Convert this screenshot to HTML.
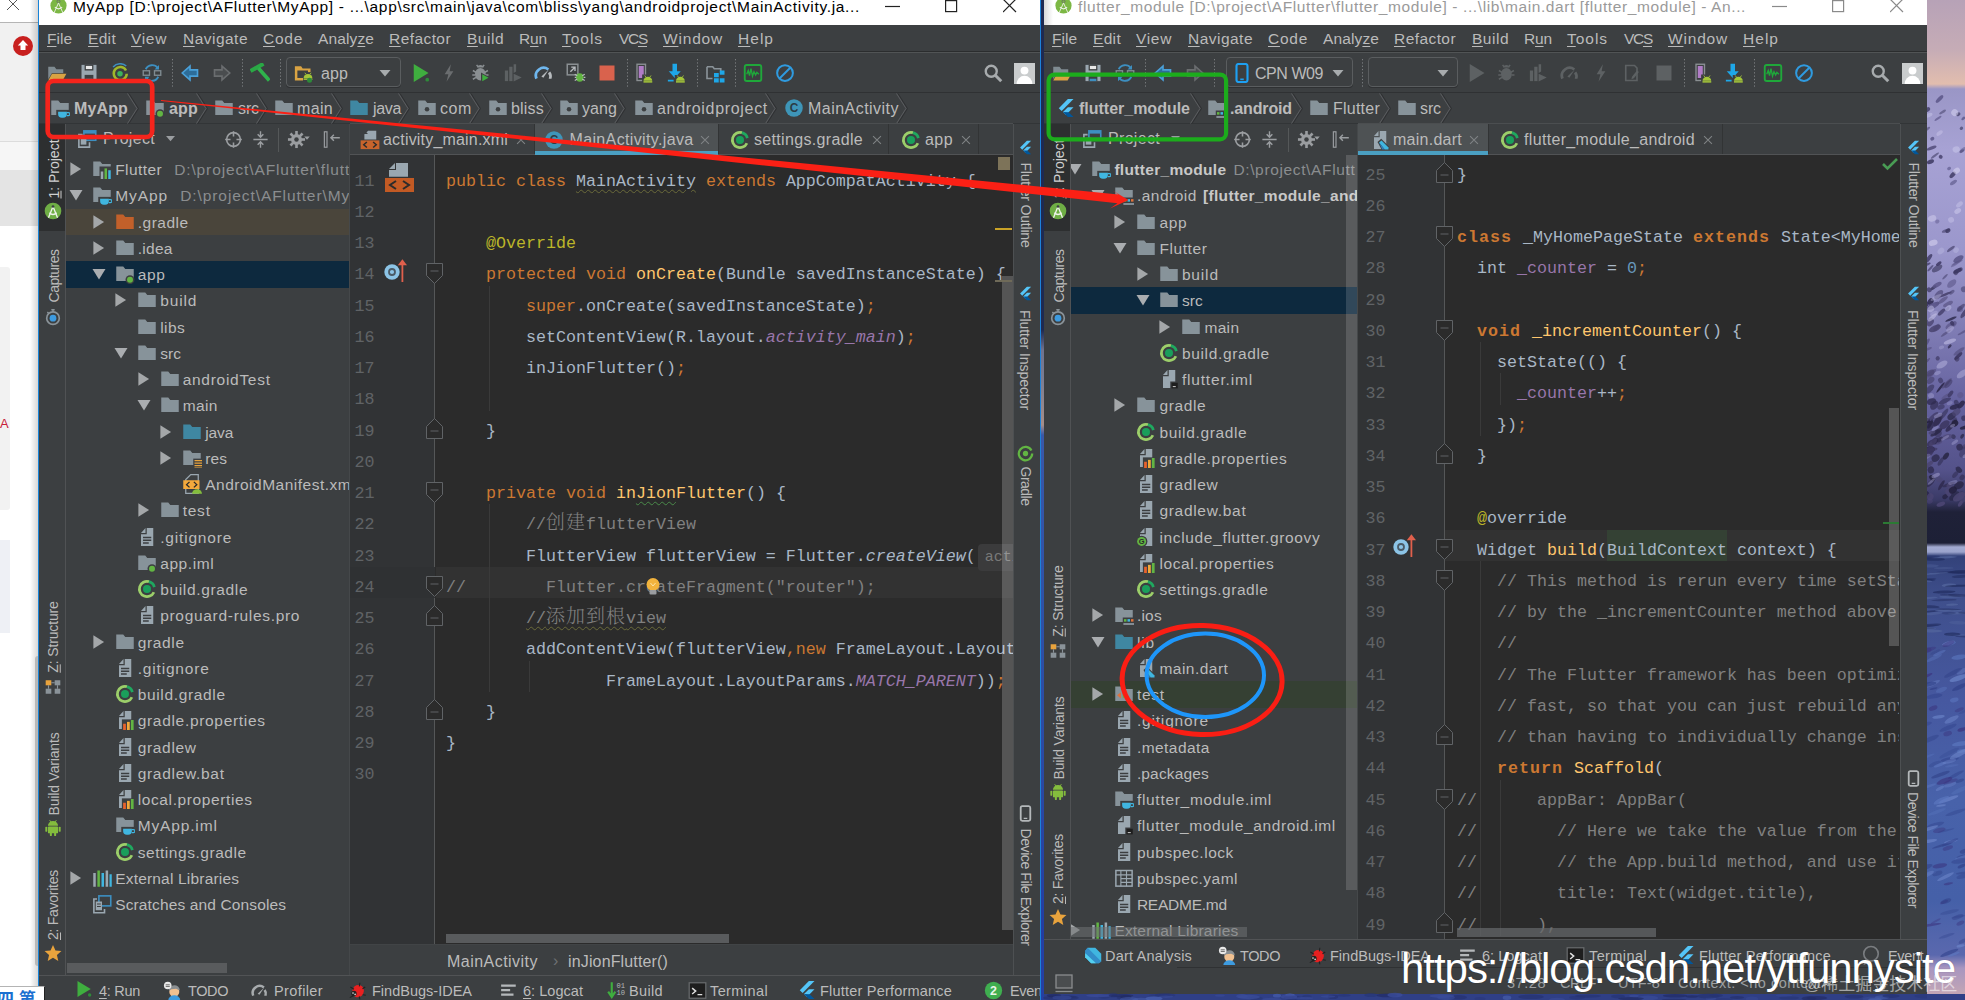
<!DOCTYPE html>
<html lang="en"><head><meta charset="utf-8"><title>IDE</title><style>
html,body{margin:0;padding:0}
body{width:1965px;height:1000px;position:relative;overflow:hidden;background:#3c3f41;font-family:"Liberation Sans",sans-serif}
div,svg{position:absolute;display:block}
.t{white-space:pre}
.t u{text-decoration:underline;text-underline-offset:2px;text-decoration-thickness:1px}
.clip{overflow:hidden}
.cd,.ln{font-family:"Liberation Mono","Noto Sans CJK SC",monospace;font-size:16.667px;line-height:24px;white-space:pre;color:#a9b7c6}
.ln{width:40px;text-align:right;color:#606366}
.k{color:#cc7832}.kb{color:#cc7832;font-weight:bold;letter-spacing:1px}.a{color:#bbb529}.m{color:#ffc66d}.c{color:#808080}
.i{color:#9876aa;font-style:italic}.it{font-style:italic}.n{color:#6897bb}.f{color:#9876aa}
.cjk{font-family:"Noto Serif CJK SC","Noto Sans CJK SC",serif;font-size:19px;line-height:0;letter-spacing:1px;font-weight:300}
.hint{background:#3b3b3c;color:#787878;border-radius:4px;padding:5px 8px 5px 7px;margin-left:2px;font-size:15px}
.wv{text-decoration:underline wavy #6a6a3a;text-decoration-thickness:1px;text-underline-offset:3px}
.wg{text-decoration:underline wavy #4a8a4a;text-decoration-thickness:1px;text-underline-offset:3px}
</style></head>
<body>
<div style="left:0px;top:0px;width:38px;height:1000px;background:#ffffff;"></div>
<div style="left:0px;top:23px;width:38px;height:118px;background:#f1f1f1;"></div>
<div style="left:0px;top:22px;width:38px;height:1px;background:#b5b5b5;"></div>
<div style="left:0px;top:141px;width:38px;height:1px;background:#dcdcdc;"></div>
<div style="left:0px;top:142px;width:38px;height:28px;background:#f6f6f6;"></div>
<div style="left:0px;top:170px;width:38px;height:56px;background:#e4e4e4;"></div>
<div style="left:0px;top:267px;width:10px;height:243px;background:#f2f2f2;border-radius:0 3px 3px 0"></div>
<div style="left:0px;top:540px;width:10px;height:93px;background:#eef0f5;"></div>
<div style="left:30px;top:0px;width:8px;height:1000px;background:linear-gradient(90deg,rgba(0,0,0,0),rgba(0,0,0,.16));"></div>
<div style="left:35px;top:656px;width:3px;height:310px;background:#b9b9b9;border-radius:3px 0 0 3px"></div>
<div style="left:1927px;top:0px;width:38px;height:1000px;background:linear-gradient(180deg,#b7a2b7 0,#c6acb6 5%,#e2bdae 8.4%,#9a96c6 8.9%,#a7a2d4 15%,#9b97cc 25%,#7f7cb4 33%,#6663a0 40%,#54528a 47%,#3a3a66 50%,#1f2138 51.2%,#1d2036 54.3%,#a3abd2 54.7%,#9aa3cc 55.2%,#33427a 55.6%,#3f4f8c 60%,#4658a0 70%,#4862aa 80%,#4560a8 90%,#5a68ae 95.5%,#a896c0 96.8%,#c9a9b2 100%);"></div>
<div style="left:1040px;top:994px;width:925px;height:6px;background:#2f3f86;"></div>
<svg style="left:1927px;top:0" width="38" height="1000" viewBox="0 0 38 1000"><ellipse cx="11.0" cy="118.4" rx="4.1" ry="1.1" fill="#5d588a" opacity="0.71" transform="rotate(-34 11.0 118.4)"/><ellipse cx="34.4" cy="128.3" rx="1.8" ry="1.6" fill="#3c3860" opacity="0.64" transform="rotate(-43 34.4 128.3)"/><ellipse cx="31.1" cy="114.2" rx="2.4" ry="1.9" fill="#3c3860" opacity="0.71" transform="rotate(-22 31.1 114.2)"/><ellipse cx="-0.0" cy="129.3" rx="3.7" ry="1.2" fill="#3c3860" opacity="0.50" transform="rotate(-37 -0.0 129.3)"/><ellipse cx="10.3" cy="221.5" rx="2.2" ry="1.9" fill="#5d588a" opacity="0.49" transform="rotate(-31 10.3 221.5)"/><ellipse cx="26.5" cy="182.5" rx="4.0" ry="1.7" fill="#5d588a" opacity="0.66" transform="rotate(-34 26.5 182.5)"/><ellipse cx="34.9" cy="151.0" rx="2.5" ry="1.3" fill="#4b4572" opacity="0.71" transform="rotate(-27 34.9 151.0)"/><ellipse cx="19.0" cy="230.6" rx="4.4" ry="1.4" fill="#4b4572" opacity="0.68" transform="rotate(-21 19.0 230.6)"/><ellipse cx="4.6" cy="148.0" rx="5.2" ry="1.6" fill="#4b4572" opacity="0.79" transform="rotate(-21 4.6 148.0)"/><ellipse cx="20.9" cy="230.7" rx="2.8" ry="2.0" fill="#3c3860" opacity="0.81" transform="rotate(-32 20.9 230.7)"/><ellipse cx="0.8" cy="109.5" rx="2.6" ry="2.0" fill="#3c3860" opacity="0.77" transform="rotate(-48 0.8 109.5)"/><ellipse cx="23.9" cy="248.9" rx="4.8" ry="1.4" fill="#3c3860" opacity="0.61" transform="rotate(-38 23.9 248.9)"/><ellipse cx="35.6" cy="150.1" rx="3.9" ry="1.7" fill="#5d588a" opacity="0.51" transform="rotate(-43 35.6 150.1)"/><ellipse cx="7.9" cy="155.6" rx="5.0" ry="1.1" fill="#3c3860" opacity="0.58" transform="rotate(-37 7.9 155.6)"/><ellipse cx="3.5" cy="161.7" rx="3.7" ry="2.1" fill="#3c3860" opacity="0.85" transform="rotate(-20 3.5 161.7)"/><ellipse cx="36.3" cy="118.4" rx="2.2" ry="1.3" fill="#5d588a" opacity="0.82" transform="rotate(-43 36.3 118.4)"/><ellipse cx="5.3" cy="138.7" rx="2.1" ry="1.8" fill="#5d588a" opacity="0.88" transform="rotate(-32 5.3 138.7)"/><ellipse cx="25.6" cy="174.9" rx="4.0" ry="2.0" fill="#3c3860" opacity="0.81" transform="rotate(-48 25.6 174.9)"/><ellipse cx="13.7" cy="156.8" rx="1.9" ry="2.0" fill="#4b4572" opacity="0.89" transform="rotate(-48 13.7 156.8)"/><ellipse cx="15.6" cy="112.0" rx="3.9" ry="1.2" fill="#3c3860" opacity="0.50" transform="rotate(-33 15.6 112.0)"/><ellipse cx="12.5" cy="99.0" rx="5.0" ry="1.9" fill="#5d588a" opacity="0.88" transform="rotate(-46 12.5 99.0)"/><ellipse cx="22.1" cy="168.5" rx="2.0" ry="1.7" fill="#5d588a" opacity="0.67" transform="rotate(-21 22.1 168.5)"/><ellipse cx="1.4" cy="115.3" rx="4.4" ry="2.0" fill="#c9c6ea" opacity="0.48" transform="rotate(-20 1.4 115.3)"/><ellipse cx="6.2" cy="242.8" rx="4.5" ry="2.9" fill="#d6d3f0" opacity="0.59" transform="rotate(-18 6.2 242.8)"/><ellipse cx="32.5" cy="204.4" rx="3.9" ry="2.2" fill="#c9c6ea" opacity="0.48" transform="rotate(-40 32.5 204.4)"/><ellipse cx="29.2" cy="149.4" rx="3.7" ry="3.1" fill="#c9c6ea" opacity="0.55" transform="rotate(-15 29.2 149.4)"/><ellipse cx="30.7" cy="211.0" rx="3.7" ry="2.5" fill="#c9c6ea" opacity="0.60" transform="rotate(-34 30.7 211.0)"/><ellipse cx="29.6" cy="170.8" rx="3.6" ry="2.7" fill="#d6d3f0" opacity="0.59" transform="rotate(-35 29.6 170.8)"/><ellipse cx="12.6" cy="133.1" rx="3.7" ry="1.9" fill="#c9c6ea" opacity="0.47" transform="rotate(-39 12.6 133.1)"/><ellipse cx="24.1" cy="219.9" rx="3.0" ry="2.8" fill="#c9c6ea" opacity="0.47" transform="rotate(-18 24.1 219.9)"/><ellipse cx="5.1" cy="218.4" rx="4.3" ry="3.1" fill="#d6d3f0" opacity="0.47" transform="rotate(-16 5.1 218.4)"/><ellipse cx="27.7" cy="112.7" rx="3.4" ry="3.5" fill="#d6d3f0" opacity="0.55" transform="rotate(-44 27.7 112.7)"/><ellipse cx="3.8" cy="374.0" rx="6.9" ry="2.3" fill="#4b4572" opacity="0.51" transform="rotate(-43 3.8 374.0)"/><ellipse cx="30.0" cy="359.0" rx="2.5" ry="2.5" fill="#4b4572" opacity="0.87" transform="rotate(-50 30.0 359.0)"/><ellipse cx="6.4" cy="287.8" rx="3.5" ry="1.5" fill="#2e2a4e" opacity="0.74" transform="rotate(-34 6.4 287.8)"/><ellipse cx="31.4" cy="259.1" rx="5.7" ry="2.8" fill="#5a5588" opacity="0.87" transform="rotate(-32 31.4 259.1)"/><ellipse cx="33.1" cy="269.6" rx="2.8" ry="2.0" fill="#4b4572" opacity="0.77" transform="rotate(-24 33.1 269.6)"/><ellipse cx="29.0" cy="272.5" rx="2.7" ry="2.2" fill="#3b3660" opacity="0.65" transform="rotate(-51 29.0 272.5)"/><ellipse cx="18.7" cy="333.3" rx="5.9" ry="1.2" fill="#4b4572" opacity="0.59" transform="rotate(-35 18.7 333.3)"/><ellipse cx="-0.3" cy="264.7" rx="4.3" ry="1.1" fill="#3b3660" opacity="0.70" transform="rotate(-24 -0.3 264.7)"/><ellipse cx="22.5" cy="325.8" rx="4.6" ry="2.4" fill="#5a5588" opacity="0.73" transform="rotate(-39 22.5 325.8)"/><ellipse cx="7.9" cy="328.5" rx="6.4" ry="2.9" fill="#4b4572" opacity="0.88" transform="rotate(-23 7.9 328.5)"/><ellipse cx="3.5" cy="268.2" rx="4.2" ry="1.1" fill="#3b3660" opacity="0.60" transform="rotate(-47 3.5 268.2)"/><ellipse cx="10.1" cy="268.4" rx="5.9" ry="2.9" fill="#2e2a4e" opacity="0.56" transform="rotate(-32 10.1 268.4)"/><ellipse cx="33.3" cy="395.1" rx="3.1" ry="2.9" fill="#5a5588" opacity="0.57" transform="rotate(-41 33.3 395.1)"/><ellipse cx="24.7" cy="283.6" rx="5.5" ry="3.0" fill="#5a5588" opacity="0.59" transform="rotate(-41 24.7 283.6)"/><ellipse cx="10.7" cy="358.3" rx="2.1" ry="2.1" fill="#3b3660" opacity="0.67" transform="rotate(-40 10.7 358.3)"/><ellipse cx="18.7" cy="294.3" rx="6.8" ry="1.2" fill="#4b4572" opacity="0.94" transform="rotate(-23 18.7 294.3)"/><ellipse cx="2.2" cy="289.8" rx="2.2" ry="2.6" fill="#4b4572" opacity="0.87" transform="rotate(-46 2.2 289.8)"/><ellipse cx="32.0" cy="351.4" rx="6.7" ry="1.8" fill="#5a5588" opacity="0.82" transform="rotate(-36 32.0 351.4)"/><ellipse cx="1.6" cy="258.6" rx="5.4" ry="1.9" fill="#3b3660" opacity="0.79" transform="rotate(-52 1.6 258.6)"/><ellipse cx="30.1" cy="262.6" rx="6.3" ry="1.1" fill="#5a5588" opacity="0.51" transform="rotate(-25 30.1 262.6)"/><ellipse cx="37.8" cy="312.7" rx="6.6" ry="2.2" fill="#4b4572" opacity="0.92" transform="rotate(-53 37.8 312.7)"/><ellipse cx="36.8" cy="289.3" rx="2.9" ry="2.9" fill="#4b4572" opacity="0.63" transform="rotate(-33 36.8 289.3)"/><ellipse cx="18.0" cy="276.7" rx="3.7" ry="1.0" fill="#3b3660" opacity="0.51" transform="rotate(-46 18.0 276.7)"/><ellipse cx="18.2" cy="396.7" rx="4.6" ry="1.5" fill="#5a5588" opacity="0.80" transform="rotate(-39 18.2 396.7)"/><ellipse cx="19.8" cy="383.3" rx="6.9" ry="1.6" fill="#4b4572" opacity="0.65" transform="rotate(-47 19.8 383.3)"/><ellipse cx="31.3" cy="356.0" rx="5.2" ry="1.8" fill="#3b3660" opacity="0.88" transform="rotate(-43 31.3 356.0)"/><ellipse cx="-1.4" cy="343.8" rx="6.4" ry="1.9" fill="#5a5588" opacity="0.89" transform="rotate(-53 -1.4 343.8)"/><ellipse cx="24.8" cy="292.3" rx="3.2" ry="1.6" fill="#4b4572" opacity="0.62" transform="rotate(-39 24.8 292.3)"/><ellipse cx="-1.9" cy="304.6" rx="3.6" ry="3.0" fill="#3b3660" opacity="0.93" transform="rotate(-44 -1.9 304.6)"/><ellipse cx="10.4" cy="303.5" rx="2.0" ry="1.8" fill="#4b4572" opacity="0.61" transform="rotate(-38 10.4 303.5)"/><ellipse cx="29.0" cy="263.6" rx="6.1" ry="1.3" fill="#5a5588" opacity="0.51" transform="rotate(-34 29.0 263.6)"/><ellipse cx="10.2" cy="284.9" rx="4.9" ry="2.1" fill="#5a5588" opacity="0.84" transform="rotate(-29 10.2 284.9)"/><ellipse cx="26.8" cy="324.1" rx="3.4" ry="2.2" fill="#5a5588" opacity="0.83" transform="rotate(-50 26.8 324.1)"/><ellipse cx="30.5" cy="270.9" rx="4.6" ry="2.0" fill="#3b3660" opacity="0.87" transform="rotate(-26 30.5 270.9)"/><ellipse cx="21.4" cy="383.9" rx="5.4" ry="2.4" fill="#3b3660" opacity="0.52" transform="rotate(-47 21.4 383.9)"/><ellipse cx="23.5" cy="393.9" rx="3.9" ry="1.9" fill="#3b3660" opacity="0.78" transform="rotate(-53 23.5 393.9)"/><ellipse cx="25.2" cy="323.4" rx="2.0" ry="2.6" fill="#3b3660" opacity="0.80" transform="rotate(-29 25.2 323.4)"/><ellipse cx="0.6" cy="360.5" rx="3.3" ry="1.1" fill="#4b4572" opacity="0.60" transform="rotate(-46 0.6 360.5)"/><ellipse cx="24.0" cy="319.1" rx="6.2" ry="1.2" fill="#2e2a4e" opacity="0.85" transform="rotate(-23 24.0 319.1)"/><ellipse cx="22.7" cy="346.4" rx="2.4" ry="1.3" fill="#2e2a4e" opacity="0.78" transform="rotate(-46 22.7 346.4)"/><ellipse cx="3.3" cy="322.4" rx="4.4" ry="2.9" fill="#4b4572" opacity="0.80" transform="rotate(-52 3.3 322.4)"/><ellipse cx="9.6" cy="327.5" rx="4.3" ry="1.9" fill="#4b4572" opacity="0.64" transform="rotate(-51 9.6 327.5)"/><ellipse cx="1.4" cy="320.9" rx="3.4" ry="1.2" fill="#5a5588" opacity="0.95" transform="rotate(-37 1.4 320.9)"/><ellipse cx="13.5" cy="387.5" rx="6.7" ry="1.1" fill="#2e2a4e" opacity="0.93" transform="rotate(-52 13.5 387.5)"/><ellipse cx="3.3" cy="373.0" rx="4.5" ry="2.8" fill="#4b4572" opacity="0.72" transform="rotate(-30 3.3 373.0)"/><ellipse cx="33.0" cy="309.1" rx="2.8" ry="2.9" fill="#5a5588" opacity="0.64" transform="rotate(-31 33.0 309.1)"/><ellipse cx="3.6" cy="301.6" rx="3.6" ry="2.7" fill="#2e2a4e" opacity="0.88" transform="rotate(-55 3.6 301.6)"/><ellipse cx="2.8" cy="389.0" rx="5.6" ry="2.8" fill="#2e2a4e" opacity="0.53" transform="rotate(-45 2.8 389.0)"/><ellipse cx="13.6" cy="380.5" rx="2.4" ry="2.9" fill="#3b3660" opacity="0.63" transform="rotate(-29 13.6 380.5)"/><ellipse cx="0.1" cy="349.3" rx="5.2" ry="1.3" fill="#5a5588" opacity="0.73" transform="rotate(-21 0.1 349.3)"/><ellipse cx="5.6" cy="306.0" rx="6.8" ry="2.8" fill="#5a5588" opacity="0.91" transform="rotate(-27 5.6 306.0)"/><ellipse cx="35.6" cy="332.4" rx="5.6" ry="1.1" fill="#5a5588" opacity="0.78" transform="rotate(-29 35.6 332.4)"/><ellipse cx="3.5" cy="380.4" rx="4.4" ry="2.8" fill="#4b4572" opacity="0.71" transform="rotate(-36 3.5 380.4)"/><ellipse cx="11.7" cy="294.7" rx="5.7" ry="3.0" fill="#4b4572" opacity="0.64" transform="rotate(-46 11.7 294.7)"/><ellipse cx="20.3" cy="309.2" rx="2.8" ry="1.3" fill="#5a5588" opacity="0.75" transform="rotate(-48 20.3 309.2)"/><ellipse cx="16.1" cy="299.9" rx="5.8" ry="1.9" fill="#4b4572" opacity="0.54" transform="rotate(-36 16.1 299.9)"/><ellipse cx="11.7" cy="263.7" rx="3.2" ry="1.5" fill="#3b3660" opacity="0.84" transform="rotate(-35 11.7 263.7)"/><ellipse cx="14.5" cy="312.1" rx="4.6" ry="1.8" fill="#3b3660" opacity="0.72" transform="rotate(-43 14.5 312.1)"/><ellipse cx="21.0" cy="304.0" rx="5.4" ry="2.1" fill="#4b4572" opacity="0.54" transform="rotate(-27 21.0 304.0)"/><ellipse cx="33.9" cy="307.7" rx="5.2" ry="1.9" fill="#3b3660" opacity="0.56" transform="rotate(-44 33.9 307.7)"/><ellipse cx="15.0" cy="364.6" rx="6.1" ry="3.0" fill="#c2bfe6" opacity="0.45" transform="rotate(-30 15.0 364.6)"/><ellipse cx="35.1" cy="373.8" rx="6.3" ry="3.0" fill="#c2bfe6" opacity="0.41" transform="rotate(-38 35.1 373.8)"/><ellipse cx="4.1" cy="395.8" rx="3.0" ry="2.7" fill="#b3b0dc" opacity="0.37" transform="rotate(-24 4.1 395.8)"/><ellipse cx="29.1" cy="250.2" rx="3.1" ry="2.4" fill="#b3b0dc" opacity="0.59" transform="rotate(-44 29.1 250.2)"/><ellipse cx="23.1" cy="329.2" rx="4.5" ry="2.6" fill="#b3b0dc" opacity="0.48" transform="rotate(-42 23.1 329.2)"/><ellipse cx="21.3" cy="308.2" rx="3.5" ry="2.4" fill="#b3b0dc" opacity="0.60" transform="rotate(-45 21.3 308.2)"/><ellipse cx="9.1" cy="297.5" rx="6.3" ry="1.9" fill="#c2bfe6" opacity="0.36" transform="rotate(-29 9.1 297.5)"/><ellipse cx="14.5" cy="347.4" rx="2.7" ry="1.8" fill="#b3b0dc" opacity="0.37" transform="rotate(-18 14.5 347.4)"/><ellipse cx="7.1" cy="313.6" rx="4.2" ry="2.2" fill="#b3b0dc" opacity="0.44" transform="rotate(-24 7.1 313.6)"/><ellipse cx="13.9" cy="251.0" rx="3.8" ry="2.8" fill="#b3b0dc" opacity="0.59" transform="rotate(-43 13.9 251.0)"/><ellipse cx="10.5" cy="373.0" rx="3.5" ry="1.8" fill="#b3b0dc" opacity="0.38" transform="rotate(-22 10.5 373.0)"/><ellipse cx="22.9" cy="341.5" rx="6.5" ry="2.2" fill="#c2bfe6" opacity="0.59" transform="rotate(-18 22.9 341.5)"/><ellipse cx="3.9" cy="309.0" rx="3.5" ry="3.0" fill="#c2bfe6" opacity="0.53" transform="rotate(-41 3.9 309.0)"/><ellipse cx="5.4" cy="317.4" rx="5.7" ry="2.0" fill="#c2bfe6" opacity="0.58" transform="rotate(-42 5.4 317.4)"/><ellipse cx="11.2" cy="419.5" rx="6.7" ry="3.4" fill="#4b4572" opacity="0.88" transform="rotate(-58 11.2 419.5)"/><ellipse cx="37.4" cy="446.5" rx="2.5" ry="1.7" fill="#4b4572" opacity="0.93" transform="rotate(-56 37.4 446.5)"/><ellipse cx="2.9" cy="501.2" rx="3.0" ry="2.4" fill="#4b4572" opacity="0.54" transform="rotate(-19 2.9 501.2)"/><ellipse cx="26.2" cy="420.6" rx="4.7" ry="2.6" fill="#4b4572" opacity="0.51" transform="rotate(-44 26.2 420.6)"/><ellipse cx="14.4" cy="485.2" rx="5.8" ry="1.6" fill="#2e2a4e" opacity="0.86" transform="rotate(-58 14.4 485.2)"/><ellipse cx="0.5" cy="420.5" rx="2.3" ry="3.0" fill="#23203c" opacity="0.93" transform="rotate(-42 0.5 420.5)"/><ellipse cx="22.7" cy="427.5" rx="5.6" ry="2.3" fill="#2e2a4e" opacity="0.82" transform="rotate(-46 22.7 427.5)"/><ellipse cx="21.8" cy="484.6" rx="6.7" ry="1.7" fill="#2e2a4e" opacity="0.71" transform="rotate(-19 21.8 484.6)"/><ellipse cx="36.3" cy="500.2" rx="3.9" ry="2.1" fill="#4b4572" opacity="0.56" transform="rotate(-39 36.3 500.2)"/><ellipse cx="17.9" cy="400.9" rx="6.7" ry="2.3" fill="#3b3660" opacity="0.77" transform="rotate(-25 17.9 400.9)"/><ellipse cx="11.1" cy="433.6" rx="3.8" ry="3.5" fill="#3b3660" opacity="0.68" transform="rotate(-56 11.1 433.6)"/><ellipse cx="4.4" cy="442.8" rx="5.2" ry="2.7" fill="#3b3660" opacity="0.94" transform="rotate(-33 4.4 442.8)"/><ellipse cx="33.3" cy="503.7" rx="3.3" ry="1.7" fill="#4b4572" opacity="0.94" transform="rotate(-55 33.3 503.7)"/><ellipse cx="36.9" cy="418.2" rx="2.7" ry="2.7" fill="#3b3660" opacity="0.84" transform="rotate(-15 36.9 418.2)"/><ellipse cx="31.9" cy="469.8" rx="2.6" ry="3.6" fill="#23203c" opacity="0.67" transform="rotate(-45 31.9 469.8)"/><ellipse cx="27.5" cy="420.9" rx="3.2" ry="2.1" fill="#3b3660" opacity="0.65" transform="rotate(-52 27.5 420.9)"/><ellipse cx="13.8" cy="504.2" rx="4.5" ry="2.1" fill="#4b4572" opacity="0.95" transform="rotate(-20 13.8 504.2)"/><ellipse cx="2.1" cy="449.9" rx="6.1" ry="3.6" fill="#2e2a4e" opacity="0.89" transform="rotate(-14 2.1 449.9)"/><ellipse cx="7.3" cy="405.3" rx="5.0" ry="3.6" fill="#2e2a4e" opacity="0.67" transform="rotate(-50 7.3 405.3)"/><ellipse cx="32.6" cy="447.2" rx="3.3" ry="3.4" fill="#2e2a4e" opacity="0.79" transform="rotate(-13 32.6 447.2)"/><ellipse cx="26.4" cy="436.7" rx="2.2" ry="2.4" fill="#23203c" opacity="0.52" transform="rotate(-58 26.4 436.7)"/><ellipse cx="27.3" cy="496.0" rx="6.1" ry="3.5" fill="#23203c" opacity="0.58" transform="rotate(-40 27.3 496.0)"/><ellipse cx="10.5" cy="421.4" rx="6.0" ry="2.9" fill="#2e2a4e" opacity="0.86" transform="rotate(-57 10.5 421.4)"/><ellipse cx="24.6" cy="416.2" rx="4.7" ry="3.1" fill="#23203c" opacity="0.68" transform="rotate(-40 24.6 416.2)"/><ellipse cx="9.3" cy="432.3" rx="6.8" ry="2.3" fill="#23203c" opacity="0.69" transform="rotate(-32 9.3 432.3)"/><ellipse cx="-1.3" cy="480.5" rx="6.0" ry="3.1" fill="#4b4572" opacity="0.59" transform="rotate(-40 -1.3 480.5)"/><ellipse cx="-1.8" cy="494.7" rx="4.1" ry="3.6" fill="#23203c" opacity="0.71" transform="rotate(-40 -1.8 494.7)"/><ellipse cx="4.5" cy="401.6" rx="4.8" ry="3.1" fill="#2e2a4e" opacity="0.76" transform="rotate(-15 4.5 401.6)"/><ellipse cx="35.1" cy="477.4" rx="2.9" ry="2.4" fill="#3b3660" opacity="0.92" transform="rotate(-52 35.1 477.4)"/><ellipse cx="2.4" cy="451.5" rx="6.0" ry="3.9" fill="#3b3660" opacity="0.88" transform="rotate(-50 2.4 451.5)"/><ellipse cx="-0.3" cy="495.8" rx="3.6" ry="3.0" fill="#2e2a4e" opacity="0.91" transform="rotate(-28 -0.3 495.8)"/><ellipse cx="22.8" cy="486.6" rx="2.8" ry="3.5" fill="#4b4572" opacity="0.78" transform="rotate(-49 22.8 486.6)"/><ellipse cx="5.8" cy="449.7" rx="4.8" ry="1.6" fill="#3b3660" opacity="0.67" transform="rotate(-13 5.8 449.7)"/><ellipse cx="2.9" cy="425.9" rx="5.6" ry="3.7" fill="#2e2a4e" opacity="0.80" transform="rotate(-58 2.9 425.9)"/><ellipse cx="11.0" cy="440.9" rx="4.3" ry="3.6" fill="#4b4572" opacity="0.64" transform="rotate(-21 11.0 440.9)"/><ellipse cx="8.0" cy="440.9" rx="3.8" ry="2.8" fill="#2e2a4e" opacity="0.78" transform="rotate(-51 8.0 440.9)"/><ellipse cx="17.6" cy="424.7" rx="5.8" ry="3.4" fill="#3b3660" opacity="0.86" transform="rotate(-37 17.6 424.7)"/><ellipse cx="14.0" cy="407.0" rx="3.8" ry="2.4" fill="#2e2a4e" opacity="0.52" transform="rotate(-20 14.0 407.0)"/><ellipse cx="3.2" cy="496.8" rx="3.6" ry="3.3" fill="#4b4572" opacity="0.79" transform="rotate(-56 3.2 496.8)"/><ellipse cx="29.4" cy="402.7" rx="2.3" ry="3.0" fill="#2e2a4e" opacity="0.59" transform="rotate(-25 29.4 402.7)"/><ellipse cx="37.3" cy="451.6" rx="6.8" ry="3.8" fill="#3b3660" opacity="0.53" transform="rotate(-52 37.3 451.6)"/><ellipse cx="12.0" cy="479.4" rx="2.8" ry="3.7" fill="#4b4572" opacity="0.56" transform="rotate(-46 12.0 479.4)"/><ellipse cx="18.1" cy="496.6" rx="3.0" ry="2.2" fill="#23203c" opacity="0.67" transform="rotate(-35 18.1 496.6)"/><ellipse cx="6.0" cy="442.4" rx="5.2" ry="2.2" fill="#4b4572" opacity="0.58" transform="rotate(-44 6.0 442.4)"/><ellipse cx="29.4" cy="412.1" rx="4.7" ry="3.1" fill="#4b4572" opacity="0.75" transform="rotate(-42 29.4 412.1)"/><ellipse cx="21.2" cy="492.7" rx="2.5" ry="4.0" fill="#4b4572" opacity="0.83" transform="rotate(-29 21.2 492.7)"/><ellipse cx="12.9" cy="439.5" rx="3.8" ry="1.9" fill="#2e2a4e" opacity="0.70" transform="rotate(-43 12.9 439.5)"/><ellipse cx="5.1" cy="478.1" rx="2.2" ry="3.5" fill="#23203c" opacity="0.83" transform="rotate(-47 5.1 478.1)"/><ellipse cx="27.9" cy="423.3" rx="3.5" ry="3.1" fill="#23203c" opacity="0.90" transform="rotate(-39 27.9 423.3)"/><ellipse cx="3.3" cy="423.9" rx="5.3" ry="1.6" fill="#23203c" opacity="0.64" transform="rotate(-60 3.3 423.9)"/><ellipse cx="18.9" cy="456.1" rx="4.1" ry="2.3" fill="#23203c" opacity="0.78" transform="rotate(-53 18.9 456.1)"/><ellipse cx="17.0" cy="414.1" rx="6.7" ry="2.1" fill="#2e2a4e" opacity="0.53" transform="rotate(-53 17.0 414.1)"/><ellipse cx="3.8" cy="469.9" rx="3.3" ry="3.5" fill="#2e2a4e" opacity="0.79" transform="rotate(-12 3.8 469.9)"/><ellipse cx="20.5" cy="436.8" rx="5.2" ry="2.6" fill="#4b4572" opacity="0.61" transform="rotate(-13 20.5 436.8)"/><ellipse cx="34.1" cy="404.6" rx="4.7" ry="2.5" fill="#2e2a4e" opacity="0.91" transform="rotate(-48 34.1 404.6)"/><ellipse cx="2.2" cy="464.3" rx="5.3" ry="2.0" fill="#4b4572" opacity="0.87" transform="rotate(-39 2.2 464.3)"/><ellipse cx="5.0" cy="432.5" rx="3.5" ry="1.6" fill="#4b4572" opacity="0.82" transform="rotate(-16 5.0 432.5)"/><ellipse cx="-1.7" cy="488.7" rx="5.7" ry="2.7" fill="#4b4572" opacity="0.58" transform="rotate(-23 -1.7 488.7)"/><ellipse cx="37.9" cy="427.4" rx="5.2" ry="1.8" fill="#23203c" opacity="0.82" transform="rotate(-15 37.9 427.4)"/><ellipse cx="8.6" cy="458.1" rx="4.2" ry="3.5" fill="#23203c" opacity="0.63" transform="rotate(-34 8.6 458.1)"/><ellipse cx="35.1" cy="493.9" rx="2.4" ry="2.8" fill="#3b3660" opacity="0.88" transform="rotate(-52 35.1 493.9)"/><ellipse cx="6.1" cy="416.7" rx="6.6" ry="2.0" fill="#3b3660" opacity="0.67" transform="rotate(-41 6.1 416.7)"/><ellipse cx="32.1" cy="496.8" rx="6.9" ry="3.6" fill="#4b4572" opacity="0.88" transform="rotate(-33 32.1 496.8)"/><ellipse cx="25.9" cy="490.0" rx="4.2" ry="3.3" fill="#23203c" opacity="0.86" transform="rotate(-31 25.9 490.0)"/><ellipse cx="13.7" cy="461.5" rx="4.8" ry="1.9" fill="#2e2a4e" opacity="0.55" transform="rotate(-58 13.7 461.5)"/><ellipse cx="35.2" cy="436.2" rx="2.7" ry="1.6" fill="#2e2a4e" opacity="0.81" transform="rotate(-58 35.2 436.2)"/><ellipse cx="27.5" cy="406.9" rx="5.0" ry="2.4" fill="#2e2a4e" opacity="0.90" transform="rotate(-19 27.5 406.9)"/><ellipse cx="28.2" cy="474.7" rx="3.9" ry="2.1" fill="#2e2a4e" opacity="0.52" transform="rotate(-50 28.2 474.7)"/><ellipse cx="31.9" cy="485.3" rx="5.2" ry="3.6" fill="#23203c" opacity="0.71" transform="rotate(-28 31.9 485.3)"/><ellipse cx="3.3" cy="483.2" rx="5.2" ry="2.2" fill="#23203c" opacity="0.51" transform="rotate(-43 3.3 483.2)"/><ellipse cx="8.3" cy="428.3" rx="4.1" ry="1.6" fill="#9895c8" opacity="0.51" transform="rotate(-35 8.3 428.3)"/><ellipse cx="22.7" cy="403.1" rx="3.2" ry="1.7" fill="#9895c8" opacity="0.42" transform="rotate(-22 22.7 403.1)"/><ellipse cx="-0.1" cy="456.6" rx="4.1" ry="2.2" fill="#9895c8" opacity="0.34" transform="rotate(-28 -0.1 456.6)"/><ellipse cx="-1.9" cy="420.2" rx="4.3" ry="2.5" fill="#9895c8" opacity="0.32" transform="rotate(-45 -1.9 420.2)"/><ellipse cx="25.8" cy="482.5" rx="4.9" ry="1.9" fill="#9895c8" opacity="0.44" transform="rotate(-16 25.8 482.5)"/><ellipse cx="4.4" cy="481.5" rx="4.8" ry="1.3" fill="#a9a6d6" opacity="0.42" transform="rotate(-40 4.4 481.5)"/><ellipse cx="37.6" cy="456.1" rx="2.3" ry="1.5" fill="#9895c8" opacity="0.52" transform="rotate(-42 37.6 456.1)"/><ellipse cx="27.8" cy="442.2" rx="3.9" ry="1.6" fill="#9895c8" opacity="0.53" transform="rotate(-36 27.8 442.2)"/><ellipse cx="18.0" cy="437.9" rx="4.7" ry="1.4" fill="#a9a6d6" opacity="0.39" transform="rotate(-31 18.0 437.9)"/><ellipse cx="11.1" cy="415.5" rx="4.5" ry="2.0" fill="#a9a6d6" opacity="0.42" transform="rotate(-23 11.1 415.5)"/><ellipse cx="25.6" cy="425.7" rx="2.7" ry="1.5" fill="#a9a6d6" opacity="0.43" transform="rotate(-26 25.6 425.7)"/><ellipse cx="8.7" cy="475.5" rx="4.5" ry="1.9" fill="#a9a6d6" opacity="0.48" transform="rotate(-23 8.7 475.5)"/><ellipse cx="22.1" cy="585.3" rx="7.4" ry="1.7" fill="#55689f" opacity="0.70" transform="rotate(-3 22.1 585.3)"/><ellipse cx="4.6" cy="611.3" rx="7.0" ry="0.9" fill="#1f2a5c" opacity="0.61" transform="rotate(-5 4.6 611.3)"/><ellipse cx="15.4" cy="572.5" rx="11.4" ry="0.9" fill="#1f2a5c" opacity="0.51" transform="rotate(-4 15.4 572.5)"/><ellipse cx="-1.5" cy="627.8" rx="9.4" ry="1.0" fill="#1f2a5c" opacity="0.51" transform="rotate(4 -1.5 627.8)"/><ellipse cx="3.7" cy="606.7" rx="9.0" ry="1.5" fill="#1f2a5c" opacity="0.60" transform="rotate(3 3.7 606.7)"/><ellipse cx="21.5" cy="610.4" rx="13.5" ry="1.4" fill="#55689f" opacity="0.60" transform="rotate(1 21.5 610.4)"/><ellipse cx="32.1" cy="613.1" rx="11.4" ry="1.2" fill="#55689f" opacity="0.60" transform="rotate(-3 32.1 613.1)"/><ellipse cx="33.8" cy="576.4" rx="9.0" ry="1.5" fill="#1f2a5c" opacity="0.52" transform="rotate(-4 33.8 576.4)"/><ellipse cx="-1.2" cy="628.1" rx="10.2" ry="1.4" fill="#55689f" opacity="0.46" transform="rotate(3 -1.2 628.1)"/><ellipse cx="-1.6" cy="625.9" rx="14.1" ry="0.9" fill="#27336a" opacity="0.41" transform="rotate(-3 -1.6 625.9)"/><ellipse cx="29.3" cy="635.0" rx="10.2" ry="0.9" fill="#55689f" opacity="0.42" transform="rotate(-0 29.3 635.0)"/><ellipse cx="17.0" cy="557.4" rx="12.9" ry="1.1" fill="#55689f" opacity="0.68" transform="rotate(-3 17.0 557.4)"/><ellipse cx="6.4" cy="613.5" rx="8.9" ry="1.5" fill="#55689f" opacity="0.47" transform="rotate(-5 6.4 613.5)"/><ellipse cx="0.3" cy="579.0" rx="9.0" ry="0.8" fill="#1f2a5c" opacity="0.57" transform="rotate(-2 0.3 579.0)"/><ellipse cx="25.0" cy="604.7" rx="6.1" ry="1.1" fill="#55689f" opacity="0.69" transform="rotate(-2 25.0 604.7)"/><ellipse cx="37.8" cy="636.7" rx="9.6" ry="0.9" fill="#27336a" opacity="0.63" transform="rotate(3 37.8 636.7)"/><ellipse cx="23.4" cy="595.4" rx="10.6" ry="1.0" fill="#1f2a5c" opacity="0.58" transform="rotate(4 23.4 595.4)"/><ellipse cx="31.2" cy="622.8" rx="9.1" ry="1.7" fill="#55689f" opacity="0.39" transform="rotate(2 31.2 622.8)"/><ellipse cx="31.3" cy="585.8" rx="13.5" ry="1.0" fill="#1f2a5c" opacity="0.69" transform="rotate(-2 31.3 585.8)"/><ellipse cx="25.2" cy="596.5" rx="13.1" ry="1.5" fill="#55689f" opacity="0.46" transform="rotate(-2 25.2 596.5)"/><ellipse cx="17.2" cy="592.0" rx="11.4" ry="1.4" fill="#1f2a5c" opacity="0.65" transform="rotate(-2 17.2 592.0)"/><ellipse cx="0.3" cy="625.5" rx="14.1" ry="1.5" fill="#1f2a5c" opacity="0.57" transform="rotate(-5 0.3 625.5)"/><ellipse cx="-1.4" cy="557.0" rx="14.5" ry="1.4" fill="#27336a" opacity="0.55" transform="rotate(-3 -1.4 557.0)"/><ellipse cx="32.2" cy="571.6" rx="9.5" ry="1.5" fill="#1f2a5c" opacity="0.63" transform="rotate(-4 32.2 571.6)"/><ellipse cx="4.7" cy="630.9" rx="11.1" ry="1.5" fill="#55689f" opacity="0.63" transform="rotate(1 4.7 630.9)"/><ellipse cx="31.6" cy="572.6" rx="11.9" ry="1.3" fill="#1f2a5c" opacity="0.58" transform="rotate(1 31.6 572.6)"/><ellipse cx="2.7" cy="565.9" rx="9.2" ry="1.6" fill="#55689f" opacity="0.37" transform="rotate(-1 2.7 565.9)"/><ellipse cx="16.7" cy="568.1" rx="9.9" ry="1.2" fill="#55689f" opacity="0.35" transform="rotate(-1 16.7 568.1)"/><ellipse cx="31.6" cy="595.3" rx="10.6" ry="1.4" fill="#1f2a5c" opacity="0.50" transform="rotate(2 31.6 595.3)"/><ellipse cx="38.0" cy="612.8" rx="6.8" ry="1.1" fill="#27336a" opacity="0.56" transform="rotate(0 38.0 612.8)"/><ellipse cx="25.3" cy="634.2" rx="8.3" ry="1.7" fill="#1f2a5c" opacity="0.62" transform="rotate(-1 25.3 634.2)"/><ellipse cx="3.8" cy="573.9" rx="9.2" ry="0.9" fill="#55689f" opacity="0.48" transform="rotate(-5 3.8 573.9)"/><ellipse cx="17.0" cy="600.1" rx="12.7" ry="1.0" fill="#1f2a5c" opacity="0.44" transform="rotate(-2 17.0 600.1)"/><ellipse cx="0.1" cy="580.3" rx="8.6" ry="1.2" fill="#1f2a5c" opacity="0.66" transform="rotate(-3 0.1 580.3)"/><ellipse cx="11.8" cy="573.1" rx="9.9" ry="0.9" fill="#55689f" opacity="0.45" transform="rotate(-4 11.8 573.1)"/><ellipse cx="21.5" cy="609.3" rx="12.8" ry="0.8" fill="#1f2a5c" opacity="0.54" transform="rotate(1 21.5 609.3)"/><ellipse cx="-0.0" cy="581.2" rx="5.1" ry="0.9" fill="#55689f" opacity="0.62" transform="rotate(3 -0.0 581.2)"/><ellipse cx="0.4" cy="598.1" rx="10.4" ry="1.1" fill="#55689f" opacity="0.59" transform="rotate(-5 0.4 598.1)"/><ellipse cx="21.9" cy="613.2" rx="7.1" ry="1.4" fill="#27336a" opacity="0.39" transform="rotate(-1 21.9 613.2)"/><ellipse cx="5.3" cy="559.1" rx="12.7" ry="1.7" fill="#1f2a5c" opacity="0.66" transform="rotate(1 5.3 559.1)"/><ellipse cx="3.5" cy="739.0" rx="9.0" ry="2.3" fill="#2f3f86" opacity="0.41" transform="rotate(-24 3.5 739.0)"/><ellipse cx="15.2" cy="845.4" rx="10.5" ry="1.1" fill="#2f3f86" opacity="0.59" transform="rotate(-17 15.2 845.4)"/><ellipse cx="29.0" cy="774.7" rx="8.9" ry="1.6" fill="#33458e" opacity="0.51" transform="rotate(-27 29.0 774.7)"/><ellipse cx="37.7" cy="851.0" rx="5.1" ry="2.2" fill="#2f3f86" opacity="0.53" transform="rotate(-17 37.7 851.0)"/><ellipse cx="6.5" cy="688.6" rx="4.1" ry="1.0" fill="#2f3f86" opacity="0.65" transform="rotate(-14 6.5 688.6)"/><ellipse cx="32.3" cy="709.8" rx="4.8" ry="1.7" fill="#3a2f7a" opacity="0.38" transform="rotate(-22 32.3 709.8)"/><ellipse cx="27.3" cy="700.0" rx="4.4" ry="2.2" fill="#5c78c0" opacity="0.56" transform="rotate(-14 27.3 700.0)"/><ellipse cx="1.4" cy="841.2" rx="9.0" ry="1.7" fill="#6f88cc" opacity="0.62" transform="rotate(-9 1.4 841.2)"/><ellipse cx="0.1" cy="650.2" rx="4.4" ry="2.3" fill="#3a2f7a" opacity="0.33" transform="rotate(-14 0.1 650.2)"/><ellipse cx="10.4" cy="873.4" rx="5.2" ry="2.3" fill="#2f3f86" opacity="0.41" transform="rotate(-18 10.4 873.4)"/><ellipse cx="36.0" cy="872.9" rx="7.3" ry="1.2" fill="#2f3f86" opacity="0.43" transform="rotate(-9 36.0 872.9)"/><ellipse cx="23.8" cy="841.5" rx="6.9" ry="1.6" fill="#6f88cc" opacity="0.57" transform="rotate(-12 23.8 841.5)"/><ellipse cx="20.7" cy="733.6" rx="4.4" ry="2.5" fill="#3a2f7a" opacity="0.42" transform="rotate(-14 20.7 733.6)"/><ellipse cx="22.2" cy="952.8" rx="9.8" ry="1.9" fill="#33458e" opacity="0.64" transform="rotate(-22 22.2 952.8)"/><ellipse cx="7.8" cy="764.0" rx="6.6" ry="2.2" fill="#33458e" opacity="0.40" transform="rotate(-23 7.8 764.0)"/><ellipse cx="-1.9" cy="724.2" rx="7.0" ry="1.9" fill="#2f3f86" opacity="0.40" transform="rotate(-12 -1.9 724.2)"/><ellipse cx="3.6" cy="925.0" rx="10.9" ry="1.2" fill="#3a2f7a" opacity="0.54" transform="rotate(-8 3.6 925.0)"/><ellipse cx="34.5" cy="751.0" rx="4.6" ry="1.8" fill="#5c78c0" opacity="0.58" transform="rotate(-12 34.5 751.0)"/><ellipse cx="26.9" cy="954.3" rx="6.2" ry="1.1" fill="#5c78c0" opacity="0.62" transform="rotate(-20 26.9 954.3)"/><ellipse cx="21.5" cy="643.0" rx="6.7" ry="1.8" fill="#6f88cc" opacity="0.57" transform="rotate(-17 21.5 643.0)"/><ellipse cx="7.3" cy="825.5" rx="10.3" ry="2.3" fill="#33458e" opacity="0.48" transform="rotate(-18 7.3 825.5)"/><ellipse cx="6.1" cy="708.1" rx="4.6" ry="2.2" fill="#3a2f7a" opacity="0.50" transform="rotate(-22 6.1 708.1)"/><ellipse cx="14.1" cy="805.5" rx="5.0" ry="1.1" fill="#6f88cc" opacity="0.60" transform="rotate(-8 14.1 805.5)"/><ellipse cx="12.9" cy="788.3" rx="4.6" ry="1.5" fill="#6f88cc" opacity="0.48" transform="rotate(-27 12.9 788.3)"/><ellipse cx="-1.2" cy="650.7" rx="10.9" ry="2.3" fill="#3a2f7a" opacity="0.37" transform="rotate(-18 -1.2 650.7)"/><ellipse cx="35.0" cy="729.5" rx="4.7" ry="1.7" fill="#3a2f7a" opacity="0.64" transform="rotate(-16 35.0 729.5)"/><ellipse cx="8.2" cy="652.1" rx="5.4" ry="1.3" fill="#2f3f86" opacity="0.31" transform="rotate(-26 8.2 652.1)"/><ellipse cx="12.8" cy="865.8" rx="7.4" ry="2.3" fill="#3a2f7a" opacity="0.52" transform="rotate(-10 12.8 865.8)"/><ellipse cx="34.9" cy="866.0" rx="4.6" ry="1.5" fill="#2f3f86" opacity="0.63" transform="rotate(-23 34.9 866.0)"/><ellipse cx="24.8" cy="765.8" rx="7.1" ry="1.2" fill="#5c78c0" opacity="0.36" transform="rotate(-9 24.8 765.8)"/><ellipse cx="35.7" cy="941.2" rx="4.4" ry="1.8" fill="#2f3f86" opacity="0.39" transform="rotate(-27 35.7 941.2)"/><ellipse cx="18.5" cy="876.7" rx="9.3" ry="1.7" fill="#6f88cc" opacity="0.56" transform="rotate(-26 18.5 876.7)"/><ellipse cx="35.6" cy="856.6" rx="6.1" ry="1.9" fill="#2f3f86" opacity="0.46" transform="rotate(-13 35.6 856.6)"/><ellipse cx="12.9" cy="764.8" rx="6.6" ry="1.6" fill="#5c78c0" opacity="0.62" transform="rotate(-19 12.9 764.8)"/><ellipse cx="33.7" cy="789.7" rx="10.4" ry="2.2" fill="#5c78c0" opacity="0.33" transform="rotate(-25 33.7 789.7)"/><ellipse cx="22.7" cy="759.4" rx="9.2" ry="2.2" fill="#33458e" opacity="0.59" transform="rotate(-9 22.7 759.4)"/><ellipse cx="23.1" cy="784.7" rx="6.4" ry="2.2" fill="#6f88cc" opacity="0.35" transform="rotate(-18 23.1 784.7)"/><ellipse cx="6.9" cy="658.2" rx="9.0" ry="1.8" fill="#5c78c0" opacity="0.39" transform="rotate(-25 6.9 658.2)"/><ellipse cx="14.5" cy="689.8" rx="5.9" ry="2.3" fill="#5c78c0" opacity="0.39" transform="rotate(-21 14.5 689.8)"/><ellipse cx="2.4" cy="786.0" rx="7.4" ry="1.2" fill="#5c78c0" opacity="0.50" transform="rotate(-18 2.4 786.0)"/><ellipse cx="31.4" cy="678.1" rx="9.3" ry="2.5" fill="#6f88cc" opacity="0.65" transform="rotate(-19 31.4 678.1)"/><ellipse cx="35.0" cy="671.2" rx="6.0" ry="2.3" fill="#6f88cc" opacity="0.35" transform="rotate(-27 35.0 671.2)"/><ellipse cx="23.6" cy="781.5" rx="7.6" ry="1.8" fill="#3a2f7a" opacity="0.40" transform="rotate(-19 23.6 781.5)"/><ellipse cx="12.4" cy="653.0" rx="6.9" ry="1.4" fill="#5c78c0" opacity="0.48" transform="rotate(-24 12.4 653.0)"/><ellipse cx="7.2" cy="696.2" rx="8.2" ry="2.2" fill="#33458e" opacity="0.57" transform="rotate(-10 7.2 696.2)"/><ellipse cx="5.0" cy="683.9" rx="8.7" ry="1.9" fill="#6f88cc" opacity="0.37" transform="rotate(-24 5.0 683.9)"/><ellipse cx="0.6" cy="874.5" rx="6.9" ry="2.1" fill="#6f88cc" opacity="0.42" transform="rotate(-27 0.6 874.5)"/><ellipse cx="31.7" cy="916.6" rx="7.5" ry="1.0" fill="#33458e" opacity="0.35" transform="rotate(-10 31.7 916.6)"/><ellipse cx="24.6" cy="719.5" rx="7.9" ry="2.5" fill="#6f88cc" opacity="0.50" transform="rotate(-27 24.6 719.5)"/><ellipse cx="32.3" cy="754.0" rx="10.5" ry="2.5" fill="#6f88cc" opacity="0.55" transform="rotate(-27 32.3 754.0)"/><ellipse cx="30.7" cy="917.0" rx="6.2" ry="2.1" fill="#2f3f86" opacity="0.40" transform="rotate(-20 30.7 917.0)"/><ellipse cx="2.3" cy="873.9" rx="7.1" ry="1.0" fill="#5c78c0" opacity="0.31" transform="rotate(-12 2.3 873.9)"/><ellipse cx="36.7" cy="711.6" rx="5.3" ry="1.2" fill="#2f3f86" opacity="0.31" transform="rotate(-23 36.7 711.6)"/><ellipse cx="35.1" cy="876.4" rx="5.8" ry="2.3" fill="#33458e" opacity="0.48" transform="rotate(-15 35.1 876.4)"/><ellipse cx="26.1" cy="672.9" rx="10.1" ry="2.1" fill="#2f3f86" opacity="0.46" transform="rotate(-27 26.1 672.9)"/><ellipse cx="21.4" cy="883.7" rx="4.8" ry="1.2" fill="#3a2f7a" opacity="0.51" transform="rotate(-10 21.4 883.7)"/><ellipse cx="32.4" cy="687.1" rx="8.0" ry="2.1" fill="#2f3f86" opacity="0.63" transform="rotate(-25 32.4 687.1)"/><ellipse cx="13.5" cy="774.6" rx="9.9" ry="1.8" fill="#2f3f86" opacity="0.57" transform="rotate(-20 13.5 774.6)"/><ellipse cx="11.5" cy="716.9" rx="6.3" ry="1.7" fill="#6f88cc" opacity="0.59" transform="rotate(-8 11.5 716.9)"/><ellipse cx="31.9" cy="657.1" rx="7.6" ry="2.4" fill="#5c78c0" opacity="0.60" transform="rotate(-9 31.9 657.1)"/><ellipse cx="24.5" cy="643.7" rx="4.8" ry="1.3" fill="#5c78c0" opacity="0.48" transform="rotate(-22 24.5 643.7)"/><ellipse cx="-1.2" cy="684.6" rx="10.8" ry="2.2" fill="#2f3f86" opacity="0.58" transform="rotate(-9 -1.2 684.6)"/><ellipse cx="33.4" cy="923.1" rx="4.2" ry="2.0" fill="#3a2f7a" opacity="0.40" transform="rotate(-23 33.4 923.1)"/><ellipse cx="19.7" cy="935.8" rx="8.3" ry="1.4" fill="#33458e" opacity="0.38" transform="rotate(-18 19.7 935.8)"/><ellipse cx="-0.4" cy="676.2" rx="6.4" ry="1.3" fill="#3a2f7a" opacity="0.62" transform="rotate(-27 -0.4 676.2)"/><ellipse cx="1.4" cy="828.9" rx="10.5" ry="1.7" fill="#6f88cc" opacity="0.62" transform="rotate(-18 1.4 828.9)"/><ellipse cx="21.1" cy="727.7" rx="9.2" ry="2.1" fill="#33458e" opacity="0.51" transform="rotate(-22 21.1 727.7)"/><ellipse cx="20.8" cy="848.1" rx="5.4" ry="2.1" fill="#3a2f7a" opacity="0.41" transform="rotate(-19 20.8 848.1)"/><ellipse cx="17.1" cy="902.0" rx="4.2" ry="1.5" fill="#3a2f7a" opacity="0.43" transform="rotate(-24 17.1 902.0)"/><ellipse cx="21.4" cy="643.8" rx="6.5" ry="2.3" fill="#3a2f7a" opacity="0.41" transform="rotate(-23 21.4 643.8)"/><ellipse cx="8.8" cy="921.1" rx="5.5" ry="1.1" fill="#3a2f7a" opacity="0.32" transform="rotate(-28 8.8 921.1)"/><ellipse cx="32.9" cy="780.8" rx="4.4" ry="1.6" fill="#2f3f86" opacity="0.48" transform="rotate(-19 32.9 780.8)"/><ellipse cx="37.6" cy="856.9" rx="10.5" ry="1.6" fill="#5c78c0" opacity="0.54" transform="rotate(-15 37.6 856.9)"/><ellipse cx="22.7" cy="912.0" rx="9.7" ry="1.8" fill="#33458e" opacity="0.39" transform="rotate(-13 22.7 912.0)"/><ellipse cx="23.2" cy="842.3" rx="8.9" ry="1.6" fill="#33458e" opacity="0.57" transform="rotate(-26 23.2 842.3)"/><ellipse cx="21.4" cy="799.3" rx="10.7" ry="1.9" fill="#6f88cc" opacity="0.61" transform="rotate(-20 21.4 799.3)"/><ellipse cx="22.3" cy="761.5" rx="7.2" ry="1.7" fill="#6f88cc" opacity="0.42" transform="rotate(-14 22.3 761.5)"/><ellipse cx="19.0" cy="830.5" rx="8.5" ry="1.0" fill="#33458e" opacity="0.43" transform="rotate(-13 19.0 830.5)"/><ellipse cx="10.0" cy="811.8" rx="9.6" ry="1.7" fill="#5c78c0" opacity="0.33" transform="rotate(-20 10.0 811.8)"/><ellipse cx="34.8" cy="743.6" rx="9.9" ry="2.3" fill="#5c78c0" opacity="0.64" transform="rotate(-9 34.8 743.6)"/><ellipse cx="33.7" cy="945.9" rx="4.2" ry="1.4" fill="#6f88cc" opacity="0.62" transform="rotate(-10 33.7 945.9)"/><ellipse cx="28.9" cy="812.3" rx="11.0" ry="1.8" fill="#33458e" opacity="0.44" transform="rotate(-18 28.9 812.3)"/><ellipse cx="12.3" cy="830.3" rx="6.5" ry="2.4" fill="#3a2f7a" opacity="0.38" transform="rotate(-14 12.3 830.3)"/><ellipse cx="14.4" cy="800.3" rx="8.5" ry="2.4" fill="#5c78c0" opacity="0.64" transform="rotate(-25 14.4 800.3)"/><ellipse cx="17.5" cy="780.9" rx="8.4" ry="2.5" fill="#3a2f7a" opacity="0.56" transform="rotate(-21 17.5 780.9)"/><ellipse cx="1.7" cy="756.1" rx="6.6" ry="1.1" fill="#5c78c0" opacity="0.34" transform="rotate(-22 1.7 756.1)"/><ellipse cx="33.8" cy="860.8" rx="9.7" ry="2.5" fill="#33458e" opacity="0.52" transform="rotate(-10 33.8 860.8)"/><ellipse cx="19.0" cy="901.2" rx="5.5" ry="2.3" fill="#2f3f86" opacity="0.52" transform="rotate(-20 19.0 901.2)"/><ellipse cx="22.1" cy="753.0" rx="11.0" ry="2.0" fill="#33458e" opacity="0.30" transform="rotate(-27 22.1 753.0)"/><ellipse cx="-1.9" cy="867.4" rx="7.9" ry="2.4" fill="#2f3f86" opacity="0.51" transform="rotate(-20 -1.9 867.4)"/></svg>
<div style="left:38px;top:0px;width:1px;height:1000px;background:#1883d7;"></div>
<div style="left:39px;top:0px;width:1001px;height:25px;background:#ffffff;"></div>
<div style="left:39px;top:25px;width:1001px;height:975px;background:#3c3f41;"></div>
<div style="left:39px;top:51px;width:1001px;height:1px;background:#2b2d2e;"></div>
<div style="left:39px;top:52px;width:1001px;height:1px;background:#515455;"></div>
<div style="left:39px;top:92px;width:1001px;height:1px;background:#2f3133;"></div>
<div style="left:39px;top:123px;width:1001px;height:1px;background:#323537;"></div>
<div style="left:1040px;top:0px;width:1px;height:1000px;background:#1c82da;"></div>
<div style="left:1041px;top:0px;width:3px;height:1000px;background:linear-gradient(180deg,#1e2a52 0,#1e2a52 33%,#6f7390 35%,#7b7d92 38%,#a58e8a 42.5%,#3a58a8 43.5%,#2f52a6 60%,#2a48a2 80%,#2038a0 100%);"></div>
<div style="left:1044px;top:0px;width:883px;height:25px;background:#ffffff;"></div>
<div style="left:1044px;top:25px;width:883px;height:969px;background:#3c3f41;"></div>
<div style="left:1044px;top:51px;width:883px;height:1px;background:#2b2d2e;"></div>
<div style="left:1044px;top:52px;width:883px;height:1px;background:#515455;"></div>
<div style="left:1044px;top:92px;width:883px;height:1px;background:#2f3133;"></div>
<div style="left:1044px;top:123px;width:883px;height:1px;background:#323537;"></div>
<div style="left:1044px;top:0px;width:9px;height:25px;background:linear-gradient(90deg,#d8d8d8,#ffffff);"></div>
<svg style="left:49.50px;top:-3.00px" width="17" height="17" viewBox="0 0 16 16"><circle cx="8" cy="8" r="7.6" fill="#7cb744"/><circle cx="8" cy="4.2" r="1.4" fill="none" stroke="#6b6f66" stroke-width="0.9"/><path d="M8 5.6L3.8 15M8 5.6L12.2 15" stroke="#e9efe2" stroke-width="0.9" fill="none"/><path d="M4.6 9.6a4.6 4.6 0 0 0 6.8 0" stroke="#e9efe2" stroke-width="1.1" fill="none"/></svg>
<div class="t" style="left:73px;top:-3.50px;line-height:20px;font-size:15.5px;color:#000000;white-space:pre;letter-spacing:0.674px;">MyApp [D:\project\AFlutter\MyApp] - ...\app\src\main\java\com\bliss\yang\androidproject\MainActivity.ja...</div>
<svg style="left:885px;top:0" width="16" height="16"><path d="M0 6.5h15" stroke="#222" stroke-width="1.2"/></svg>
<svg style="left:945px;top:0" width="14" height="14"><rect x="0.6" y="0.6" width="11" height="11" fill="none" stroke="#222" stroke-width="1.2"/></svg>
<svg style="left:1003px;top:0" width="14" height="14"><path d="M0 -1l13 13M13 -1l-13 13" stroke="#222" stroke-width="1.2"/></svg>
<svg style="left:1054.50px;top:-3.00px" width="17" height="17" viewBox="0 0 16 16"><circle cx="8" cy="8" r="7.6" fill="#7cb744"/><circle cx="8" cy="4.2" r="1.4" fill="none" stroke="#6b6f66" stroke-width="0.9"/><path d="M8 5.6L3.8 15M8 5.6L12.2 15" stroke="#e9efe2" stroke-width="0.9" fill="none"/><path d="M4.6 9.6a4.6 4.6 0 0 0 6.8 0" stroke="#e9efe2" stroke-width="1.1" fill="none"/></svg>
<div class="t" style="left:1078px;top:-3.50px;line-height:20px;font-size:15.5px;color:#9a9a9a;white-space:pre;letter-spacing:0.605px;">flutter_module [D:\project\AFlutter\flutter_module] - ...\lib\main.dart [flutter_module] - An...</div>
<svg style="left:1772px;top:0" width="16" height="16"><path d="M0 6.5h15" stroke="#8a8a8a" stroke-width="1.2"/></svg>
<svg style="left:1832px;top:0" width="14" height="14"><rect x="0.6" y="0.6" width="11" height="11" fill="none" stroke="#8a8a8a" stroke-width="1.2"/></svg>
<svg style="left:1890px;top:0" width="14" height="14"><path d="M0 -1l13 13M13 -1l-13 13" stroke="#8a8a8a" stroke-width="1.2"/></svg>
<div class="t" style="left:47px;top:28.5px;line-height:20px;font-size:15.5px;color:#bbbbbb;letter-spacing:0.006px"><u>F</u>ile</div>
<div class="t" style="left:88px;top:28.5px;line-height:20px;font-size:15.5px;color:#bbbbbb;letter-spacing:0.323px"><u>E</u>dit</div>
<div class="t" style="left:131px;top:28.5px;line-height:20px;font-size:15.5px;color:#bbbbbb;letter-spacing:0.671px"><u>V</u>iew</div>
<div class="t" style="left:183px;top:28.5px;line-height:20px;font-size:15.5px;color:#bbbbbb;letter-spacing:0.478px"><u>N</u>avigate</div>
<div class="t" style="left:263px;top:28.5px;line-height:20px;font-size:15.5px;color:#bbbbbb;letter-spacing:0.736px"><u>C</u>ode</div>
<div class="t" style="left:318px;top:28.5px;line-height:20px;font-size:15.5px;color:#bbbbbb;letter-spacing:0.122px">Analy<u>z</u>e</div>
<div class="t" style="left:389px;top:28.5px;line-height:20px;font-size:15.5px;color:#bbbbbb;letter-spacing:0.427px"><u>R</u>efactor</div>
<div class="t" style="left:467px;top:28.5px;line-height:20px;font-size:15.5px;color:#bbbbbb;letter-spacing:0.506px"><u>B</u>uild</div>
<div class="t" style="left:519px;top:28.5px;line-height:20px;font-size:15.5px;color:#bbbbbb;letter-spacing:-0.145px">R<u>u</u>n</div>
<div class="t" style="left:562px;top:28.5px;line-height:20px;font-size:15.5px;color:#bbbbbb;letter-spacing:0.963px"><u>T</u>ools</div>
<div class="t" style="left:619px;top:28.5px;line-height:20px;font-size:15.5px;color:#bbbbbb;letter-spacing:-1.291px">VC<u>S</u></div>
<div class="t" style="left:663px;top:28.5px;line-height:20px;font-size:15.5px;color:#bbbbbb;letter-spacing:0.812px"><u>W</u>indow</div>
<div class="t" style="left:738px;top:28.5px;line-height:20px;font-size:15.5px;color:#bbbbbb;letter-spacing:1.030px"><u>H</u>elp</div>
<div class="t" style="left:1052px;top:28.5px;line-height:20px;font-size:15.5px;color:#bbbbbb;letter-spacing:0.006px"><u>F</u>ile</div>
<div class="t" style="left:1093px;top:28.5px;line-height:20px;font-size:15.5px;color:#bbbbbb;letter-spacing:0.323px"><u>E</u>dit</div>
<div class="t" style="left:1136px;top:28.5px;line-height:20px;font-size:15.5px;color:#bbbbbb;letter-spacing:0.671px"><u>V</u>iew</div>
<div class="t" style="left:1188px;top:28.5px;line-height:20px;font-size:15.5px;color:#bbbbbb;letter-spacing:0.478px"><u>N</u>avigate</div>
<div class="t" style="left:1268px;top:28.5px;line-height:20px;font-size:15.5px;color:#bbbbbb;letter-spacing:0.736px"><u>C</u>ode</div>
<div class="t" style="left:1323px;top:28.5px;line-height:20px;font-size:15.5px;color:#bbbbbb;letter-spacing:0.122px">Analy<u>z</u>e</div>
<div class="t" style="left:1394px;top:28.5px;line-height:20px;font-size:15.5px;color:#bbbbbb;letter-spacing:0.427px"><u>R</u>efactor</div>
<div class="t" style="left:1472px;top:28.5px;line-height:20px;font-size:15.5px;color:#bbbbbb;letter-spacing:0.506px"><u>B</u>uild</div>
<div class="t" style="left:1524px;top:28.5px;line-height:20px;font-size:15.5px;color:#bbbbbb;letter-spacing:-0.145px">R<u>u</u>n</div>
<div class="t" style="left:1567px;top:28.5px;line-height:20px;font-size:15.5px;color:#bbbbbb;letter-spacing:0.963px"><u>T</u>ools</div>
<div class="t" style="left:1624px;top:28.5px;line-height:20px;font-size:15.5px;color:#bbbbbb;letter-spacing:-1.291px">VC<u>S</u></div>
<div class="t" style="left:1668px;top:28.5px;line-height:20px;font-size:15.5px;color:#bbbbbb;letter-spacing:0.812px"><u>W</u>indow</div>
<div class="t" style="left:1743px;top:28.5px;line-height:20px;font-size:15.5px;color:#bbbbbb;letter-spacing:1.030px"><u>H</u>elp</div>
<svg style="left:47.00px;top:63.00px" width="20" height="20" viewBox="0 0 16 16"><path d="M1 3h5l1.5 2H13v3H4l-3 5z" fill="#7f8b91"/><path d="M4 8.5h11.5l-3 5.5H1z" fill="#d9a343"/></svg>
<svg style="left:79.00px;top:63.00px" width="20" height="20" viewBox="0 0 16 16"><path d="M2 1.5h12v13H2z" fill="#9aa7b0"/><rect x="4.5" y="1.5" width="7" height="4.5" fill="#3c3f41"/><rect x="5.5" y="2.3" width="5" height="2.6" fill="#e8e8e8"/><rect x="4.5" y="9.5" width="7" height="5" fill="#3c3f41"/><rect x="5.3" y="12.6" width="5.4" height="1.9" fill="#3d8fc0"/></svg>
<svg style="left:110.00px;top:63.00px" width="20" height="20" viewBox="0 0 16 16"><path d="M12.8 6A5.2 5.2 0 1 0 13.4 8.6" fill="none" stroke="#a0b82a" stroke-width="2"/><circle cx="8" cy="8.6" r="2.2" fill="#3db35a"/><path d="M2.5 3.2a7.5 7.5 0 0 1 10.5-0.8" fill="none" stroke="#3d8fc0" stroke-width="1.3"/></svg>
<svg style="left:142.00px;top:63.00px" width="20" height="20" viewBox="0 0 16 16"><rect x="1" y="6.2" width="5" height="3.6" fill="none" stroke="#7f8b91" stroke-width="1.1"/><rect x="10" y="6.2" width="5" height="3.6" fill="none" stroke="#7f8b91" stroke-width="1.1"/><path d="M3 5a5.6 5.6 0 0 1 9.6-1" fill="none" stroke="#3d8fc0" stroke-width="1.5"/><path d="M13.6 1.5v3.6H10z" fill="#3d8fc0"/><path d="M13 11a5.6 5.6 0 0 1-9.6 1" fill="none" stroke="#3d8fc0" stroke-width="1.5"/><path d="M2.4 14.5v-3.6H6z" fill="#3d8fc0"/></svg>
<svg style="left:172px;top:59px" width="1" height="28"><path d="M0.5 0v28" stroke="#7a7d7f" stroke-width="1" stroke-dasharray="1.3 2"/></svg>
<svg style="left:180.00px;top:63.00px" width="20" height="20" viewBox="0 0 16 16"><path d="M8 2.5L1.8 8 8 13.5V10.5h6v-5H8z" fill="#2d6d99" stroke="#4aa0d8" stroke-width="1.3" stroke-linejoin="miter"/></svg>
<svg style="left:212.00px;top:63.00px" width="20" height="20" viewBox="0 0 16 16"><path d="M8 2.5L14.2 8 8 13.5V10.5H2v-5h6z" fill="#4a4d4f" stroke="#6a6d6f" stroke-width="1.3"/></svg>
<svg style="left:242px;top:59px" width="1" height="28"><path d="M0.5 0v28" stroke="#7a7d7f" stroke-width="1" stroke-dasharray="1.3 2"/></svg>
<svg style="left:250.00px;top:63.00px" width="20" height="20" viewBox="0 0 16 16"><path d="M0.4 6.4L10.8 0.6" stroke="#2aa845" stroke-width="3.3" fill="none"/><path d="M6.8 4.2l8.6 9.8" stroke="#2fb34c" stroke-width="2.9" fill="none"/></svg>
<svg style="left:280px;top:59px" width="1" height="28"><path d="M0.5 0v28" stroke="#7a7d7f" stroke-width="1" stroke-dasharray="1.3 2"/></svg>
<div style="left:286px;top:57px;width:115px;height:30px;background:#3c3f41;border:1px solid #5a5d5f;border-radius:4px;box-sizing:border-box;box-shadow:0 1px 0 #2f3133"></div>
<svg style="left:293.00px;top:63.00px" width="20" height="20" viewBox="0 0 16 16"><path d="M1.5 2.5h5l1.2 1.8H14v3H12V6H3.5v6H8v2H1.5z" fill="#d9a343"/><rect x="8" y="7.5" width="8" height="8.5" fill="#3c3f41"/><path d="M8.5 12a3.5 3.2 0 0 1 7 0z" fill="#a4c639"/><rect x="8.5" y="12.3" width="7" height="1.2" fill="#a4c639"/><path d="M9.5 7.8l1 1.4M14.5 7.8l-1 1.4" stroke="#a4c639" stroke-width="0.7"/><circle cx="13.2" cy="13.8" r="2" fill="#2e8b3a"/></svg>
<div class="t" style="left:321px;top:63.50px;line-height:20px;font-size:16px;color:#bbbbbb;white-space:pre;letter-spacing:0.101px;">app</div>
<svg style="left:377.00px;top:65.00px" width="16" height="16" viewBox="0 0 16 16"><path d="M2.5 5h11L8 11.5z" fill="#a7abad"/></svg>
<svg style="left:411.00px;top:63.00px" width="20" height="20" viewBox="0 0 16 16"><path d="M2.2 0.8L14 8 2.2 15.2z" fill="#3fae3f"/><circle cx="13" cy="13.3" r="2.2" fill="#3c3f41"/><circle cx="13" cy="13.3" r="1.5" fill="#2e8b3a"/></svg>
<svg style="left:439.00px;top:63.00px" width="20" height="20" viewBox="0 0 16 16"><path d="M9.5 1L4.5 9h3L6 15l5.5-8.5h-3z" fill="#6a6d6f"/></svg>
<svg style="left:471.00px;top:63.00px" width="20" height="20" viewBox="0 0 16 16"><ellipse cx="7.5" cy="9" rx="4.3" ry="5" fill="#8a8f92"/><path d="M5 3.5a2.6 2.6 0 0 1 5 0z" fill="#8a8f92"/><path d="M1.5 6l2.5 1.5M1 9.5h2.5M1.5 13l2.5-1.5M13.5 6L11 7.5M14 9.5h-2.5M4.5 1.5l1.3 1.8M10.5 1.5L9.2 3.3" stroke="#8a8f92" stroke-width="1.2"/><path d="M8 7.5L15 11.5 8 15.5z" fill="#3c3f41"/><path d="M9 9L14 11.7 9 14.5z" fill="#3fae3f"/></svg>
<svg style="left:503.00px;top:63.00px" width="20" height="20" viewBox="0 0 16 16"><rect x="1.5" y="6" width="2.6" height="8.5" fill="#5d6163"/><rect x="5" y="3" width="2.6" height="11.5" fill="#5d6163"/><path d="M8.5 1v7l2-1.2V1zM8.5 8.5L15 11.5 8.5 14.8z" fill="#5d6163"/></svg>
<svg style="left:534.00px;top:63.00px" width="20" height="20" viewBox="0 0 16 16"><path d="M2 12.5a6.2 6.2 0 0 1 9.5-7.3" fill="none" stroke="#6fb7ee" stroke-width="2.2"/><path d="M13 6.8a6.2 6.2 0 0 1 1 5.7h-2.2a4.4 4.4 0 0 0-0.6-4.3z" fill="#b8bcbf"/><path d="M11.8 5.2L7.5 11.8l-1.6-1z" fill="#b8bcbf"/></svg>
<svg style="left:566.00px;top:63.00px" width="20" height="20" viewBox="0 0 16 16"><rect x="1" y="1" width="8.5" height="8.5" fill="none" stroke="#8a8f92" stroke-width="1.2"/><path d="M3.5 7l3.5-3.5M4.2 3.3H7.2v3" stroke="#b8bcbf" stroke-width="1.1" fill="none"/><ellipse cx="11" cy="11.5" rx="3" ry="3.4" fill="#62b543"/><path d="M7 9l2 1.2M7 14l2-1.2M15 9l-2 1.2M15 14l-2-1.2M7 11.5h1.2M15.5 11.5h-1.3" stroke="#b8bcbf" stroke-width="0.9"/></svg>
<svg style="left:597.00px;top:63.00px" width="20" height="20" viewBox="0 0 16 16"><rect x="2" y="2" width="12" height="12" fill="#d9624d"/></svg>
<svg style="left:627px;top:59px" width="1" height="28"><path d="M0.5 0v28" stroke="#7a7d7f" stroke-width="1" stroke-dasharray="1.3 2"/></svg>
<svg style="left:634.00px;top:63.00px" width="20" height="20" viewBox="0 0 16 16"><rect x="2.4" y="1" width="6.8" height="13" fill="none" stroke="#8a8f92" stroke-width="1.1"/><rect x="3.8" y="2.4" width="4" height="9.6" fill="#b07cc6"/><rect x="6.5" y="9.2" width="9.5" height="6.8" fill="#3c3f41"/><path d="M7.6 14.2a3.5 3.2 0 0 1 7 0z" fill="#a4c639"/><rect x="7.6" y="14.5" width="7" height="1.2" fill="#a4c639"/><path d="M8.6 10.0l1 1.4M13.6 10.0l-1 1.4" stroke="#a4c639" stroke-width="0.7"/></svg>
<svg style="left:666.00px;top:63.00px" width="20" height="20" viewBox="0 0 16 16"><path d="M5.2 0.5h3.6v6h3L7 12 2.2 6.5h3z" fill="#1ea7e8"/><rect x="1.5" y="13.4" width="4.6" height="1.4" fill="#1ea7e8"/><rect x="7" y="9.6" width="9" height="6.4" fill="#3c3f41"/><path d="M8 14.2a3.5 3.2 0 0 1 7 0z" fill="#a4c639"/><rect x="8" y="14.5" width="7" height="1.2" fill="#a4c639"/><path d="M9 10.0l1 1.4M14 10.0l-1 1.4" stroke="#a4c639" stroke-width="0.7"/></svg>
<svg style="left:697px;top:59px" width="1" height="28"><path d="M0.5 0v28" stroke="#7a7d7f" stroke-width="1" stroke-dasharray="1.3 2"/></svg>
<svg style="left:705.00px;top:63.00px" width="20" height="20" viewBox="0 0 16 16"><path d="M1.6 3h4.6l1.2 1.6h5.2V7M1.6 3v9.4H6" fill="none" stroke="#8a9399" stroke-width="1.3"/><rect x="7" y="4.6" width="4.2" height="2" fill="#8a9399" opacity="0"/><rect x="7.2" y="8" width="3.8" height="3.4" fill="#1ea7e8"/><rect x="11.8" y="6" width="3.8" height="3.4" fill="#1ea7e8"/><rect x="7.2" y="12.2" width="3.8" height="3.4" fill="#1ea7e8"/><rect x="11.8" y="12.2" width="3.8" height="3.4" fill="#1ea7e8"/></svg>
<svg style="left:735px;top:59px" width="1" height="28"><path d="M0.5 0v28" stroke="#7a7d7f" stroke-width="1" stroke-dasharray="1.3 2"/></svg>
<svg style="left:743.00px;top:63.00px" width="20" height="20" viewBox="0 0 16 16"><rect x="1.4" y="1.6" width="13.2" height="12.8" rx="1.6" fill="#3c3f41" stroke="#1fa83a" stroke-width="1.5"/><path d="M3 9l1.2-3 1 4 1.2-5.5 1.2 6 1.2-3.5 1.3 2.5 1-2 1.6 1.5" fill="none" stroke="#1fa83a" stroke-width="1.1"/></svg>
<svg style="left:775.00px;top:63.00px" width="20" height="20" viewBox="0 0 16 16"><circle cx="8" cy="8" r="6.3" fill="none" stroke="#2f9be0" stroke-width="1.6"/><path d="M3.6 12.4l8.8-8.8" stroke="#2f9be0" stroke-width="1.6"/></svg>
<svg style="left:983.00px;top:63.00px" width="20" height="20" viewBox="0 0 16 16"><circle cx="6.6" cy="6.6" r="4.4" fill="none" stroke="#a7abad" stroke-width="1.9"/><path d="M10 10l4.6 4.6" stroke="#a7abad" stroke-width="2.4"/></svg>
<svg style="left:1013.50px;top:62.50px" width="21" height="21" viewBox="0 0 16 16"><rect x="0" y="0" width="16" height="16" fill="#c9cccd"/><circle cx="8" cy="5.8" r="3" fill="#fff"/><path d="M2 16a6 6.2 0 0 1 12 0z" fill="#fff"/></svg>
<svg style="left:1052.00px;top:63.00px" width="20" height="20" viewBox="0 0 16 16"><path d="M1 3h5l1.5 2H13v3H4l-3 5z" fill="#7f8b91"/><path d="M4 8.5h11.5l-3 5.5H1z" fill="#d9a343"/></svg>
<svg style="left:1083.00px;top:63.00px" width="20" height="20" viewBox="0 0 16 16"><path d="M2 1.5h12v13H2z" fill="#9aa7b0"/><rect x="4.5" y="1.5" width="7" height="4.5" fill="#3c3f41"/><rect x="5.5" y="2.3" width="5" height="2.6" fill="#e8e8e8"/><rect x="4.5" y="9.5" width="7" height="5" fill="#3c3f41"/><rect x="5.3" y="12.6" width="5.4" height="1.9" fill="#3d8fc0"/></svg>
<svg style="left:1115.00px;top:63.00px" width="20" height="20" viewBox="0 0 16 16"><rect x="1" y="6.2" width="5" height="3.6" fill="none" stroke="#7f8b91" stroke-width="1.1"/><rect x="10" y="6.2" width="5" height="3.6" fill="none" stroke="#7f8b91" stroke-width="1.1"/><path d="M3 5a5.6 5.6 0 0 1 9.6-1" fill="none" stroke="#3d8fc0" stroke-width="1.5"/><path d="M13.6 1.5v3.6H10z" fill="#3d8fc0"/><path d="M13 11a5.6 5.6 0 0 1-9.6 1" fill="none" stroke="#3d8fc0" stroke-width="1.5"/><path d="M2.4 14.5v-3.6H6z" fill="#3d8fc0"/></svg>
<svg style="left:1145px;top:59px" width="1" height="28"><path d="M0.5 0v28" stroke="#7a7d7f" stroke-width="1" stroke-dasharray="1.3 2"/></svg>
<svg style="left:1153.00px;top:63.00px" width="20" height="20" viewBox="0 0 16 16"><path d="M8 2.5L1.8 8 8 13.5V10.5h6v-5H8z" fill="#2d6d99" stroke="#4aa0d8" stroke-width="1.3" stroke-linejoin="miter"/></svg>
<svg style="left:1185.00px;top:63.00px" width="20" height="20" viewBox="0 0 16 16"><path d="M8 2.5L14.2 8 8 13.5V10.5H2v-5h6z" fill="#4a4d4f" stroke="#6a6d6f" stroke-width="1.3"/></svg>
<svg style="left:1214px;top:59px" width="1" height="28"><path d="M0.5 0v28" stroke="#7a7d7f" stroke-width="1" stroke-dasharray="1.3 2"/></svg>
<div style="left:1226px;top:57px;width:127px;height:30px;background:#3c3f41;border:1px solid #5a5d5f;border-radius:4px;box-sizing:border-box;box-shadow:0 1px 0 #2f3133"></div>
<svg style="left:1232.00px;top:63.00px" width="20" height="20" viewBox="0 0 16 16"><rect x="3.6" y="0.8" width="8.8" height="14.4" rx="1.6" fill="none" stroke="#1ea0f2" stroke-width="1.7"/><rect x="6.6" y="12.4" width="2.8" height="1.3" fill="#1ea0f2"/></svg>
<div class="t" style="left:1255px;top:63.50px;line-height:20px;font-size:16px;color:#bbbbbb;white-space:pre;letter-spacing:-0.447px;">CPN W09</div>
<svg style="left:1330.00px;top:65.00px" width="16" height="16" viewBox="0 0 16 16"><path d="M2.5 5h11L8 11.5z" fill="#a7abad"/></svg>
<svg style="left:1362px;top:59px" width="1" height="28"><path d="M0.5 0v28" stroke="#7a7d7f" stroke-width="1" stroke-dasharray="1.3 2"/></svg>
<div style="left:1368px;top:57px;width:90px;height:30px;background:#3c3f41;border:1px solid #5a5d5f;border-radius:4px;box-sizing:border-box;box-shadow:0 1px 0 #2f3133"></div>
<svg style="left:1435.00px;top:65.00px" width="16" height="16" viewBox="0 0 16 16"><path d="M2.5 5h11L8 11.5z" fill="#a7abad"/></svg>
<svg style="left:1467.00px;top:63.00px" width="20" height="20" viewBox="0 0 16 16"><path d="M2.2 0.8L14 8 2.2 15.2z" fill="#5d6163"/></svg>
<svg style="left:1497.00px;top:63.00px" width="20" height="20" viewBox="0 0 16 16"><ellipse cx="7.5" cy="9" rx="4.3" ry="5" fill="#5d6163"/><path d="M5 3.5a2.6 2.6 0 0 1 5 0z" fill="#5d6163"/><path d="M1.5 6l2.5 1.5M1 9.5h2.5M1.5 13l2.5-1.5M13.5 6L11 7.5M14 9.5h-2.5M4.5 1.5l1.3 1.8M10.5 1.5L9.2 3.3" stroke="#5d6163" stroke-width="1.2"/></svg>
<svg style="left:1528.00px;top:63.00px" width="20" height="20" viewBox="0 0 16 16"><rect x="1.5" y="6" width="2.6" height="8.5" fill="#5d6163"/><rect x="5" y="3" width="2.6" height="11.5" fill="#5d6163"/><path d="M8.5 1v7l2-1.2V1zM8.5 8.5L15 11.5 8.5 14.8z" fill="#5d6163"/></svg>
<svg style="left:1560.00px;top:63.00px" width="20" height="20" viewBox="0 0 16 16"><path d="M2 12.5a6.2 6.2 0 0 1 9.5-7.3" fill="none" stroke="#5d6163" stroke-width="2.2"/><path d="M13 6.8a6.2 6.2 0 0 1 1 5.7h-2.2a4.4 4.4 0 0 0-0.6-4.3z" fill="#5d6163"/><path d="M11.8 5.2L7.5 11.8l-1.6-1z" fill="#5d6163"/></svg>
<svg style="left:1591.00px;top:63.00px" width="20" height="20" viewBox="0 0 16 16"><path d="M9.5 1L4.5 9h3L6 15l5.5-8.5h-3z" fill="#5d6163"/></svg>
<svg style="left:1622.00px;top:63.00px" width="20" height="20" viewBox="0 0 16 16"><path d="M3 2h7l2 2v10H3z" fill="none" stroke="#5d6163" stroke-width="1.3"/><path d="M8 11l4-5 1.5 1.2-4 5-2 .8z" fill="#5d6163"/></svg>
<svg style="left:1654.00px;top:63.00px" width="20" height="20" viewBox="0 0 16 16"><rect x="2" y="2" width="12" height="12" fill="#5d6163"/></svg>
<svg style="left:1684px;top:59px" width="1" height="28"><path d="M0.5 0v28" stroke="#7a7d7f" stroke-width="1" stroke-dasharray="1.3 2"/></svg>
<svg style="left:1693.00px;top:63.00px" width="20" height="20" viewBox="0 0 16 16"><rect x="2.4" y="1" width="6.8" height="13" fill="none" stroke="#8a8f92" stroke-width="1.1"/><rect x="3.8" y="2.4" width="4" height="9.6" fill="#b07cc6"/><rect x="6.5" y="9.2" width="9.5" height="6.8" fill="#3c3f41"/><path d="M7.6 14.2a3.5 3.2 0 0 1 7 0z" fill="#a4c639"/><rect x="7.6" y="14.5" width="7" height="1.2" fill="#a4c639"/><path d="M8.6 10.0l1 1.4M13.6 10.0l-1 1.4" stroke="#a4c639" stroke-width="0.7"/></svg>
<svg style="left:1724.00px;top:63.00px" width="20" height="20" viewBox="0 0 16 16"><path d="M5.2 0.5h3.6v6h3L7 12 2.2 6.5h3z" fill="#1ea7e8"/><rect x="1.5" y="13.4" width="4.6" height="1.4" fill="#1ea7e8"/><rect x="7" y="9.6" width="9" height="6.4" fill="#3c3f41"/><path d="M8 14.2a3.5 3.2 0 0 1 7 0z" fill="#a4c639"/><rect x="8" y="14.5" width="7" height="1.2" fill="#a4c639"/><path d="M9 10.0l1 1.4M14 10.0l-1 1.4" stroke="#a4c639" stroke-width="0.7"/></svg>
<svg style="left:1754px;top:59px" width="1" height="28"><path d="M0.5 0v28" stroke="#7a7d7f" stroke-width="1" stroke-dasharray="1.3 2"/></svg>
<svg style="left:1763.00px;top:63.00px" width="20" height="20" viewBox="0 0 16 16"><rect x="1.4" y="1.6" width="13.2" height="12.8" rx="1.6" fill="#3c3f41" stroke="#1fa83a" stroke-width="1.5"/><path d="M3 9l1.2-3 1 4 1.2-5.5 1.2 6 1.2-3.5 1.3 2.5 1-2 1.6 1.5" fill="none" stroke="#1fa83a" stroke-width="1.1"/></svg>
<svg style="left:1794.00px;top:63.00px" width="20" height="20" viewBox="0 0 16 16"><circle cx="8" cy="8" r="6.3" fill="none" stroke="#2f9be0" stroke-width="1.6"/><path d="M3.6 12.4l8.8-8.8" stroke="#2f9be0" stroke-width="1.6"/></svg>
<svg style="left:1870.00px;top:63.00px" width="20" height="20" viewBox="0 0 16 16"><circle cx="6.6" cy="6.6" r="4.4" fill="none" stroke="#a7abad" stroke-width="1.9"/><path d="M10 10l4.6 4.6" stroke="#a7abad" stroke-width="2.4"/></svg>
<svg style="left:1901.50px;top:62.50px" width="21" height="21" viewBox="0 0 16 16"><rect x="0" y="0" width="16" height="16" fill="#c9cccd"/><circle cx="8" cy="5.8" r="3" fill="#fff"/><path d="M2 16a6 6.2 0 0 1 12 0z" fill="#fff"/></svg>
<svg style="left:50.00px;top:98.00px" width="20" height="20" viewBox="0 0 16 16"><path d="M1 2h5.6l1.6 2H15v9.6H1z" fill="#87939a"/><rect x="5" y="9.5" width="11" height="6.5" fill="#3c3f41"/><path d="M6.5 11h7v1.8a3 3 0 0 1-3 3h-1a3 3 0 0 1-3-3z" fill="#40b6e0"/><path d="M13.5 11.6h1.2a1 1 0 0 1 0 2.4h-1.2" fill="none" stroke="#40b6e0" stroke-width="1"/></svg>
<div class="t" style="left:74px;top:99.30px;line-height:20px;font-size:16px;color:#bbbbbb;white-space:pre;font-weight:bold;letter-spacing:0.134px;">MyApp</div>
<svg style="left:126.0px;top:93.0px" width="14" height="31" viewBox="0 0 14 31"><path d="M3 0.5L12.5 15.5 3 30.5" fill="none" stroke="#2e3032" stroke-width="1"/><path d="M1.5 0.5L11 15.5 1.5 30.5" fill="none" stroke="#5a5d60" stroke-width="1"/></svg>
<svg style="left:144.50px;top:98.00px" width="20" height="20" viewBox="0 0 16 16"><path d="M1 2h5.6l1.6 2H15v9.6H1z" fill="#87939a"/><circle cx="12" cy="12.5" r="3.6" fill="#3c3f41"/><circle cx="12" cy="12.5" r="2.4" fill="#62b543"/></svg>
<div class="t" style="left:169px;top:99.30px;line-height:20px;font-size:16px;color:#bbbbbb;white-space:pre;font-weight:bold;letter-spacing:0.185px;">app</div>
<svg style="left:194.5px;top:93.0px" width="14" height="31" viewBox="0 0 14 31"><path d="M3 0.5L12.5 15.5 3 30.5" fill="none" stroke="#2e3032" stroke-width="1"/><path d="M1.5 0.5L11 15.5 1.5 30.5" fill="none" stroke="#5a5d60" stroke-width="1"/></svg>
<svg style="left:214.00px;top:98.00px" width="20" height="20" viewBox="0 0 16 16"><path d="M1 2h5.6l1.6 2H15v9.6H1z" fill="#87939a"/></svg>
<div class="t" style="left:238px;top:99.30px;line-height:20px;font-size:16px;color:#bbbbbb;white-space:pre;letter-spacing:-0.110px;">src</div>
<svg style="left:254.5px;top:93.0px" width="14" height="31" viewBox="0 0 14 31"><path d="M3 0.5L12.5 15.5 3 30.5" fill="none" stroke="#2e3032" stroke-width="1"/><path d="M1.5 0.5L11 15.5 1.5 30.5" fill="none" stroke="#5a5d60" stroke-width="1"/></svg>
<svg style="left:274.00px;top:98.00px" width="20" height="20" viewBox="0 0 16 16"><path d="M1 2h5.6l1.6 2H15v9.6H1z" fill="#87939a"/></svg>
<div class="t" style="left:297px;top:99.30px;line-height:20px;font-size:16px;color:#bbbbbb;white-space:pre;letter-spacing:0.330px;">main</div>
<svg style="left:329.5px;top:93.0px" width="14" height="31" viewBox="0 0 14 31"><path d="M3 0.5L12.5 15.5 3 30.5" fill="none" stroke="#2e3032" stroke-width="1"/><path d="M1.5 0.5L11 15.5 1.5 30.5" fill="none" stroke="#5a5d60" stroke-width="1"/></svg>
<svg style="left:349.00px;top:98.00px" width="20" height="20" viewBox="0 0 16 16"><path d="M1 2h5.6l1.6 2H15v9.6H1z" fill="#3f87a2"/></svg>
<div class="t" style="left:373px;top:99.30px;line-height:20px;font-size:16px;color:#bbbbbb;white-space:pre;letter-spacing:-0.338px;">java</div>
<svg style="left:396.5px;top:93.0px" width="14" height="31" viewBox="0 0 14 31"><path d="M3 0.5L12.5 15.5 3 30.5" fill="none" stroke="#2e3032" stroke-width="1"/><path d="M1.5 0.5L11 15.5 1.5 30.5" fill="none" stroke="#5a5d60" stroke-width="1"/></svg>
<svg style="left:417.00px;top:98.00px" width="20" height="20" viewBox="0 0 16 16"><path d="M1 2h5.6l1.6 2H15v9.6H1z" fill="#87939a"/><circle cx="8" cy="9" r="1.8" fill="#3c3f41"/></svg>
<div class="t" style="left:440px;top:99.30px;line-height:20px;font-size:16px;color:#bbbbbb;white-space:pre;letter-spacing:0.591px;">com</div>
<svg style="left:467.5px;top:93.0px" width="14" height="31" viewBox="0 0 14 31"><path d="M3 0.5L12.5 15.5 3 30.5" fill="none" stroke="#2e3032" stroke-width="1"/><path d="M1.5 0.5L11 15.5 1.5 30.5" fill="none" stroke="#5a5d60" stroke-width="1"/></svg>
<svg style="left:488.00px;top:98.00px" width="20" height="20" viewBox="0 0 16 16"><path d="M1 2h5.6l1.6 2H15v9.6H1z" fill="#87939a"/><circle cx="8" cy="9" r="1.8" fill="#3c3f41"/></svg>
<div class="t" style="left:511px;top:99.30px;line-height:20px;font-size:16px;color:#bbbbbb;white-space:pre;letter-spacing:0.198px;">bliss</div>
<svg style="left:539.5px;top:93.0px" width="14" height="31" viewBox="0 0 14 31"><path d="M3 0.5L12.5 15.5 3 30.5" fill="none" stroke="#2e3032" stroke-width="1"/><path d="M1.5 0.5L11 15.5 1.5 30.5" fill="none" stroke="#5a5d60" stroke-width="1"/></svg>
<svg style="left:558.70px;top:98.00px" width="20" height="20" viewBox="0 0 16 16"><path d="M1 2h5.6l1.6 2H15v9.6H1z" fill="#87939a"/><circle cx="8" cy="9" r="1.8" fill="#3c3f41"/></svg>
<div class="t" style="left:582px;top:99.30px;line-height:20px;font-size:16px;color:#bbbbbb;white-space:pre;letter-spacing:0.076px;">yang</div>
<svg style="left:612.5px;top:93.0px" width="14" height="31" viewBox="0 0 14 31"><path d="M3 0.5L12.5 15.5 3 30.5" fill="none" stroke="#2e3032" stroke-width="1"/><path d="M1.5 0.5L11 15.5 1.5 30.5" fill="none" stroke="#5a5d60" stroke-width="1"/></svg>
<svg style="left:634.00px;top:98.00px" width="20" height="20" viewBox="0 0 16 16"><path d="M1 2h5.6l1.6 2H15v9.6H1z" fill="#87939a"/><circle cx="8" cy="9" r="1.8" fill="#3c3f41"/></svg>
<div class="t" style="left:657px;top:99.30px;line-height:20px;font-size:16px;color:#bbbbbb;white-space:pre;letter-spacing:0.686px;">androidproject</div>
<svg style="left:763.5px;top:93.0px" width="14" height="31" viewBox="0 0 14 31"><path d="M3 0.5L12.5 15.5 3 30.5" fill="none" stroke="#2e3032" stroke-width="1"/><path d="M1.5 0.5L11 15.5 1.5 30.5" fill="none" stroke="#5a5d60" stroke-width="1"/></svg>
<svg style="left:784.00px;top:98.00px" width="20" height="20" viewBox="0 0 16 16"><circle cx="8" cy="8" r="7" fill="#3e95b8"/><text x="8" y="11.4" font-size="9.5" font-weight="bold" fill="#2b3b45" text-anchor="middle" font-family="Liberation Sans, sans-serif">C</text></svg>
<div class="t" style="left:808px;top:99.30px;line-height:20px;font-size:16px;color:#bbbbbb;white-space:pre;letter-spacing:0.471px;">MainActivity</div>
<svg style="left:894.5px;top:93.0px" width="14" height="31" viewBox="0 0 14 31"><path d="M3 0.5L12.5 15.5 3 30.5" fill="none" stroke="#2e3032" stroke-width="1"/><path d="M1.5 0.5L11 15.5 1.5 30.5" fill="none" stroke="#5a5d60" stroke-width="1"/></svg>
<svg style="left:1055.50px;top:98.00px" width="20" height="20" viewBox="0 0 16 16"><path d="M9.5 0.8L2.2 8.1l2.3 2.3L14 0.8z" fill="#54c5f8"/><path d="M9.5 7.3L5.6 11.2l2.3 2.3L14 7.3z" fill="#54c5f8"/><path d="M5.6 11.2l2.3 2.3 1.6 1.7H14l-3.9-3.9z" fill="#01579b"/></svg>
<div class="t" style="left:1079px;top:99.30px;line-height:20px;font-size:16px;color:#bbbbbb;white-space:pre;font-weight:bold;letter-spacing:-0.009px;">flutter_module</div>
<svg style="left:1189.0px;top:93.0px" width="14" height="31" viewBox="0 0 14 31"><path d="M3 0.5L12.5 15.5 3 30.5" fill="none" stroke="#2e3032" stroke-width="1"/><path d="M1.5 0.5L11 15.5 1.5 30.5" fill="none" stroke="#5a5d60" stroke-width="1"/></svg>
<svg style="left:1206.50px;top:98.00px" width="20" height="20" viewBox="0 0 16 16"><path d="M1 2h5.6l1.6 2H15v9.6H1z" fill="#87939a"/><rect x="7" y="10" width="9" height="6" fill="#3c3f41"/><rect x="8" y="11.3" width="2" height="2" fill="#62b543"/><rect x="10.8" y="11.3" width="2" height="2" fill="#40b6e0"/><rect x="13.6" y="11.3" width="2" height="2" fill="#e0713a"/><rect x="7.5" y="14.6" width="8.5" height="1.2" fill="#9aa7b0"/></svg>
<div class="t" style="left:1230px;top:99.30px;line-height:20px;font-size:16px;color:#bbbbbb;white-space:pre;font-weight:bold;letter-spacing:-0.139px;">.android</div>
<svg style="left:1290.0px;top:93.0px" width="14" height="31" viewBox="0 0 14 31"><path d="M3 0.5L12.5 15.5 3 30.5" fill="none" stroke="#2e3032" stroke-width="1"/><path d="M1.5 0.5L11 15.5 1.5 30.5" fill="none" stroke="#5a5d60" stroke-width="1"/></svg>
<svg style="left:1309.00px;top:98.00px" width="20" height="20" viewBox="0 0 16 16"><path d="M1 2h5.6l1.6 2H15v9.6H1z" fill="#87939a"/></svg>
<div class="t" style="left:1333px;top:99.30px;line-height:20px;font-size:16px;color:#bbbbbb;white-space:pre;letter-spacing:0.236px;">Flutter</div>
<svg style="left:1378.0px;top:93.0px" width="14" height="31" viewBox="0 0 14 31"><path d="M3 0.5L12.5 15.5 3 30.5" fill="none" stroke="#2e3032" stroke-width="1"/><path d="M1.5 0.5L11 15.5 1.5 30.5" fill="none" stroke="#5a5d60" stroke-width="1"/></svg>
<svg style="left:1397.00px;top:98.00px" width="20" height="20" viewBox="0 0 16 16"><path d="M1 2h5.6l1.6 2H15v9.6H1z" fill="#87939a"/></svg>
<div class="t" style="left:1420px;top:99.30px;line-height:20px;font-size:16px;color:#bbbbbb;white-space:pre;letter-spacing:-0.110px;">src</div>
<svg style="left:1439.0px;top:93.0px" width="14" height="31" viewBox="0 0 14 31"><path d="M3 0.5L12.5 15.5 3 30.5" fill="none" stroke="#2e3032" stroke-width="1"/><path d="M1.5 0.5L11 15.5 1.5 30.5" fill="none" stroke="#5a5d60" stroke-width="1"/></svg>
<div style="left:39px;top:124px;width:26px;height:107px;background:#2d2f30;"></div>
<div style="left:65px;top:124px;width:1px;height:852px;background:#505254;"></div>
<div class="t" style="left:23.50px;top:158.50px;width:59px;line-height:20px;font-size:14px;color:#d0d0d0;letter-spacing:-0.014px;transform:rotate(-90deg);text-align:left"><u>1</u>: Project</div>
<svg style="left:44.00px;top:201.50px" width="18" height="18" viewBox="0 0 16 16"><circle cx="8" cy="8" r="7.4" fill="#6fae45"/><path d="M8 4L4 14M8 4l4 10" stroke="#eef3ea" stroke-width="1.2"/><path d="M4.8 9.6a4.2 4.2 0 0 0 6.4 0" stroke="#eef3ea" stroke-width="1.2" fill="none"/><circle cx="8" cy="4" r="1.2" fill="#3c3f41"/></svg>
<div class="t" style="left:26.50px;top:266.00px;width:53.0px;line-height:20px;font-size:14px;color:#bbbbbb;letter-spacing:-0.476px;transform:rotate(-90deg);text-align:left">Captures</div>
<svg style="left:44.00px;top:308.00px" width="18" height="18" viewBox="0 0 16 16"><circle cx="8" cy="9" r="5.6" fill="none" stroke="#8a9399" stroke-width="1.5"/><circle cx="8" cy="9" r="3" fill="#3d9be0"/><path d="M6.5 1.5h3M8 1.5v2M3 3.5l1.3 1.3" stroke="#8a9399" stroke-width="1.3"/></svg>
<div class="t" style="left:17.25px;top:627.25px;width:71.5px;line-height:20px;font-size:14px;color:#bbbbbb;letter-spacing:-0.136px;transform:rotate(-90deg);text-align:left"><u>Z</u>: Structure</div>
<svg style="left:44.00px;top:678.00px" width="18" height="18" viewBox="0 0 16 16"><rect x="1.5" y="2" width="5" height="4.5" fill="#e8a33d"/><rect x="9.5" y="2" width="5" height="4.5" fill="#8a9399"/><rect x="1.5" y="9.5" width="5" height="4.5" fill="#8a9399"/><rect x="9.5" y="9.5" width="5" height="4.5" fill="#8a9399"/><path d="M4 6.5v3M12 6.5v3M6.5 4.2h3" stroke="#8a9399" stroke-width="1"/></svg>
<div class="t" style="left:11.50px;top:763.50px;width:83px;line-height:20px;font-size:14px;color:#bbbbbb;letter-spacing:-0.167px;transform:rotate(-90deg);text-align:left">Build Variants</div>
<svg style="left:44.00px;top:819.00px" width="18" height="18" viewBox="0 0 16 16"><path d="M3.5 6a4.5 4.2 0 0 1 9 0z" fill="#84bd3d"/><rect x="3.5" y="6.7" width="9" height="6" rx="0.8" fill="#84bd3d"/><rect x="1.2" y="6.8" width="1.7" height="4.6" rx="0.8" fill="#84bd3d"/><rect x="13.1" y="6.8" width="1.7" height="4.6" rx="0.8" fill="#84bd3d"/><rect x="5.2" y="12" width="1.8" height="3.2" rx="0.8" fill="#84bd3d"/><rect x="9" y="12" width="1.8" height="3.2" rx="0.8" fill="#84bd3d"/><path d="M5 1l1 1.6M11 1l-1 1.6" stroke="#84bd3d" stroke-width="0.8"/></svg>
<div class="t" style="left:18.00px;top:895.00px;width:70px;line-height:20px;font-size:14px;color:#bbbbbb;letter-spacing:-0.262px;transform:rotate(-90deg);text-align:left"><u>2</u>: Favorites</div>
<svg style="left:44.00px;top:944.00px" width="18" height="18" viewBox="0 0 16 16"><path d="M8 0.8l2.2 4.9 5.3.5-4 3.6 1.2 5.2L8 12.3 3.3 15l1.2-5.2-4-3.6 5.3-.5z" fill="#e8a33d"/></svg>
<div style="left:1044px;top:124px;width:26px;height:107px;background:#2d2f30;"></div>
<div style="left:1070px;top:124px;width:1px;height:817px;background:#505254;"></div>
<div class="t" style="left:1028.50px;top:158.50px;width:59px;line-height:20px;font-size:14px;color:#d0d0d0;letter-spacing:-0.014px;transform:rotate(-90deg);text-align:left"><u>1</u>: Project</div>
<svg style="left:1049.00px;top:201.50px" width="18" height="18" viewBox="0 0 16 16"><circle cx="8" cy="8" r="7.4" fill="#6fae45"/><path d="M8 4L4 14M8 4l4 10" stroke="#eef3ea" stroke-width="1.2"/><path d="M4.8 9.6a4.2 4.2 0 0 0 6.4 0" stroke="#eef3ea" stroke-width="1.2" fill="none"/><circle cx="8" cy="4" r="1.2" fill="#3c3f41"/></svg>
<div class="t" style="left:1031.50px;top:266.00px;width:53.0px;line-height:20px;font-size:14px;color:#bbbbbb;letter-spacing:-0.476px;transform:rotate(-90deg);text-align:left">Captures</div>
<svg style="left:1049.00px;top:308.00px" width="18" height="18" viewBox="0 0 16 16"><circle cx="8" cy="9" r="5.6" fill="none" stroke="#8a9399" stroke-width="1.5"/><circle cx="8" cy="9" r="3" fill="#3d9be0"/><path d="M6.5 1.5h3M8 1.5v2M3 3.5l1.3 1.3" stroke="#8a9399" stroke-width="1.3"/></svg>
<div class="t" style="left:1022.25px;top:591.25px;width:71.5px;line-height:20px;font-size:14px;color:#bbbbbb;letter-spacing:-0.136px;transform:rotate(-90deg);text-align:left"><u>Z</u>: Structure</div>
<svg style="left:1049.00px;top:642.00px" width="18" height="18" viewBox="0 0 16 16"><rect x="1.5" y="2" width="5" height="4.5" fill="#e8a33d"/><rect x="9.5" y="2" width="5" height="4.5" fill="#8a9399"/><rect x="1.5" y="9.5" width="5" height="4.5" fill="#8a9399"/><rect x="9.5" y="9.5" width="5" height="4.5" fill="#8a9399"/><path d="M4 6.5v3M12 6.5v3M6.5 4.2h3" stroke="#8a9399" stroke-width="1"/></svg>
<div class="t" style="left:1016.50px;top:727.50px;width:83px;line-height:20px;font-size:14px;color:#bbbbbb;letter-spacing:-0.167px;transform:rotate(-90deg);text-align:left">Build Variants</div>
<svg style="left:1049.00px;top:783.00px" width="18" height="18" viewBox="0 0 16 16"><path d="M3.5 6a4.5 4.2 0 0 1 9 0z" fill="#84bd3d"/><rect x="3.5" y="6.7" width="9" height="6" rx="0.8" fill="#84bd3d"/><rect x="1.2" y="6.8" width="1.7" height="4.6" rx="0.8" fill="#84bd3d"/><rect x="13.1" y="6.8" width="1.7" height="4.6" rx="0.8" fill="#84bd3d"/><rect x="5.2" y="12" width="1.8" height="3.2" rx="0.8" fill="#84bd3d"/><rect x="9" y="12" width="1.8" height="3.2" rx="0.8" fill="#84bd3d"/><path d="M5 1l1 1.6M11 1l-1 1.6" stroke="#84bd3d" stroke-width="0.8"/></svg>
<div class="t" style="left:1023.00px;top:859.00px;width:70px;line-height:20px;font-size:14px;color:#bbbbbb;letter-spacing:-0.262px;transform:rotate(-90deg);text-align:left"><u>2</u>: Favorites</div>
<svg style="left:1049.00px;top:908.00px" width="18" height="18" viewBox="0 0 16 16"><path d="M8 0.8l2.2 4.9 5.3.5-4 3.6 1.2 5.2L8 12.3 3.3 15l1.2-5.2-4-3.6 5.3-.5z" fill="#e8a33d"/></svg>
<div style="left:1013px;top:124px;width:1px;height:851px;background:#4d5052;"></div>
<div style="left:1014px;top:124px;width:26px;height:851px;background:#3c3f41;"></div>
<svg style="left:1017.50px;top:139.50px" width="15" height="15" viewBox="0 0 16 16"><path d="M9.5 0.8L2.2 8.1l2.3 2.3L14 0.8z" fill="#54c5f8"/><path d="M9.5 7.3L5.6 11.2l2.3 2.3L14 7.3z" fill="#54c5f8"/><path d="M5.6 11.2l2.3 2.3 1.6 1.7H14l-3.9-3.9z" fill="#01579b"/></svg>
<div class="t" style="left:982.50px;top:194.50px;width:85px;line-height:20px;font-size:14px;color:#bbbbbb;letter-spacing:-0.195px;transform:rotate(90deg);text-align:left">Flutter Outline</div>
<svg style="left:1017.50px;top:285.50px" width="15" height="15" viewBox="0 0 16 16"><path d="M9.5 0.8L2.2 8.1l2.3 2.3L14 0.8z" fill="#54c5f8"/><path d="M9.5 7.3L5.6 11.2l2.3 2.3L14 7.3z" fill="#54c5f8"/><path d="M5.6 11.2l2.3 2.3 1.6 1.7H14l-3.9-3.9z" fill="#01579b"/></svg>
<div class="t" style="left:975.00px;top:350.00px;width:100px;line-height:20px;font-size:14px;color:#bbbbbb;letter-spacing:-0.068px;transform:rotate(90deg);text-align:left">Flutter Inspector</div>
<svg style="left:1016.50px;top:444.50px" width="17" height="17" viewBox="0 0 16 16"><path d="M13.6 5.2A6.3 6.3 0 1 0 14.3 8" fill="none" stroke="#62b543" stroke-width="2.1"/><circle cx="8" cy="8" r="2.5" fill="#62b543"/></svg>
<div class="t" style="left:1005.50px;top:475.50px;width:39px;line-height:20px;font-size:14px;color:#bbbbbb;letter-spacing:-0.504px;transform:rotate(90deg);text-align:left">Gradle</div>
<svg style="left:1016.50px;top:804.50px" width="17" height="17" viewBox="0 0 16 16"><rect x="3.5" y="1" width="9" height="14" rx="1.5" fill="none" stroke="#b4b8ba" stroke-width="1.7"/><rect x="6.3" y="12" width="3.4" height="1.2" fill="#b4b8ba"/></svg>
<div class="t" style="left:966.50px;top:876.50px;width:117px;line-height:20px;font-size:14px;color:#bbbbbb;letter-spacing:-0.413px;transform:rotate(90deg);text-align:left">Device File Explorer</div>
<div style="left:1900px;top:124px;width:1px;height:816px;background:#4d5052;"></div>
<div style="left:1901px;top:124px;width:26px;height:816px;background:#3c3f41;"></div>
<svg style="left:1905.50px;top:139.50px" width="15" height="15" viewBox="0 0 16 16"><path d="M9.5 0.8L2.2 8.1l2.3 2.3L14 0.8z" fill="#54c5f8"/><path d="M9.5 7.3L5.6 11.2l2.3 2.3L14 7.3z" fill="#54c5f8"/><path d="M5.6 11.2l2.3 2.3 1.6 1.7H14l-3.9-3.9z" fill="#01579b"/></svg>
<div class="t" style="left:1870.50px;top:194.50px;width:85px;line-height:20px;font-size:14px;color:#bbbbbb;letter-spacing:-0.195px;transform:rotate(90deg);text-align:left">Flutter Outline</div>
<svg style="left:1905.50px;top:285.50px" width="15" height="15" viewBox="0 0 16 16"><path d="M9.5 0.8L2.2 8.1l2.3 2.3L14 0.8z" fill="#54c5f8"/><path d="M9.5 7.3L5.6 11.2l2.3 2.3L14 7.3z" fill="#54c5f8"/><path d="M5.6 11.2l2.3 2.3 1.6 1.7H14l-3.9-3.9z" fill="#01579b"/></svg>
<div class="t" style="left:1863.00px;top:350.00px;width:100px;line-height:20px;font-size:14px;color:#bbbbbb;letter-spacing:-0.068px;transform:rotate(90deg);text-align:left">Flutter Inspector</div>
<svg style="left:1904.50px;top:769.50px" width="17" height="17" viewBox="0 0 16 16"><rect x="3.5" y="1" width="9" height="14" rx="1.5" fill="none" stroke="#b4b8ba" stroke-width="1.7"/><rect x="6.3" y="12" width="3.4" height="1.2" fill="#b4b8ba"/></svg>
<div class="t" style="left:1855.00px;top:840.00px;width:116px;line-height:20px;font-size:14px;color:#bbbbbb;letter-spacing:-0.463px;transform:rotate(90deg);text-align:left">Device File Explorer</div>
<svg style="left:77.00px;top:129.00px" width="20" height="20" viewBox="0 0 16 16"><rect x="5.5" y="1.5" width="9.5" height="7.5" fill="#3c3f41" stroke="#3d8fc0" stroke-width="1.3"/><rect x="5.5" y="1.5" width="9.5" height="2.2" fill="#3d8fc0"/><path d="M4.5 4.5H1.5v10H10v-4" fill="none" stroke="#9aa7b0" stroke-width="1.3"/><rect x="3" y="7" width="4.5" height="5.5" fill="#9aa7b0"/></svg>
<div class="t" style="left:103px;top:129.00px;line-height:20px;font-size:16px;color:#bbbbbb;white-space:pre;letter-spacing:0.314px;">Project</div>
<svg style="left:164.00px;top:132.00px" width="13" height="13" viewBox="0 0 16 16"><path d="M2.5 5h11L8 11.5z" fill="#9a9da0"/></svg>
<svg style="left:223.50px;top:129.50px" width="19" height="19" viewBox="0 0 16 16"><circle cx="8" cy="8" r="5.8" fill="none" stroke="#9a9da0" stroke-width="1.4"/><path d="M8 1v4.5M8 10.5V15M1 8h4.5M10.5 8H15" stroke="#9a9da0" stroke-width="1.3"/></svg>
<svg style="left:250.50px;top:129.50px" width="19" height="19" viewBox="0 0 16 16"><path d="M2 8h12" stroke="#9a9da0" stroke-width="1.3"/><path d="M8 1v4.6M5.6 3.6L8 6l2.4-2.4M8 15v-4.6M5.6 12.4L8 10l2.4 2.4" stroke="#9a9da0" stroke-width="1.2" fill="none"/></svg>
<div style="left:278px;top:128px;width:1px;height:24px;background:#555859;"></div>
<svg style="left:287.00px;top:129.50px" width="19" height="19" viewBox="0 0 16 16"><rect x="6.9" y="0.8" width="2.2" height="3.4" fill="#9a9da0" transform="rotate(0 8 8)"/><rect x="6.9" y="0.8" width="2.2" height="3.4" fill="#9a9da0" transform="rotate(45 8 8)"/><rect x="6.9" y="0.8" width="2.2" height="3.4" fill="#9a9da0" transform="rotate(90 8 8)"/><rect x="6.9" y="0.8" width="2.2" height="3.4" fill="#9a9da0" transform="rotate(135 8 8)"/><rect x="6.9" y="0.8" width="2.2" height="3.4" fill="#9a9da0" transform="rotate(180 8 8)"/><rect x="6.9" y="0.8" width="2.2" height="3.4" fill="#9a9da0" transform="rotate(225 8 8)"/><rect x="6.9" y="0.8" width="2.2" height="3.4" fill="#9a9da0" transform="rotate(270 8 8)"/><rect x="6.9" y="0.8" width="2.2" height="3.4" fill="#9a9da0" transform="rotate(315 8 8)"/><circle cx="8" cy="8" r="4.6" fill="#9a9da0"/><circle cx="8" cy="8" r="1.9" fill="#3c3f41"/></svg>
<svg style="left:303.00px;top:134.00px" width="8" height="8" viewBox="0 0 16 16"><path d="M2.5 5h11L8 11.5z" fill="#9a9da0"/></svg>
<svg style="left:321.50px;top:129.50px" width="19" height="19" viewBox="0 0 16 16"><rect x="2" y="1.5" width="2.2" height="13" fill="none" stroke="#9a9da0" stroke-width="1"/><path d="M15 6.5H7.5M10 4L7.5 6.5 10 9" stroke="#9a9da0" stroke-width="1.2" fill="none"/></svg>
<svg style="left:1082.00px;top:129.00px" width="20" height="20" viewBox="0 0 16 16"><rect x="5.5" y="1.5" width="9.5" height="7.5" fill="#3c3f41" stroke="#3d8fc0" stroke-width="1.3"/><rect x="5.5" y="1.5" width="9.5" height="2.2" fill="#3d8fc0"/><path d="M4.5 4.5H1.5v10H10v-4" fill="none" stroke="#9aa7b0" stroke-width="1.3"/><rect x="3" y="7" width="4.5" height="5.5" fill="#9aa7b0"/></svg>
<div class="t" style="left:1108px;top:129.00px;line-height:20px;font-size:16px;color:#bbbbbb;white-space:pre;letter-spacing:0.314px;">Project</div>
<svg style="left:1169.00px;top:132.00px" width="13" height="13" viewBox="0 0 16 16"><path d="M2.5 5h11L8 11.5z" fill="#9a9da0"/></svg>
<svg style="left:1233.00px;top:129.50px" width="19" height="19" viewBox="0 0 16 16"><circle cx="8" cy="8" r="5.8" fill="none" stroke="#9a9da0" stroke-width="1.4"/><path d="M8 1v4.5M8 10.5V15M1 8h4.5M10.5 8H15" stroke="#9a9da0" stroke-width="1.3"/></svg>
<svg style="left:1260.00px;top:129.50px" width="19" height="19" viewBox="0 0 16 16"><path d="M2 8h12" stroke="#9a9da0" stroke-width="1.3"/><path d="M8 1v4.6M5.6 3.6L8 6l2.4-2.4M8 15v-4.6M5.6 12.4L8 10l2.4 2.4" stroke="#9a9da0" stroke-width="1.2" fill="none"/></svg>
<div style="left:1287.5px;top:128px;width:1px;height:24px;background:#555859;"></div>
<svg style="left:1296.50px;top:129.50px" width="19" height="19" viewBox="0 0 16 16"><rect x="6.9" y="0.8" width="2.2" height="3.4" fill="#9a9da0" transform="rotate(0 8 8)"/><rect x="6.9" y="0.8" width="2.2" height="3.4" fill="#9a9da0" transform="rotate(45 8 8)"/><rect x="6.9" y="0.8" width="2.2" height="3.4" fill="#9a9da0" transform="rotate(90 8 8)"/><rect x="6.9" y="0.8" width="2.2" height="3.4" fill="#9a9da0" transform="rotate(135 8 8)"/><rect x="6.9" y="0.8" width="2.2" height="3.4" fill="#9a9da0" transform="rotate(180 8 8)"/><rect x="6.9" y="0.8" width="2.2" height="3.4" fill="#9a9da0" transform="rotate(225 8 8)"/><rect x="6.9" y="0.8" width="2.2" height="3.4" fill="#9a9da0" transform="rotate(270 8 8)"/><rect x="6.9" y="0.8" width="2.2" height="3.4" fill="#9a9da0" transform="rotate(315 8 8)"/><circle cx="8" cy="8" r="4.6" fill="#9a9da0"/><circle cx="8" cy="8" r="1.9" fill="#3c3f41"/></svg>
<svg style="left:1312.50px;top:134.00px" width="8" height="8" viewBox="0 0 16 16"><path d="M2.5 5h11L8 11.5z" fill="#9a9da0"/></svg>
<svg style="left:1331.00px;top:129.50px" width="19" height="19" viewBox="0 0 16 16"><rect x="2" y="1.5" width="2.2" height="13" fill="none" stroke="#9a9da0" stroke-width="1"/><path d="M15 6.5H7.5M10 4L7.5 6.5 10 9" stroke="#9a9da0" stroke-width="1.2" fill="none"/></svg>
<div class="clip" style="left:66px;top:155px;width:283px;height:820px">
<div style="left:0px;top:53.5px;width:283px;height:26.5px;background:#4a453b;"></div>
<div style="left:0px;top:106.0px;width:283px;height:26.5px;background:#0d293e;"></div>
<svg style="left:1.00px;top:5.00px" width="18" height="18" viewBox="0 0 16 16"><path d="M3 2L12.5 8 3 14z" fill="#a4a7a9"/></svg>
<svg style="left:26.00px;top:4.00px" width="20" height="20" viewBox="0 0 16 16"><path d="M1 2h5.6l1.6 2H15v9.6H1z" fill="#87939a"/><rect x="6" y="6" width="10" height="10" fill="#3c3f41"/><rect x="7" y="10" width="2" height="6" fill="#9aa7b0"/><rect x="10" y="7.5" width="2" height="8.5" fill="#62b543"/><rect x="13" y="9" width="2" height="7" fill="#40b6e0"/></svg>
<div class="t" style="left:49.2px;top:5.20px;line-height:20px;font-size:15.5px;color:#bbbbbb;white-space:pre;letter-spacing:0.439px;">Flutter</div>
<div class="t" style="left:108.2px;top:5.20px;line-height:20px;font-size:15.5px;color:#8a8d8f;white-space:pre;letter-spacing:0.872px;">D:\project\AFlutter\flutt</div>
<svg style="left:2.00px;top:32.25px" width="16" height="16" viewBox="0 0 16 16"><path d="M1.5 3h13L8 13.5z" fill="#aaadb0"/></svg>
<svg style="left:26.00px;top:30.25px" width="20" height="20" viewBox="0 0 16 16"><path d="M1 2h5.6l1.6 2H15v9.6H1z" fill="#87939a"/><rect x="5" y="9.5" width="11" height="6.5" fill="#3c3f41"/><path d="M6.5 11h7v1.8a3 3 0 0 1-3 3h-1a3 3 0 0 1-3-3z" fill="#40b6e0"/><path d="M13.5 11.6h1.2a1 1 0 0 1 0 2.4h-1.2" fill="none" stroke="#40b6e0" stroke-width="1"/></svg>
<div class="t" style="left:49.2px;top:31.45px;line-height:20px;font-size:15.5px;color:#bbbbbb;white-space:pre;letter-spacing:0.951px;">MyApp</div>
<div class="t" style="left:114.2px;top:31.45px;line-height:20px;font-size:15.5px;color:#8a8d8f;white-space:pre;letter-spacing:0.915px;">D:\project\AFlutter\My</div>
<svg style="left:23.50px;top:57.50px" width="18" height="18" viewBox="0 0 16 16"><path d="M3 2L12.5 8 3 14z" fill="#a4a7a9"/></svg>
<svg style="left:48.50px;top:56.50px" width="20" height="20" viewBox="0 0 16 16"><path d="M1 2h5.6l1.6 2H15v9.6H1z" fill="#c2602a"/></svg>
<div class="t" style="left:71.7px;top:57.70px;line-height:20px;font-size:15.5px;color:#bbbbbb;white-space:pre;letter-spacing:0.515px;">.gradle</div>
<svg style="left:23.50px;top:83.75px" width="18" height="18" viewBox="0 0 16 16"><path d="M3 2L12.5 8 3 14z" fill="#a4a7a9"/></svg>
<svg style="left:48.50px;top:82.75px" width="20" height="20" viewBox="0 0 16 16"><path d="M1 2h5.6l1.6 2H15v9.6H1z" fill="#87939a"/></svg>
<div class="t" style="left:71.7px;top:83.95px;line-height:20px;font-size:15.5px;color:#bbbbbb;white-space:pre;letter-spacing:0.278px;">.idea</div>
<svg style="left:24.50px;top:111.00px" width="16" height="16" viewBox="0 0 16 16"><path d="M1.5 3h13L8 13.5z" fill="#aaadb0"/></svg>
<svg style="left:48.50px;top:109.00px" width="20" height="20" viewBox="0 0 16 16"><path d="M1 2h5.6l1.6 2H15v9.6H1z" fill="#87939a"/><circle cx="12" cy="12.5" r="3.6" fill="#3c3f41"/><circle cx="12" cy="12.5" r="2.4" fill="#62b543"/></svg>
<div class="t" style="left:71.7px;top:110.20px;line-height:20px;font-size:15.5px;color:#bbbbbb;white-space:pre;letter-spacing:0.713px;">app</div>
<svg style="left:46.00px;top:136.25px" width="18" height="18" viewBox="0 0 16 16"><path d="M3 2L12.5 8 3 14z" fill="#a4a7a9"/></svg>
<svg style="left:71.00px;top:135.25px" width="20" height="20" viewBox="0 0 16 16"><path d="M1 2h5.6l1.6 2H15v9.6H1z" fill="#87939a"/></svg>
<div class="t" style="left:94.2px;top:136.45px;line-height:20px;font-size:15.5px;color:#bbbbbb;white-space:pre;letter-spacing:0.850px;">build</div>
<svg style="left:71.00px;top:161.50px" width="20" height="20" viewBox="0 0 16 16"><path d="M1 2h5.6l1.6 2H15v9.6H1z" fill="#87939a"/></svg>
<div class="t" style="left:94.2px;top:162.70px;line-height:20px;font-size:15.5px;color:#bbbbbb;white-space:pre;letter-spacing:0.435px;">libs</div>
<svg style="left:47.00px;top:189.75px" width="16" height="16" viewBox="0 0 16 16"><path d="M1.5 3h13L8 13.5z" fill="#aaadb0"/></svg>
<svg style="left:71.00px;top:187.75px" width="20" height="20" viewBox="0 0 16 16"><path d="M1 2h5.6l1.6 2H15v9.6H1z" fill="#87939a"/></svg>
<div class="t" style="left:94.2px;top:188.95px;line-height:20px;font-size:15.5px;color:#bbbbbb;white-space:pre;letter-spacing:0.113px;">src</div>
<svg style="left:68.50px;top:215.00px" width="18" height="18" viewBox="0 0 16 16"><path d="M3 2L12.5 8 3 14z" fill="#a4a7a9"/></svg>
<svg style="left:93.50px;top:214.00px" width="20" height="20" viewBox="0 0 16 16"><path d="M1 2h5.6l1.6 2H15v9.6H1z" fill="#87939a"/></svg>
<div class="t" style="left:116.7px;top:215.20px;line-height:20px;font-size:15.5px;color:#bbbbbb;white-space:pre;letter-spacing:0.715px;">androidTest</div>
<svg style="left:69.50px;top:242.25px" width="16" height="16" viewBox="0 0 16 16"><path d="M1.5 3h13L8 13.5z" fill="#aaadb0"/></svg>
<svg style="left:93.50px;top:240.25px" width="20" height="20" viewBox="0 0 16 16"><path d="M1 2h5.6l1.6 2H15v9.6H1z" fill="#87939a"/></svg>
<div class="t" style="left:116.7px;top:241.45px;line-height:20px;font-size:15.5px;color:#bbbbbb;white-space:pre;letter-spacing:0.351px;">main</div>
<svg style="left:91.00px;top:267.50px" width="18" height="18" viewBox="0 0 16 16"><path d="M3 2L12.5 8 3 14z" fill="#a4a7a9"/></svg>
<svg style="left:116.00px;top:266.50px" width="20" height="20" viewBox="0 0 16 16"><path d="M1 2h5.6l1.6 2H15v9.6H1z" fill="#3f87a2"/></svg>
<div class="t" style="left:139.2px;top:267.70px;line-height:20px;font-size:15.5px;color:#bbbbbb;white-space:pre;letter-spacing:-0.109px;">java</div>
<svg style="left:91.00px;top:293.75px" width="18" height="18" viewBox="0 0 16 16"><path d="M3 2L12.5 8 3 14z" fill="#a4a7a9"/></svg>
<svg style="left:116.00px;top:292.75px" width="20" height="20" viewBox="0 0 16 16"><path d="M1 2h5.6l1.6 2H15v9.6H1z" fill="#87939a"/><rect x="9" y="8.5" width="7" height="7.5" fill="#3c3f41"/><path d="M10 10h6M10 12h6M10 14h6M10 16h6" stroke="#e8a33d" stroke-width="1"/></svg>
<div class="t" style="left:139.2px;top:293.95px;line-height:20px;font-size:15.5px;color:#bbbbbb;white-space:pre;letter-spacing:0.156px;">res</div>
<svg style="left:116.00px;top:319.00px" width="20" height="20" viewBox="0 0 16 16"><path d="M7 0.5H13v15H3V4.5z" fill="none" stroke="#9aa7b0" stroke-width="1"/><rect x="1" y="5" width="13" height="7" fill="#f4a93c"/><path d="M6 6.3l-2.3 2.2L6 10.7M9.5 6.3l2.3 2.2-2.3 2.2" fill="none" stroke="#2b2b2b" stroke-width="1.1"/><path d="M8 15.8a4 3.6 0 0 1 8 0z" fill="#84bd3d"/></svg>
<div class="t" style="left:139.2px;top:320.20px;line-height:20px;font-size:15.5px;color:#bbbbbb;white-space:pre;letter-spacing:0.504px;">AndroidManifest.xml</div>
<svg style="left:68.50px;top:346.25px" width="18" height="18" viewBox="0 0 16 16"><path d="M3 2L12.5 8 3 14z" fill="#a4a7a9"/></svg>
<svg style="left:93.50px;top:345.25px" width="20" height="20" viewBox="0 0 16 16"><path d="M1 2h5.6l1.6 2H15v9.6H1z" fill="#87939a"/></svg>
<div class="t" style="left:116.7px;top:346.45px;line-height:20px;font-size:15.5px;color:#bbbbbb;white-space:pre;letter-spacing:0.754px;">test</div>
<svg style="left:71.00px;top:371.50px" width="20" height="20" viewBox="0 0 16 16"><path d="M7.8 0.8H13v14.4H3.2V5.8h4.6z" fill="#9aa7b0"/><path d="M6.8 0.8v4H3.2z" fill="#9aa7b0"/><path d="M4.8 8.4h6.6M4.8 10.6h6.6M4.8 12.8h4.6" stroke="#3c3f41" stroke-width="1.1"/></svg>
<div class="t" style="left:94.2px;top:372.70px;line-height:20px;font-size:15.5px;color:#bbbbbb;white-space:pre;letter-spacing:0.823px;">.gitignore</div>
<svg style="left:71.00px;top:397.75px" width="20" height="20" viewBox="0 0 16 16"><path d="M1 2h5.6l1.6 2H15v9.6H1z" fill="#87939a"/><circle cx="12" cy="12.5" r="3.6" fill="#3c3f41"/><circle cx="12" cy="12.5" r="2.4" fill="#62b543"/></svg>
<div class="t" style="left:94.2px;top:398.95px;line-height:20px;font-size:15.5px;color:#bbbbbb;white-space:pre;letter-spacing:0.576px;">app.iml</div>
<svg style="left:71.00px;top:424.00px" width="20" height="20" viewBox="0 0 16 16"><path d="M13.53 10.58A6.1 6.1 0 1 1 9.58 2.11" fill="none" stroke="#9ccf6a" stroke-width="2.2"/><path d="M9.58 2.11A6.1 6.1 0 0 1 13.89 6.42" fill="none" stroke="#1fa85f" stroke-width="2.2"/><circle cx="8" cy="8" r="3.2" fill="#1a9f5b"/></svg>
<div class="t" style="left:94.2px;top:425.20px;line-height:20px;font-size:15.5px;color:#bbbbbb;white-space:pre;letter-spacing:0.655px;">build.gradle</div>
<svg style="left:71.00px;top:450.25px" width="20" height="20" viewBox="0 0 16 16"><path d="M7.8 0.8H13v14.4H3.2V5.8h4.6z" fill="#9aa7b0"/><path d="M6.8 0.8v4H3.2z" fill="#9aa7b0"/><path d="M4.8 8.4h6.6M4.8 10.6h6.6M4.8 12.8h4.6" stroke="#3c3f41" stroke-width="1.1"/></svg>
<div class="t" style="left:94.2px;top:451.45px;line-height:20px;font-size:15.5px;color:#bbbbbb;white-space:pre;letter-spacing:0.693px;">proguard-rules.pro</div>
<svg style="left:23.50px;top:477.50px" width="18" height="18" viewBox="0 0 16 16"><path d="M3 2L12.5 8 3 14z" fill="#a4a7a9"/></svg>
<svg style="left:48.50px;top:476.50px" width="20" height="20" viewBox="0 0 16 16"><path d="M1 2h5.6l1.6 2H15v9.6H1z" fill="#87939a"/></svg>
<div class="t" style="left:71.7px;top:477.70px;line-height:20px;font-size:15.5px;color:#bbbbbb;white-space:pre;letter-spacing:0.652px;">gradle</div>
<svg style="left:48.50px;top:502.75px" width="20" height="20" viewBox="0 0 16 16"><path d="M7.8 0.8H13v14.4H3.2V5.8h4.6z" fill="#9aa7b0"/><path d="M6.8 0.8v4H3.2z" fill="#9aa7b0"/><path d="M4.8 8.4h6.6M4.8 10.6h6.6M4.8 12.8h4.6" stroke="#3c3f41" stroke-width="1.1"/></svg>
<div class="t" style="left:71.7px;top:503.95px;line-height:20px;font-size:15.5px;color:#bbbbbb;white-space:pre;letter-spacing:0.823px;">.gitignore</div>
<svg style="left:48.50px;top:529.00px" width="20" height="20" viewBox="0 0 16 16"><path d="M13.53 10.58A6.1 6.1 0 1 1 9.58 2.11" fill="none" stroke="#9ccf6a" stroke-width="2.2"/><path d="M9.58 2.11A6.1 6.1 0 0 1 13.89 6.42" fill="none" stroke="#1fa85f" stroke-width="2.2"/><circle cx="8" cy="8" r="3.2" fill="#1a9f5b"/></svg>
<div class="t" style="left:71.7px;top:530.20px;line-height:20px;font-size:15.5px;color:#bbbbbb;white-space:pre;letter-spacing:0.655px;">build.gradle</div>
<svg style="left:48.50px;top:555.25px" width="20" height="20" viewBox="0 0 16 16"><path d="M7.8 0.8H13v14.4H3.2V5.8h4.6z" fill="#9aa7b0"/><path d="M6.8 0.8v4H3.2z" fill="#9aa7b0"/><rect x="5.5" y="7.5" width="10.5" height="8.5" fill="#3c3f41"/><rect x="6.5" y="11" width="2.2" height="5" fill="#e8622c"/><rect x="9.6" y="9.5" width="2.2" height="6.5" fill="#f2a93b"/><rect x="12.7" y="8" width="2.2" height="8" fill="#62b543"/></svg>
<div class="t" style="left:71.7px;top:556.45px;line-height:20px;font-size:15.5px;color:#bbbbbb;white-space:pre;letter-spacing:0.687px;">gradle.properties</div>
<svg style="left:48.50px;top:581.50px" width="20" height="20" viewBox="0 0 16 16"><path d="M7.8 0.8H13v14.4H3.2V5.8h4.6z" fill="#9aa7b0"/><path d="M6.8 0.8v4H3.2z" fill="#9aa7b0"/><path d="M4.8 8.4h6.6M4.8 10.6h6.6M4.8 12.8h4.6" stroke="#3c3f41" stroke-width="1.1"/></svg>
<div class="t" style="left:71.7px;top:582.70px;line-height:20px;font-size:15.5px;color:#bbbbbb;white-space:pre;letter-spacing:0.674px;">gradlew</div>
<svg style="left:48.50px;top:607.75px" width="20" height="20" viewBox="0 0 16 16"><path d="M7.8 0.8H13v14.4H3.2V5.8h4.6z" fill="#9aa7b0"/><path d="M6.8 0.8v4H3.2z" fill="#9aa7b0"/><path d="M4.8 8.4h6.6M4.8 10.6h6.6M4.8 12.8h4.6" stroke="#3c3f41" stroke-width="1.1"/></svg>
<div class="t" style="left:71.7px;top:608.95px;line-height:20px;font-size:15.5px;color:#bbbbbb;white-space:pre;letter-spacing:0.702px;">gradlew.bat</div>
<svg style="left:48.50px;top:634.00px" width="20" height="20" viewBox="0 0 16 16"><path d="M7.8 0.8H13v14.4H3.2V5.8h4.6z" fill="#9aa7b0"/><path d="M6.8 0.8v4H3.2z" fill="#9aa7b0"/><rect x="5.5" y="7.5" width="10.5" height="8.5" fill="#3c3f41"/><rect x="6.5" y="11" width="2.2" height="5" fill="#e8622c"/><rect x="9.6" y="9.5" width="2.2" height="6.5" fill="#f2a93b"/><rect x="12.7" y="8" width="2.2" height="8" fill="#62b543"/></svg>
<div class="t" style="left:71.7px;top:635.20px;line-height:20px;font-size:15.5px;color:#bbbbbb;white-space:pre;letter-spacing:0.618px;">local.properties</div>
<svg style="left:48.50px;top:660.25px" width="20" height="20" viewBox="0 0 16 16"><path d="M1 2h5.6l1.6 2H15v9.6H1z" fill="#87939a"/><rect x="5" y="9.5" width="11" height="6.5" fill="#3c3f41"/><path d="M6.5 11h7v1.8a3 3 0 0 1-3 3h-1a3 3 0 0 1-3-3z" fill="#40b6e0"/><path d="M13.5 11.6h1.2a1 1 0 0 1 0 2.4h-1.2" fill="none" stroke="#40b6e0" stroke-width="1"/></svg>
<div class="t" style="left:71.7px;top:661.45px;line-height:20px;font-size:15.5px;color:#bbbbbb;white-space:pre;letter-spacing:0.850px;">MyApp.iml</div>
<svg style="left:48.50px;top:686.50px" width="20" height="20" viewBox="0 0 16 16"><path d="M13.53 10.58A6.1 6.1 0 1 1 9.58 2.11" fill="none" stroke="#9ccf6a" stroke-width="2.2"/><path d="M9.58 2.11A6.1 6.1 0 0 1 13.89 6.42" fill="none" stroke="#1fa85f" stroke-width="2.2"/><circle cx="8" cy="8" r="3.2" fill="#1a9f5b"/></svg>
<div class="t" style="left:71.7px;top:687.70px;line-height:20px;font-size:15.5px;color:#bbbbbb;white-space:pre;letter-spacing:0.546px;">settings.gradle</div>
<svg style="left:1.00px;top:713.75px" width="18" height="18" viewBox="0 0 16 16"><path d="M3 2L12.5 8 3 14z" fill="#a4a7a9"/></svg>
<svg style="left:26.00px;top:712.75px" width="20" height="20" viewBox="0 0 16 16"><rect x="1" y="4" width="2" height="11" fill="#9aa7b0"/><rect x="4.3" y="2" width="2" height="13" fill="#62b543"/><rect x="7.6" y="4" width="2" height="11" fill="#40b6e0"/><rect x="10.9" y="2" width="2" height="13" fill="#9aa7b0"/><rect x="14" y="5" width="1.8" height="10" fill="#40b6e0"/></svg>
<div class="t" style="left:49.2px;top:713.95px;line-height:20px;font-size:15.5px;color:#bbbbbb;white-space:pre;letter-spacing:0.188px;">External Libraries</div>
<svg style="left:26.00px;top:739.00px" width="20" height="20" viewBox="0 0 16 16"><rect x="5.5" y="1.5" width="9.5" height="8" fill="none" stroke="#3d8fc0" stroke-width="1.3"/><path d="M4 4H1.5v11H10v-3" fill="none" stroke="#9aa7b0" stroke-width="1.3"/><rect x="3" y="6" width="5" height="7" fill="#9aa7b0"/><path d="M4 8h3M4 10h3" stroke="#3c3f41" stroke-width="0.9"/></svg>
<div class="t" style="left:49.2px;top:740.20px;line-height:20px;font-size:15.5px;color:#bbbbbb;white-space:pre;letter-spacing:0.136px;">Scratches and Consoles</div>
</div>
<div class="clip" style="left:1071px;top:155px;width:286px;height:785px">
<div style="left:0px;top:132.25px;width:286px;height:26.5px;background:#0d293e;"></div>
<div style="left:0px;top:526.0px;width:286px;height:26.5px;background:#354033;"></div>
<svg style="left:-3.80px;top:6.00px" width="16" height="16" viewBox="0 0 16 16"><path d="M1.5 3h13L8 13.5z" fill="#aaadb0"/></svg>
<svg style="left:20.20px;top:4.00px" width="20" height="20" viewBox="0 0 16 16"><path d="M1 2h5.6l1.6 2H15v9.6H1z" fill="#87939a"/><rect x="5" y="9.5" width="11" height="6.5" fill="#3c3f41"/><path d="M6.5 11h7v1.8a3 3 0 0 1-3 3h-1a3 3 0 0 1-3-3z" fill="#40b6e0"/><path d="M13.5 11.6h1.2a1 1 0 0 1 0 2.4h-1.2" fill="none" stroke="#40b6e0" stroke-width="1"/></svg>
<div class="t" style="left:43.40000000000005px;top:5.20px;line-height:20px;font-size:15.5px;color:#c8c8c8;white-space:pre;font-weight:bold;letter-spacing:0.311px;">flutter_module</div>
<div class="t" style="left:162.40000000000003px;top:5.20px;line-height:20px;font-size:15.5px;color:#8a8d8f;white-space:pre;letter-spacing:0.640px;">D:\project\AFlutt</div>
<svg style="left:18.70px;top:32.25px" width="16" height="16" viewBox="0 0 16 16"><path d="M1.5 3h13L8 13.5z" fill="#aaadb0"/></svg>
<svg style="left:42.70px;top:30.25px" width="20" height="20" viewBox="0 0 16 16"><path d="M1 2h5.6l1.6 2H15v9.6H1z" fill="#87939a"/><rect x="7" y="10" width="9" height="6" fill="#3c3f41"/><rect x="8" y="11.3" width="2" height="2" fill="#62b543"/><rect x="10.8" y="11.3" width="2" height="2" fill="#40b6e0"/><rect x="13.6" y="11.3" width="2" height="2" fill="#e0713a"/><rect x="7.5" y="14.6" width="8.5" height="1.2" fill="#9aa7b0"/></svg>
<div class="t" style="left:65.90000000000005px;top:31.45px;line-height:20px;font-size:15.5px;color:#bbbbbb;white-space:pre;letter-spacing:0.498px;">.android</div>
<div class="t" style="left:131.90000000000003px;top:31.45px;line-height:20px;font-size:15.5px;color:#c8c8c8;white-space:pre;font-weight:bold;letter-spacing:0.357px;">[flutter_module_android]</div>
<svg style="left:40.20px;top:57.50px" width="18" height="18" viewBox="0 0 16 16"><path d="M3 2L12.5 8 3 14z" fill="#a4a7a9"/></svg>
<svg style="left:65.20px;top:56.50px" width="20" height="20" viewBox="0 0 16 16"><path d="M1 2h5.6l1.6 2H15v9.6H1z" fill="#87939a"/></svg>
<div class="t" style="left:88.40000000000005px;top:57.70px;line-height:20px;font-size:15.5px;color:#bbbbbb;white-space:pre;letter-spacing:0.713px;">app</div>
<svg style="left:41.20px;top:84.75px" width="16" height="16" viewBox="0 0 16 16"><path d="M1.5 3h13L8 13.5z" fill="#aaadb0"/></svg>
<svg style="left:65.20px;top:82.75px" width="20" height="20" viewBox="0 0 16 16"><path d="M1 2h5.6l1.6 2H15v9.6H1z" fill="#87939a"/></svg>
<div class="t" style="left:88.40000000000005px;top:83.95px;line-height:20px;font-size:15.5px;color:#bbbbbb;white-space:pre;letter-spacing:0.582px;">Flutter</div>
<svg style="left:62.70px;top:110.00px" width="18" height="18" viewBox="0 0 16 16"><path d="M3 2L12.5 8 3 14z" fill="#a4a7a9"/></svg>
<svg style="left:87.70px;top:109.00px" width="20" height="20" viewBox="0 0 16 16"><path d="M1 2h5.6l1.6 2H15v9.6H1z" fill="#87939a"/></svg>
<div class="t" style="left:110.90000000000005px;top:110.20px;line-height:20px;font-size:15.5px;color:#bbbbbb;white-space:pre;letter-spacing:0.850px;">build</div>
<svg style="left:63.70px;top:137.25px" width="16" height="16" viewBox="0 0 16 16"><path d="M1.5 3h13L8 13.5z" fill="#aaadb0"/></svg>
<svg style="left:87.70px;top:135.25px" width="20" height="20" viewBox="0 0 16 16"><path d="M1 2h5.6l1.6 2H15v9.6H1z" fill="#87939a"/></svg>
<div class="t" style="left:110.90000000000005px;top:136.45px;line-height:20px;font-size:15.5px;color:#bbbbbb;white-space:pre;letter-spacing:0.113px;">src</div>
<svg style="left:85.20px;top:162.50px" width="18" height="18" viewBox="0 0 16 16"><path d="M3 2L12.5 8 3 14z" fill="#a4a7a9"/></svg>
<svg style="left:110.20px;top:161.50px" width="20" height="20" viewBox="0 0 16 16"><path d="M1 2h5.6l1.6 2H15v9.6H1z" fill="#87939a"/></svg>
<div class="t" style="left:133.40000000000003px;top:162.70px;line-height:20px;font-size:15.5px;color:#bbbbbb;white-space:pre;letter-spacing:0.351px;">main</div>
<svg style="left:87.70px;top:187.75px" width="20" height="20" viewBox="0 0 16 16"><path d="M13.53 10.58A6.1 6.1 0 1 1 9.58 2.11" fill="none" stroke="#9ccf6a" stroke-width="2.2"/><path d="M9.58 2.11A6.1 6.1 0 0 1 13.89 6.42" fill="none" stroke="#1fa85f" stroke-width="2.2"/><circle cx="8" cy="8" r="3.2" fill="#1a9f5b"/></svg>
<div class="t" style="left:110.90000000000005px;top:188.95px;line-height:20px;font-size:15.5px;color:#bbbbbb;white-space:pre;letter-spacing:0.655px;">build.gradle</div>
<svg style="left:87.70px;top:214.00px" width="20" height="20" viewBox="0 0 16 16"><path d="M7.8 0.8H13v14.4H3.2V5.8h4.6z" fill="#9aa7b0"/><path d="M6.8 0.8v4H3.2z" fill="#9aa7b0"/><rect x="9" y="10" width="6.5" height="6" fill="#3c3f41"/><rect x="10" y="11" width="5" height="4.5" fill="#1e1e1e"/><rect x="11" y="13.6" width="2.4" height="0.9" fill="#bbb"/></svg>
<div class="t" style="left:110.90000000000005px;top:215.20px;line-height:20px;font-size:15.5px;color:#bbbbbb;white-space:pre;letter-spacing:0.817px;">flutter.iml</div>
<svg style="left:40.20px;top:241.25px" width="18" height="18" viewBox="0 0 16 16"><path d="M3 2L12.5 8 3 14z" fill="#a4a7a9"/></svg>
<svg style="left:65.20px;top:240.25px" width="20" height="20" viewBox="0 0 16 16"><path d="M1 2h5.6l1.6 2H15v9.6H1z" fill="#87939a"/></svg>
<div class="t" style="left:88.40000000000005px;top:241.45px;line-height:20px;font-size:15.5px;color:#bbbbbb;white-space:pre;letter-spacing:0.652px;">gradle</div>
<svg style="left:65.20px;top:266.50px" width="20" height="20" viewBox="0 0 16 16"><path d="M13.53 10.58A6.1 6.1 0 1 1 9.58 2.11" fill="none" stroke="#9ccf6a" stroke-width="2.2"/><path d="M9.58 2.11A6.1 6.1 0 0 1 13.89 6.42" fill="none" stroke="#1fa85f" stroke-width="2.2"/><circle cx="8" cy="8" r="3.2" fill="#1a9f5b"/></svg>
<div class="t" style="left:88.40000000000005px;top:267.70px;line-height:20px;font-size:15.5px;color:#bbbbbb;white-space:pre;letter-spacing:0.655px;">build.gradle</div>
<svg style="left:65.20px;top:292.75px" width="20" height="20" viewBox="0 0 16 16"><path d="M7.8 0.8H13v14.4H3.2V5.8h4.6z" fill="#9aa7b0"/><path d="M6.8 0.8v4H3.2z" fill="#9aa7b0"/><rect x="5.5" y="7.5" width="10.5" height="8.5" fill="#3c3f41"/><rect x="6.5" y="11" width="2.2" height="5" fill="#e8622c"/><rect x="9.6" y="9.5" width="2.2" height="6.5" fill="#f2a93b"/><rect x="12.7" y="8" width="2.2" height="8" fill="#62b543"/></svg>
<div class="t" style="left:88.40000000000005px;top:293.95px;line-height:20px;font-size:15.5px;color:#bbbbbb;white-space:pre;letter-spacing:0.687px;">gradle.properties</div>
<svg style="left:65.20px;top:319.00px" width="20" height="20" viewBox="0 0 16 16"><path d="M7.8 0.8H13v14.4H3.2V5.8h4.6z" fill="#9aa7b0"/><path d="M6.8 0.8v4H3.2z" fill="#9aa7b0"/><path d="M4.8 8.4h6.6M4.8 10.6h6.6M4.8 12.8h4.6" stroke="#3c3f41" stroke-width="1.1"/></svg>
<div class="t" style="left:88.40000000000005px;top:320.20px;line-height:20px;font-size:15.5px;color:#bbbbbb;white-space:pre;letter-spacing:0.674px;">gradlew</div>
<svg style="left:65.20px;top:345.25px" width="20" height="20" viewBox="0 0 16 16"><path d="M7.8 0.8H13v14.4H3.2V5.8h4.6z" fill="#9aa7b0"/><path d="M6.8 0.8v4H3.2z" fill="#9aa7b0"/><path d="M4.8 8.4h6.6M4.8 10.6h6.6M4.8 12.8h4.6" stroke="#3c3f41" stroke-width="1.1"/></svg>
<div class="t" style="left:88.40000000000005px;top:346.45px;line-height:20px;font-size:15.5px;color:#bbbbbb;white-space:pre;letter-spacing:0.702px;">gradlew.bat</div>
<svg style="left:65.20px;top:371.50px" width="20" height="20" viewBox="0 0 16 16"><path d="M7.8 0.8H13v14.4H3.2V5.8h4.6z" fill="#9aa7b0"/><path d="M6.8 0.8v4H3.2z" fill="#9aa7b0"/><circle cx="4.5" cy="11.5" r="4.6" fill="#3c3f41"/><circle cx="4.5" cy="11.5" r="3.6" fill="#62b543"/><text x="4.5" y="13.7" font-size="6" font-weight="bold" fill="#2b2b2b" text-anchor="middle" font-family="Liberation Sans, sans-serif">G</text></svg>
<div class="t" style="left:88.40000000000005px;top:372.70px;line-height:20px;font-size:15.5px;color:#bbbbbb;white-space:pre;letter-spacing:0.660px;">include_flutter.groovy</div>
<svg style="left:65.20px;top:397.75px" width="20" height="20" viewBox="0 0 16 16"><path d="M7.8 0.8H13v14.4H3.2V5.8h4.6z" fill="#9aa7b0"/><path d="M6.8 0.8v4H3.2z" fill="#9aa7b0"/><rect x="5.5" y="7.5" width="10.5" height="8.5" fill="#3c3f41"/><rect x="6.5" y="11" width="2.2" height="5" fill="#e8622c"/><rect x="9.6" y="9.5" width="2.2" height="6.5" fill="#f2a93b"/><rect x="12.7" y="8" width="2.2" height="8" fill="#62b543"/></svg>
<div class="t" style="left:88.40000000000005px;top:398.95px;line-height:20px;font-size:15.5px;color:#bbbbbb;white-space:pre;letter-spacing:0.618px;">local.properties</div>
<svg style="left:65.20px;top:424.00px" width="20" height="20" viewBox="0 0 16 16"><path d="M13.53 10.58A6.1 6.1 0 1 1 9.58 2.11" fill="none" stroke="#9ccf6a" stroke-width="2.2"/><path d="M9.58 2.11A6.1 6.1 0 0 1 13.89 6.42" fill="none" stroke="#1fa85f" stroke-width="2.2"/><circle cx="8" cy="8" r="3.2" fill="#1a9f5b"/></svg>
<div class="t" style="left:88.40000000000005px;top:425.20px;line-height:20px;font-size:15.5px;color:#bbbbbb;white-space:pre;letter-spacing:0.546px;">settings.gradle</div>
<svg style="left:17.70px;top:451.25px" width="18" height="18" viewBox="0 0 16 16"><path d="M3 2L12.5 8 3 14z" fill="#a4a7a9"/></svg>
<svg style="left:42.70px;top:450.25px" width="20" height="20" viewBox="0 0 16 16"><path d="M1 2h5.6l1.6 2H15v9.6H1z" fill="#87939a"/><rect x="7" y="10" width="9" height="6" fill="#3c3f41"/><rect x="8" y="11.3" width="2" height="2" fill="#62b543"/><rect x="10.8" y="11.3" width="2" height="2" fill="#40b6e0"/><rect x="13.6" y="11.3" width="2" height="2" fill="#e0713a"/><rect x="7.5" y="14.6" width="8.5" height="1.2" fill="#9aa7b0"/></svg>
<div class="t" style="left:65.90000000000005px;top:451.45px;line-height:20px;font-size:15.5px;color:#bbbbbb;white-space:pre;letter-spacing:0.220px;">.ios</div>
<svg style="left:18.70px;top:478.50px" width="16" height="16" viewBox="0 0 16 16"><path d="M1.5 3h13L8 13.5z" fill="#aaadb0"/></svg>
<svg style="left:42.70px;top:476.50px" width="20" height="20" viewBox="0 0 16 16"><path d="M1 2h5.6l1.6 2H15v9.6H1z" fill="#3f87a2"/></svg>
<div class="t" style="left:65.90000000000005px;top:477.70px;line-height:20px;font-size:15.5px;color:#bbbbbb;white-space:pre;letter-spacing:0.831px;">lib</div>
<svg style="left:65.20px;top:502.75px" width="20" height="20" viewBox="0 0 16 16"><path d="M7.8 0.8H13v14.4H3.2V5.8h4.6z" fill="#9aa7b0"/><path d="M6.8 0.8v4H3.2z" fill="#9aa7b0"/><path d="M6 9.5l3-2.5 6.5 6.5v2.5h-6z" fill="#3c3f41"/><path d="M7.2 10l2-1.7 5.6 5.6v1.6h-3z" fill="#40b6e0"/><path d="M7.2 10l4.6 5.5h-2z" fill="#2f7fc0"/></svg>
<div class="t" style="left:88.40000000000005px;top:503.95px;line-height:20px;font-size:15.5px;color:#bbbbbb;white-space:pre;letter-spacing:0.487px;">main.dart</div>
<svg style="left:17.70px;top:530.00px" width="18" height="18" viewBox="0 0 16 16"><path d="M3 2L12.5 8 3 14z" fill="#a4a7a9"/></svg>
<svg style="left:42.70px;top:529.00px" width="20" height="20" viewBox="0 0 16 16"><path d="M1 2h5.6l1.6 2H15v9.6H1z" fill="#87939a"/><path d="M5.5 6.5v5l-3-2.5z" fill="#e0713a"/><path d="M7 6.5v5l3-2.5z" fill="#62b543"/></svg>
<div class="t" style="left:65.90000000000005px;top:530.20px;line-height:20px;font-size:15.5px;color:#bbbbbb;white-space:pre;letter-spacing:0.754px;">test</div>
<svg style="left:42.70px;top:555.25px" width="20" height="20" viewBox="0 0 16 16"><path d="M7.8 0.8H13v14.4H3.2V5.8h4.6z" fill="#9aa7b0"/><path d="M6.8 0.8v4H3.2z" fill="#9aa7b0"/><path d="M4.8 8.4h6.6M4.8 10.6h6.6M4.8 12.8h4.6" stroke="#3c3f41" stroke-width="1.1"/></svg>
<div class="t" style="left:65.90000000000005px;top:556.45px;line-height:20px;font-size:15.5px;color:#bbbbbb;white-space:pre;letter-spacing:0.823px;">.gitignore</div>
<svg style="left:42.70px;top:581.50px" width="20" height="20" viewBox="0 0 16 16"><path d="M7.8 0.8H13v14.4H3.2V5.8h4.6z" fill="#9aa7b0"/><path d="M6.8 0.8v4H3.2z" fill="#9aa7b0"/><path d="M4.8 8.4h6.6M4.8 10.6h6.6M4.8 12.8h4.6" stroke="#3c3f41" stroke-width="1.1"/></svg>
<div class="t" style="left:65.90000000000005px;top:582.70px;line-height:20px;font-size:15.5px;color:#bbbbbb;white-space:pre;letter-spacing:0.452px;">.metadata</div>
<svg style="left:42.70px;top:607.75px" width="20" height="20" viewBox="0 0 16 16"><path d="M7.8 0.8H13v14.4H3.2V5.8h4.6z" fill="#9aa7b0"/><path d="M6.8 0.8v4H3.2z" fill="#9aa7b0"/><path d="M4.8 8.4h6.6M4.8 10.6h6.6M4.8 12.8h4.6" stroke="#3c3f41" stroke-width="1.1"/></svg>
<div class="t" style="left:65.90000000000005px;top:608.95px;line-height:20px;font-size:15.5px;color:#bbbbbb;white-space:pre;letter-spacing:0.149px;">.packages</div>
<svg style="left:42.70px;top:634.00px" width="20" height="20" viewBox="0 0 16 16"><path d="M1 2h5.6l1.6 2H15v9.6H1z" fill="#87939a"/><rect x="5" y="9.5" width="11" height="6.5" fill="#3c3f41"/><path d="M6.5 11h7v1.8a3 3 0 0 1-3 3h-1a3 3 0 0 1-3-3z" fill="#40b6e0"/><path d="M13.5 11.6h1.2a1 1 0 0 1 0 2.4h-1.2" fill="none" stroke="#40b6e0" stroke-width="1"/></svg>
<div class="t" style="left:65.90000000000005px;top:635.20px;line-height:20px;font-size:15.5px;color:#bbbbbb;white-space:pre;letter-spacing:0.704px;">flutter_module.iml</div>
<svg style="left:42.70px;top:660.25px" width="20" height="20" viewBox="0 0 16 16"><path d="M7.8 0.8H13v14.4H3.2V5.8h4.6z" fill="#9aa7b0"/><path d="M6.8 0.8v4H3.2z" fill="#9aa7b0"/><rect x="9" y="10" width="6.5" height="6" fill="#3c3f41"/><rect x="10" y="11" width="5" height="4.5" fill="#1e1e1e"/><rect x="11" y="13.6" width="2.4" height="0.9" fill="#bbb"/></svg>
<div class="t" style="left:65.90000000000005px;top:661.45px;line-height:20px;font-size:15.5px;color:#bbbbbb;white-space:pre;letter-spacing:0.628px;">flutter_module_android.iml</div>
<svg style="left:42.70px;top:686.50px" width="20" height="20" viewBox="0 0 16 16"><path d="M7.8 0.8H13v14.4H3.2V5.8h4.6z" fill="#9aa7b0"/><path d="M6.8 0.8v4H3.2z" fill="#9aa7b0"/><path d="M4.8 8.4h6.6M4.8 10.6h6.6M4.8 12.8h4.6" stroke="#3c3f41" stroke-width="1.1"/></svg>
<div class="t" style="left:65.90000000000005px;top:687.70px;line-height:20px;font-size:15.5px;color:#bbbbbb;white-space:pre;letter-spacing:0.544px;">pubspec.lock</div>
<svg style="left:42.70px;top:712.75px" width="20" height="20" viewBox="0 0 16 16"><rect x="1.5" y="2" width="13" height="12.5" fill="none" stroke="#9aa7b0" stroke-width="1.2"/><path d="M1.5 5.5h13M5.5 2v12.5M10 2v12.5M5.5 8.5h9M5.5 11.5h9" stroke="#9aa7b0" stroke-width="0.9" fill="none"/></svg>
<div class="t" style="left:65.90000000000005px;top:713.95px;line-height:20px;font-size:15.5px;color:#bbbbbb;white-space:pre;letter-spacing:0.447px;">pubspec.yaml</div>
<svg style="left:42.70px;top:739.00px" width="20" height="20" viewBox="0 0 16 16"><path d="M7.8 0.8H13v14.4H3.2V5.8h4.6z" fill="#9aa7b0"/><path d="M6.8 0.8v4H3.2z" fill="#9aa7b0"/><path d="M4.8 8.4h6.6M4.8 10.6h6.6M4.8 12.8h4.6" stroke="#3c3f41" stroke-width="1.1"/></svg>
<div class="t" style="left:65.90000000000005px;top:740.20px;line-height:20px;font-size:15.5px;color:#bbbbbb;white-space:pre;letter-spacing:-0.240px;">README.md</div>
<svg style="left:-4.80px;top:766.25px" width="18" height="18" viewBox="0 0 16 16"><path d="M3 2L12.5 8 3 14z" fill="#a4a7a9"/></svg>
<svg style="left:20.20px;top:765.25px" width="20" height="20" viewBox="0 0 16 16"><rect x="1" y="4" width="2" height="11" fill="#9aa7b0"/><rect x="4.3" y="2" width="2" height="13" fill="#62b543"/><rect x="7.6" y="4" width="2" height="11" fill="#40b6e0"/><rect x="10.9" y="2" width="2" height="13" fill="#9aa7b0"/><rect x="14" y="5" width="1.8" height="10" fill="#40b6e0"/></svg>
<div class="t" style="left:43.40000000000005px;top:766.45px;line-height:20px;font-size:15.5px;color:#bbbbbb;white-space:pre;letter-spacing:0.188px;">External Libraries</div>
</div>
<div style="left:67px;top:963px;width:160px;height:10px;background:#595b5d;"></div>
<div style="left:1346px;top:155px;width:11px;height:735px;background:rgba(255,255,255,.15);"></div>
<div style="left:1071px;top:927px;width:176px;height:10px;background:rgba(110,113,115,.55);"></div>
<div style="left:349px;top:124px;width:1px;height:851px;background:#45484a;"></div>
<div style="left:350px;top:124px;width:663px;height:31px;background:#3c3f41;"></div>
<div style="left:350px;top:123px;width:663px;height:1px;background:#4b4e50;"></div>
<div style="left:350px;top:154px;width:663px;height:1px;background:#515355;"></div>
<div style="left:534px;top:124px;width:1px;height:30px;background:#323435;"></div>
<svg style="left:359.50px;top:129.50px" width="20" height="20" viewBox="0 0 16 16"><path d="M6.5 0.5H13v7H3.5V3.5z" fill="#9aa7b0"/><path d="M4 0.8v2.4h2.4z" fill="#3c3f41"/><rect x="0.5" y="8.3" width="15" height="7" fill="#c8642c"/><path d="M5.5 9.6l-2.5 2.2 2.5 2.2M10.5 9.6l2.5 2.2-2.5 2.2" fill="none" stroke="#2b2b2b" stroke-width="1.2"/></svg>
<div class="t" style="left:383px;top:130.00px;line-height:20px;font-size:16px;color:#bbbbbb;white-space:pre;letter-spacing:0.188px;">activity_main.xml</div>
<svg style="left:514.00px;top:133.00px" width="14" height="14" viewBox="0 0 16 16"><path d="M3.5 3.5l9 9M12.5 3.5l-9 9" stroke="#7f8385" stroke-width="1.2"/></svg>
<div style="left:535px;top:124px;width:183px;height:31px;background:#4e5254;"></div>
<div style="left:535px;top:151px;width:183px;height:4px;background:#4a9fc2;"></div>
<div style="left:718px;top:124px;width:1px;height:30px;background:#323435;"></div>
<svg style="left:544.00px;top:129.50px" width="20" height="20" viewBox="0 0 16 16"><circle cx="8" cy="8" r="7" fill="#3e95b8"/><text x="8" y="11.4" font-size="9.5" font-weight="bold" fill="#2b3b45" text-anchor="middle" font-family="Liberation Sans, sans-serif">C</text></svg>
<div class="t" style="left:569.5px;top:130.00px;line-height:20px;font-size:16px;color:#bbbbbb;white-space:pre;letter-spacing:0.355px;">MainActivity.java</div>
<svg style="left:698.00px;top:133.00px" width="14" height="14" viewBox="0 0 16 16"><path d="M3.5 3.5l9 9M12.5 3.5l-9 9" stroke="#7f8385" stroke-width="1.2"/></svg>
<div style="left:888px;top:124px;width:1px;height:30px;background:#323435;"></div>
<svg style="left:730.00px;top:129.50px" width="20" height="20" viewBox="0 0 16 16"><path d="M13.53 10.58A6.1 6.1 0 1 1 9.58 2.11" fill="none" stroke="#9ccf6a" stroke-width="2.2"/><path d="M9.58 2.11A6.1 6.1 0 0 1 13.89 6.42" fill="none" stroke="#1fa85f" stroke-width="2.2"/><circle cx="8" cy="8" r="3.2" fill="#1a9f5b"/></svg>
<div class="t" style="left:754px;top:130.00px;line-height:20px;font-size:16px;color:#bbbbbb;white-space:pre;letter-spacing:0.329px;">settings.gradle</div>
<svg style="left:870.00px;top:133.00px" width="14" height="14" viewBox="0 0 16 16"><path d="M3.5 3.5l9 9M12.5 3.5l-9 9" stroke="#7f8385" stroke-width="1.2"/></svg>
<div style="left:978px;top:124px;width:1px;height:30px;background:#323435;"></div>
<svg style="left:901.00px;top:129.50px" width="20" height="20" viewBox="0 0 16 16"><path d="M13.53 10.58A6.1 6.1 0 1 1 9.58 2.11" fill="none" stroke="#9ccf6a" stroke-width="2.2"/><path d="M9.58 2.11A6.1 6.1 0 0 1 13.89 6.42" fill="none" stroke="#1fa85f" stroke-width="2.2"/><circle cx="8" cy="8" r="3.2" fill="#1a9f5b"/></svg>
<div class="t" style="left:925px;top:130.00px;line-height:20px;font-size:16px;color:#bbbbbb;white-space:pre;letter-spacing:0.435px;">app</div>
<svg style="left:959.00px;top:133.00px" width="14" height="14" viewBox="0 0 16 16"><path d="M3.5 3.5l9 9M12.5 3.5l-9 9" stroke="#7f8385" stroke-width="1.2"/></svg>
<div style="left:1357px;top:124px;width:1px;height:816px;background:#45484a;"></div>
<div style="left:1358px;top:124px;width:542px;height:31px;background:#3c3f41;"></div>
<div style="left:1358px;top:123px;width:542px;height:1px;background:#4b4e50;"></div>
<div style="left:1358px;top:154px;width:542px;height:1px;background:#515355;"></div>
<div style="left:1358px;top:124px;width:130px;height:31px;background:#4e5254;"></div>
<div style="left:1358px;top:151px;width:130px;height:4px;background:#4a9fc2;"></div>
<div style="left:1488px;top:124px;width:1px;height:30px;background:#323435;"></div>
<svg style="left:1370.00px;top:129.50px" width="20" height="20" viewBox="0 0 16 16"><path d="M7.8 0.8H13v14.4H3.2V5.8h4.6z" fill="#9aa7b0"/><path d="M6.8 0.8v4H3.2z" fill="#9aa7b0"/><path d="M6 9.5l3-2.5 6.5 6.5v2.5h-6z" fill="#3c3f41"/><path d="M7.2 10l2-1.7 5.6 5.6v1.6h-3z" fill="#40b6e0"/><path d="M7.2 10l4.6 5.5h-2z" fill="#2f7fc0"/></svg>
<div class="t" style="left:1393px;top:130.00px;line-height:20px;font-size:16px;color:#bbbbbb;white-space:pre;letter-spacing:0.256px;">main.dart</div>
<svg style="left:1467.00px;top:133.00px" width="14" height="14" viewBox="0 0 16 16"><path d="M3.5 3.5l9 9M12.5 3.5l-9 9" stroke="#7f8385" stroke-width="1.2"/></svg>
<div style="left:1722px;top:124px;width:1px;height:30px;background:#323435;"></div>
<svg style="left:1500.00px;top:129.50px" width="20" height="20" viewBox="0 0 16 16"><path d="M13.53 10.58A6.1 6.1 0 1 1 9.58 2.11" fill="none" stroke="#9ccf6a" stroke-width="2.2"/><path d="M9.58 2.11A6.1 6.1 0 0 1 13.89 6.42" fill="none" stroke="#1fa85f" stroke-width="2.2"/><circle cx="8" cy="8" r="3.2" fill="#1a9f5b"/></svg>
<div class="t" style="left:1524px;top:130.00px;line-height:20px;font-size:16px;color:#bbbbbb;white-space:pre;letter-spacing:0.333px;">flutter_module_android</div>
<svg style="left:1701.00px;top:133.00px" width="14" height="14" viewBox="0 0 16 16"><path d="M3.5 3.5l9 9M12.5 3.5l-9 9" stroke="#7f8385" stroke-width="1.2"/></svg>
<div style="left:350px;top:155px;width:84px;height:789px;background:#313335;"></div>
<div style="left:434px;top:155px;width:579px;height:789px;background:#2b2b2b;"></div>
<div style="left:434px;top:155px;width:1px;height:789px;background:#555758;"></div>
<div style="left:436px;top:566.95px;width:577px;height:31.3px;background:#323232;"></div>
<div style="left:489px;top:285.7px;width:1px;height:125.05000000000001px;background:#3a3a3a;"></div>
<div style="left:489px;top:504.45px;width:1px;height:187.55px;background:#3a3a3a;"></div>
<div style="left:529px;top:660.7px;width:1px;height:31.299999999999955px;background:#3a3a3a;"></div>
<div style="left:1358px;top:155px;width:86px;height:785px;background:#313335;"></div>
<div style="left:1444px;top:155px;width:456px;height:785px;background:#2b2b2b;"></div>
<div style="left:1444px;top:155px;width:1px;height:785px;background:#555758;"></div>
<div style="left:1445px;top:529.7px;width:455px;height:31.3px;background:#323232;"></div>
<div style="left:1480px;top:342.2px;width:1px;height:93.80000000000001px;background:#3a3a3a;"></div>
<div style="left:1500px;top:373.45px;width:1px;height:31.30000000000001px;background:#3a3a3a;"></div>
<div style="left:1480px;top:560.95px;width:1px;height:375.04999999999995px;background:#3a3a3a;"></div>
<div style="left:1500px;top:779.7px;width:1px;height:156.29999999999995px;background:#3a3a3a;"></div>
<div style="left:1607px;top:529.7px;width:120px;height:31.3px;background:#344134;"></div>
<div style="left:350px;top:567px;width:85px;height:31.3px;background:#2f3133;"></div>
<div class="clip" style="left:350px;top:155px;width:663px;height:787px">
<div class="ln" style="left:-16px;top:14.50px;margin-left:0.5px">11</div>
<div class="cd" style="left:96px;top:14.50px"><span class="k">public class </span><span class="wv">MainActivity</span> <span class="k">extends </span>AppCompatActivity {</div>
<div class="ln" style="left:-16px;top:45.75px;margin-left:0.5px">12</div>
<div class="ln" style="left:-16px;top:77.00px;margin-left:0.5px">13</div>
<div class="cd" style="left:96px;top:77.00px">    <span class="a">@Override</span></div>
<div class="ln" style="left:-16px;top:108.25px;margin-left:0.5px">14</div>
<div class="cd" style="left:96px;top:108.25px">    <span class="k">protected void </span><span class="m">onCreate</span>(Bundle savedInstanceState) {</div>
<div class="ln" style="left:-16px;top:139.50px;margin-left:0.5px">15</div>
<div class="cd" style="left:96px;top:139.50px">        <span class="k">super</span>.onCreate(savedInstanceState)<span class="k">;</span></div>
<div class="ln" style="left:-16px;top:170.75px;margin-left:0.5px">16</div>
<div class="cd" style="left:96px;top:170.75px">        setContentView(R.layout.<span class="i">activity_main</span>)<span class="k">;</span></div>
<div class="ln" style="left:-16px;top:202.00px;margin-left:0.5px">17</div>
<div class="cd" style="left:96px;top:202.00px">        inJionFlutter()<span class="k">;</span></div>
<div class="ln" style="left:-16px;top:233.25px;margin-left:0.5px">18</div>
<div class="ln" style="left:-16px;top:264.50px;margin-left:0.5px">19</div>
<div class="cd" style="left:96px;top:264.50px">    }</div>
<div class="ln" style="left:-16px;top:295.75px;margin-left:0.5px">20</div>
<div class="ln" style="left:-16px;top:327.00px;margin-left:0.5px">21</div>
<div class="cd" style="left:96px;top:327.00px">    <span class="k">private void </span><span class="m">in<span class="wg">Jion</span>Flutter</span>() {</div>
<div class="ln" style="left:-16px;top:358.25px;margin-left:0.5px">22</div>
<div class="cd" style="left:96px;top:358.25px">        <span class="c">//<span class="cjk">创建</span>flutterView</span></div>
<div class="ln" style="left:-16px;top:389.50px;margin-left:0.5px">23</div>
<div class="cd" style="left:96px;top:389.50px">        FlutterView flutterView = Flutter.<span class="it">createView</span>(<span class="hint">activity: </span></div>
<div class="ln" style="left:-16px;top:420.75px;margin-left:0.5px">24</div>
<div class="cd" style="left:96px;top:420.75px"><span class="c">//        Flutter.createFragment(&quot;router&quot;);</span></div>
<div class="ln" style="left:-16px;top:452.00px;margin-left:0.5px">25</div>
<div class="cd" style="left:96px;top:452.00px">        <span class="c wv">//<span class="cjk">添加到根</span>view</span></div>
<div class="ln" style="left:-16px;top:483.25px;margin-left:0.5px">26</div>
<div class="cd" style="left:96px;top:483.25px">        addContentView(flutterView<span class="k">,new </span>FrameLayout.LayoutParams(</div>
<div class="ln" style="left:-16px;top:514.50px;margin-left:0.5px">27</div>
<div class="cd" style="left:96px;top:514.50px">                FrameLayout.LayoutParams.<span class="i">MATCH_PARENT</span>))<span class="k">;</span></div>
<div class="ln" style="left:-16px;top:545.75px;margin-left:0.5px">28</div>
<div class="cd" style="left:96px;top:545.75px">    }</div>
<div class="ln" style="left:-16px;top:577.00px;margin-left:0.5px">29</div>
<div class="cd" style="left:96px;top:577.00px">}</div>
<div class="ln" style="left:-16px;top:608.25px;margin-left:0.5px">30</div>
</div>
<div class="clip" style="left:1358px;top:155px;width:541px;height:785px">
<div class="ln" style="left:-13px;top:8.50px;margin-left:0.5px">25</div>
<div class="cd" style="left:99px;top:8.50px">}</div>
<div class="ln" style="left:-13px;top:39.75px;margin-left:0.5px">26</div>
<div class="ln" style="left:-13px;top:71.00px;margin-left:0.5px">27</div>
<div class="cd" style="left:99px;top:71.00px"><span class="kb">class </span>_MyHomePageState <span class="kb">extends </span>State&lt;MyHomePage&gt; {</div>
<div class="ln" style="left:-13px;top:102.25px;margin-left:0.5px">28</div>
<div class="cd" style="left:99px;top:102.25px">  int <span class="f">_counter</span> = <span class="n">0</span><span class="k">;</span></div>
<div class="ln" style="left:-13px;top:133.50px;margin-left:0.5px">29</div>
<div class="ln" style="left:-13px;top:164.75px;margin-left:0.5px">30</div>
<div class="cd" style="left:99px;top:164.75px">  <span class="kb">void </span><span class="m">_incrementCounter</span>() {</div>
<div class="ln" style="left:-13px;top:196.00px;margin-left:0.5px">31</div>
<div class="cd" style="left:99px;top:196.00px">    setState(() {</div>
<div class="ln" style="left:-13px;top:227.25px;margin-left:0.5px">32</div>
<div class="cd" style="left:99px;top:227.25px">      <span class="f">_counter</span>++<span class="k">;</span></div>
<div class="ln" style="left:-13px;top:258.50px;margin-left:0.5px">33</div>
<div class="cd" style="left:99px;top:258.50px">    })<span class="k">;</span></div>
<div class="ln" style="left:-13px;top:289.75px;margin-left:0.5px">34</div>
<div class="cd" style="left:99px;top:289.75px">  }</div>
<div class="ln" style="left:-13px;top:321.00px;margin-left:0.5px">35</div>
<div class="ln" style="left:-13px;top:352.25px;margin-left:0.5px">36</div>
<div class="cd" style="left:99px;top:352.25px">  <span class="a">@</span>override</div>
<div class="ln" style="left:-13px;top:383.50px;margin-left:0.5px">37</div>
<div class="cd" style="left:99px;top:383.50px">  Widget <span class="m">build</span>(BuildContext context) {</div>
<div class="ln" style="left:-13px;top:414.75px;margin-left:0.5px">38</div>
<div class="cd" style="left:99px;top:414.75px">    <span class="c">// This method is rerun every time setState is called</span></div>
<div class="ln" style="left:-13px;top:446.00px;margin-left:0.5px">39</div>
<div class="cd" style="left:99px;top:446.00px">    <span class="c">// by the _incrementCounter method above.</span></div>
<div class="ln" style="left:-13px;top:477.25px;margin-left:0.5px">40</div>
<div class="cd" style="left:99px;top:477.25px">    <span class="c">//</span></div>
<div class="ln" style="left:-13px;top:508.50px;margin-left:0.5px">41</div>
<div class="cd" style="left:99px;top:508.50px">    <span class="c">// The Flutter framework has been optimized to make</span></div>
<div class="ln" style="left:-13px;top:539.75px;margin-left:0.5px">42</div>
<div class="cd" style="left:99px;top:539.75px">    <span class="c">// fast, so that you can just rebuild anything</span></div>
<div class="ln" style="left:-13px;top:571.00px;margin-left:0.5px">43</div>
<div class="cd" style="left:99px;top:571.00px">    <span class="c">// than having to individually change instances</span></div>
<div class="ln" style="left:-13px;top:602.25px;margin-left:0.5px">44</div>
<div class="cd" style="left:99px;top:602.25px">    <span class="kb">return </span><span class="m">Scaffold</span>(</div>
<div class="ln" style="left:-13px;top:633.50px;margin-left:0.5px">45</div>
<div class="cd" style="left:99px;top:633.50px"><span class="c">//      appBar: AppBar(</span></div>
<div class="ln" style="left:-13px;top:664.75px;margin-left:0.5px">46</div>
<div class="cd" style="left:99px;top:664.75px"><span class="c">//        // Here we take the value from the MyHomePage</span></div>
<div class="ln" style="left:-13px;top:696.00px;margin-left:0.5px">47</div>
<div class="cd" style="left:99px;top:696.00px"><span class="c">//        // the App.build method, and use it to set</span></div>
<div class="ln" style="left:-13px;top:727.25px;margin-left:0.5px">48</div>
<div class="cd" style="left:99px;top:727.25px"><span class="c">//        title: Text(widget.title),</span></div>
<div class="ln" style="left:-13px;top:758.50px;margin-left:0.5px">49</div>
<div class="cd" style="left:99px;top:758.50px"><span class="c">//      ),</span></div>
</div>
<svg style="left:426.0px;top:263.25px" width="17" height="21"><path d="M0.5 0.5h16v12L8.5 20.5 0.5 12.5z" fill="#2b2b2b" stroke="#606366" stroke-width="1"/><path d="M4.5 8h8" stroke="#606366" stroke-width="1"/></svg>
<svg style="left:426.0px;top:417.5px" width="17" height="21"><path d="M0.5 20.5h16v-12L8.5 0.5 0.5 8.5z" fill="#2b2b2b" stroke="#606366" stroke-width="1"/><path d="M4.5 13h8" stroke="#606366" stroke-width="1"/></svg>
<svg style="left:426.0px;top:482.0px" width="17" height="21"><path d="M0.5 0.5h16v12L8.5 20.5 0.5 12.5z" fill="#2b2b2b" stroke="#606366" stroke-width="1"/><path d="M4.5 8h8" stroke="#606366" stroke-width="1"/></svg>
<svg style="left:426.0px;top:575.75px" width="17" height="21"><path d="M0.5 0.5h16v12L8.5 20.5 0.5 12.5z" fill="#2b2b2b" stroke="#606366" stroke-width="1"/><path d="M4.5 8h8" stroke="#606366" stroke-width="1"/></svg>
<svg style="left:426.0px;top:605.0px" width="17" height="21"><path d="M0.5 20.5h16v-12L8.5 0.5 0.5 8.5z" fill="#2b2b2b" stroke="#606366" stroke-width="1"/><path d="M4.5 13h8" stroke="#606366" stroke-width="1"/></svg>
<svg style="left:426.0px;top:698.75px" width="17" height="21"><path d="M0.5 20.5h16v-12L8.5 0.5 0.5 8.5z" fill="#2b2b2b" stroke="#606366" stroke-width="1"/><path d="M4.5 13h8" stroke="#606366" stroke-width="1"/></svg>
<svg style="left:1436.0px;top:161.5px" width="17" height="21"><path d="M0.5 20.5h16v-12L8.5 0.5 0.5 8.5z" fill="#2b2b2b" stroke="#606366" stroke-width="1"/><path d="M4.5 13h8" stroke="#606366" stroke-width="1"/></svg>
<svg style="left:1436.0px;top:226.0px" width="17" height="21"><path d="M0.5 0.5h16v12L8.5 20.5 0.5 12.5z" fill="#2b2b2b" stroke="#606366" stroke-width="1"/><path d="M4.5 8h8" stroke="#606366" stroke-width="1"/></svg>
<svg style="left:1436.0px;top:319.75px" width="17" height="21"><path d="M0.5 0.5h16v12L8.5 20.5 0.5 12.5z" fill="#2b2b2b" stroke="#606366" stroke-width="1"/><path d="M4.5 8h8" stroke="#606366" stroke-width="1"/></svg>
<svg style="left:1436.0px;top:442.75px" width="17" height="21"><path d="M0.5 20.5h16v-12L8.5 0.5 0.5 8.5z" fill="#2b2b2b" stroke="#606366" stroke-width="1"/><path d="M4.5 13h8" stroke="#606366" stroke-width="1"/></svg>
<svg style="left:1436.0px;top:538.5px" width="17" height="21"><path d="M0.5 0.5h16v12L8.5 20.5 0.5 12.5z" fill="#2b2b2b" stroke="#606366" stroke-width="1"/><path d="M4.5 8h8" stroke="#606366" stroke-width="1"/></svg>
<svg style="left:1436.0px;top:569.75px" width="17" height="21"><path d="M0.5 0.5h16v12L8.5 20.5 0.5 12.5z" fill="#2b2b2b" stroke="#606366" stroke-width="1"/><path d="M4.5 8h8" stroke="#606366" stroke-width="1"/></svg>
<svg style="left:1436.0px;top:724.0px" width="17" height="21"><path d="M0.5 20.5h16v-12L8.5 0.5 0.5 8.5z" fill="#2b2b2b" stroke="#606366" stroke-width="1"/><path d="M4.5 13h8" stroke="#606366" stroke-width="1"/></svg>
<svg style="left:1436.0px;top:788.5px" width="17" height="21"><path d="M0.5 0.5h16v12L8.5 20.5 0.5 12.5z" fill="#2b2b2b" stroke="#606366" stroke-width="1"/><path d="M4.5 8h8" stroke="#606366" stroke-width="1"/></svg>
<svg style="left:1436.0px;top:911.5px" width="17" height="21"><path d="M0.5 20.5h16v-12L8.5 0.5 0.5 8.5z" fill="#2b2b2b" stroke="#606366" stroke-width="1"/><path d="M4.5 13h8" stroke="#606366" stroke-width="1"/></svg>
<svg style="left:382.6px;top:258.2px" width="24" height="26"><circle cx="9" cy="14" r="7.7" fill="#8cc4e6"/><circle cx="9" cy="14" r="3" fill="none" stroke="#4a5a66" stroke-width="1.8"/><path d="M19.4 24V5" stroke="#e0604c" stroke-width="1.8" fill="none"/><path d="M14.8 7.2L19.4 1.2 24 7.2z" fill="#e0604c"/></svg>
<svg style="left:1391.6px;top:532.8px" width="24" height="26"><circle cx="9" cy="14" r="7.7" fill="#8cc4e6"/><circle cx="9" cy="14" r="3" fill="none" stroke="#4a5a66" stroke-width="1.8"/><path d="M19.4 24V5" stroke="#e0604c" stroke-width="1.8" fill="none"/><path d="M14.8 7.2L19.4 1.2 24 7.2z" fill="#e0604c"/></svg>
<svg style="left:385px;top:163px" width="29" height="29"><path d="M11 0H23V13.7H4V7H11z" fill="#9aa7b0"/><path d="M10 0V6H4z" fill="#9aa7b0"/><rect x="0" y="15" width="29" height="14" fill="#c25a24"/><path d="M11 18L5 22l6 4M18 18l6 4-6 4" fill="none" stroke="#2b2b2b" stroke-width="2"/></svg>
<svg style="left:644px;top:577px" width="18" height="20" viewBox="0 0 18 20"><circle cx="9" cy="7.5" r="6.5" fill="#f2b33d"/><rect x="5.5" y="13" width="7" height="4.5" rx="1" fill="#9a9da0"/><path d="M6.5 6l2.5 3 2.5-3" stroke="#fbe3a6" stroke-width="1" fill="none"/></svg>
<div style="left:998px;top:157px;width:12px;height:13px;background:#7d7359;"></div>
<div style="left:995px;top:228px;width:17px;height:2px;background:#c9a227;"></div>
<div style="left:1002px;top:276px;width:11px;height:654px;background:rgba(255,255,255,.2);"></div>
<div style="left:995px;top:280px;width:17px;height:2px;background:#6f6a58;"></div>
<div style="left:446px;top:934px;width:283px;height:9px;background:#595b5d;"></div>
<div style="left:1889px;top:408px;width:10px;height:238px;background:rgba(255,255,255,.2);"></div>
<div style="left:1883px;top:522px;width:16px;height:2px;background:#2c7a34;"></div>
<div style="left:1457px;top:928px;width:199px;height:9px;background:rgba(100,103,105,.75);"></div>
<svg style="left:1881px;top:157px" width="18" height="14"><path d="M2 7l4.5 4.5L16 2" fill="none" stroke="#499c54" stroke-width="2.6"/></svg>
<div style="left:350px;top:944px;width:663px;height:32px;background:#3c3f41;"></div>
<div style="left:350px;top:944px;width:663px;height:1px;background:#414446;"></div>
<div class="t" style="left:447px;top:951.50px;line-height:20px;font-size:16px;color:#bbbbbb;white-space:pre;letter-spacing:0.471px;">MainActivity</div>
<div class="t" style="left:553px;top:951.00px;line-height:20px;font-size:16px;color:#6e7173;white-space:pre;">›</div>
<div class="t" style="left:568px;top:951.50px;line-height:20px;font-size:16px;color:#bbbbbb;white-space:pre;letter-spacing:0.146px;">inJionFlutter()</div>
<div style="left:39px;top:975px;width:1001px;height:1px;background:#515355;"></div>
<div style="left:39px;top:976px;width:1001px;height:24px;background:#3c3f41;"></div>
<svg style="left:75.00px;top:980.00px" width="18" height="18" viewBox="0 0 16 16"><path d="M2.2 0.8L14 8 2.2 15.2z" fill="#3fae3f"/><circle cx="13" cy="13.3" r="2.2" fill="#3c3f41"/><circle cx="13" cy="13.3" r="1.5" fill="#2e8b3a"/></svg>
<div class="t" style="left:99px;top:980.5px;line-height:20px;font-size:14.5px;color:#bbbbbb;letter-spacing:-0.287px"><u>4</u>: Run</div>
<svg style="left:162.50px;top:980.50px" width="19" height="19" viewBox="0 0 16 16"><circle cx="9.5" cy="9" r="4.2" fill="#f0c090"/><path d="M5 8.5a4.6 4.6 0 0 1 9.2-0.6L11 6.5 7 7z" fill="#8a8f92"/><path d="M4.5 16a5 4 0 0 1 10 0z" fill="#3d9be0"/><circle cx="4" cy="3.8" r="3.2" fill="#e8e8e8"/><path d="M2.3 3.2h3.4M2.3 4.6h3.4" stroke="#555" stroke-width="0.7"/></svg>
<div class="t" style="left:188px;top:980.50px;line-height:20px;font-size:14.5px;color:#bbbbbb;white-space:pre;letter-spacing:-0.406px;">TODO</div>
<svg style="left:251.00px;top:981.00px" width="18" height="18" viewBox="0 0 16 16"><path d="M2 13a6.2 6.2 0 0 1 9.5-7.3" fill="none" stroke="#a7abad" stroke-width="2.2"/><path d="M13 7.3a6.2 6.2 0 0 1 1 5.7h-2.2a4.4 4.4 0 0 0-0.6-4.3z" fill="#a7abad"/><path d="M11.8 5.7L7.5 12.3l-1.6-1z" fill="#a7abad"/></svg>
<div class="t" style="left:274px;top:980.50px;line-height:20px;font-size:14.5px;color:#bbbbbb;white-space:pre;letter-spacing:0.384px;">Profiler</div>
<svg style="left:347.50px;top:980.50px" width="19" height="19" viewBox="0 0 16 16"><ellipse cx="8.5" cy="8.5" rx="4.8" ry="5.3" fill="#e82020" transform="rotate(25 8.5 8.5)"/><circle cx="5" cy="10.5" r="2.3" fill="#222"/><circle cx="4.2" cy="10.2" r="0.7" fill="#ddd"/><circle cx="6" cy="11.3" r="0.7" fill="#ddd"/><path d="M2 5l3 2M1.5 14l3-1.5M10 1.5l-.5 3M14.5 5l-2.3 1.5M15 12l-2.5-.5M10 15.5l-.5-2.5" stroke="#222" stroke-width="0.9"/></svg>
<div class="t" style="left:372px;top:980.50px;line-height:20px;font-size:14.5px;color:#bbbbbb;white-space:pre;letter-spacing:0.005px;">FindBugs-IDEA</div>
<svg style="left:500.00px;top:981.00px" width="18" height="18" viewBox="0 0 16 16"><path d="M1 4h13M1 8h8M1 12h11" stroke="#b4b8ba" stroke-width="2"/></svg>
<div class="t" style="left:523px;top:980.5px;line-height:20px;font-size:14.5px;color:#bbbbbb;letter-spacing:0.038px"><u>6</u>: Logcat</div>
<svg style="left:606.50px;top:980.50px" width="19" height="19" viewBox="0 0 16 16"><path d="M4 1v11M1 9l3 4.5L7 9" stroke="#3fae3f" stroke-width="1.8" fill="none"/><text x="8" y="6" font-size="6" fill="#b4b8ba" font-family="Liberation Mono, monospace">01</text><text x="8" y="12" font-size="6" fill="#b4b8ba" font-family="Liberation Mono, monospace">10</text></svg>
<div class="t" style="left:629px;top:980.50px;line-height:20px;font-size:14.5px;color:#bbbbbb;white-space:pre;letter-spacing:0.351px;">Build</div>
<svg style="left:687.50px;top:980.50px" width="19" height="19" viewBox="0 0 16 16"><rect x="1" y="1.5" width="14" height="13" fill="#1e1e1e" stroke="#6a6d6f" stroke-width="1"/><path d="M3.5 6l3 2.5-3 2.5M8 11.5h4" stroke="#e0e0e0" stroke-width="1.2" fill="none"/></svg>
<div class="t" style="left:710px;top:980.50px;line-height:20px;font-size:14.5px;color:#bbbbbb;white-space:pre;letter-spacing:0.401px;">Terminal</div>
<svg style="left:797.00px;top:980.00px" width="20" height="20" viewBox="0 0 16 16"><path d="M9.5 0.8L2.2 8.1l2.3 2.3L14 0.8z" fill="#54c5f8"/><path d="M9.5 7.3L5.6 11.2l2.3 2.3L14 7.3z" fill="#54c5f8"/><path d="M5.6 11.2l2.3 2.3 1.6 1.7H14l-3.9-3.9z" fill="#01579b"/></svg>
<div class="t" style="left:820px;top:980.50px;line-height:20px;font-size:14.5px;color:#bbbbbb;white-space:pre;letter-spacing:0.204px;">Flutter Performance</div>
<svg style="left:983.50px;top:980.50px" width="19" height="19" viewBox="0 0 16 16"><circle cx="8" cy="8" r="7.3" fill="#3fae4f"/><text x="8" y="11.8" font-size="10.5" font-weight="bold" fill="#e8f5e8" text-anchor="middle" font-family="Liberation Sans, sans-serif">2</text></svg>
<div class="t" style="left:1010px;top:980.50px;line-height:20px;font-size:14.5px;color:#bbbbbb;white-space:pre;letter-spacing:-0.367px;">Event Log</div>
<div style="left:1040px;top:940px;width:1px;height:60px;background:#1c82da;"></div>
<div style="left:1041px;top:940px;width:3px;height:60px;background:#2540a2;"></div>
<div style="left:1044px;top:939px;width:883px;height:1px;background:#515355;"></div>
<div style="left:1044px;top:940px;width:883px;height:27px;background:#3c3f41;"></div>
<div style="left:1177px;top:967px;width:750px;height:1px;background:#2f3133;"></div>
<div style="left:1044px;top:968px;width:883px;height:26px;background:#3c3f41;"></div>
<div class="clip" style="left:1044px;top:940px;width:883px;height:54px">
<svg style="left:39.50px;top:5.50px" width="19" height="19" viewBox="0 0 16 16"><path d="M3 1.5h6.5l5 5V13l-2 1.5H6L1 9.5V4z" fill="#40b6e0"/><path d="M3 1.5L14.5 13l-2 1.5H10L1 6V4z" fill="#2f7fc0" opacity=".75"/><path d="M1 6v3.5L6 14.5h4z" fill="#54d0f0"/></svg>
<div class="t" style="left:61px;top:5.50px;line-height:20px;font-size:14.5px;color:#bbbbbb;white-space:pre;letter-spacing:0.183px;">Dart Analysis</div>
<svg style="left:173.50px;top:5.50px" width="19" height="19" viewBox="0 0 16 16"><circle cx="9.5" cy="9" r="4.2" fill="#f0c090"/><path d="M5 8.5a4.6 4.6 0 0 1 9.2-0.6L11 6.5 7 7z" fill="#8a8f92"/><path d="M4.5 16a5 4 0 0 1 10 0z" fill="#3d9be0"/><circle cx="4" cy="3.8" r="3.2" fill="#e8e8e8"/><path d="M2.3 3.2h3.4M2.3 4.6h3.4" stroke="#555" stroke-width="0.7"/></svg>
<div class="t" style="left:196px;top:5.50px;line-height:20px;font-size:14.5px;color:#bbbbbb;white-space:pre;letter-spacing:-0.406px;">TODO</div>
<svg style="left:263.50px;top:5.50px" width="19" height="19" viewBox="0 0 16 16"><ellipse cx="8.5" cy="8.5" rx="4.8" ry="5.3" fill="#e82020" transform="rotate(25 8.5 8.5)"/><circle cx="5" cy="10.5" r="2.3" fill="#222"/><circle cx="4.2" cy="10.2" r="0.7" fill="#ddd"/><circle cx="6" cy="11.3" r="0.7" fill="#ddd"/><path d="M2 5l3 2M1.5 14l3-1.5M10 1.5l-.5 3M14.5 5l-2.3 1.5M15 12l-2.5-.5M10 15.5l-.5-2.5" stroke="#222" stroke-width="0.9"/></svg>
<div class="t" style="left:286px;top:5.50px;line-height:20px;font-size:14.5px;color:#bbbbbb;white-space:pre;letter-spacing:0.005px;">FindBugs-IDEA</div>
<svg style="left:415.00px;top:6.00px" width="18" height="18" viewBox="0 0 16 16"><path d="M1 4h13M1 8h8M1 12h11" stroke="#b4b8ba" stroke-width="2"/></svg>
<div class="t" style="left:438px;top:5.5px;line-height:20px;font-size:14.5px;color:#bbbbbb;letter-spacing:0.038px"><u>6</u>: Logcat</div>
<svg style="left:521.50px;top:5.50px" width="19" height="19" viewBox="0 0 16 16"><rect x="1" y="1.5" width="14" height="13" fill="#1e1e1e" stroke="#6a6d6f" stroke-width="1"/><path d="M3.5 6l3 2.5-3 2.5M8 11.5h4" stroke="#e0e0e0" stroke-width="1.2" fill="none"/></svg>
<div class="t" style="left:545px;top:5.50px;line-height:20px;font-size:14.5px;color:#bbbbbb;white-space:pre;letter-spacing:0.401px;">Terminal</div>
<svg style="left:632.00px;top:5.00px" width="20" height="20" viewBox="0 0 16 16"><path d="M9.5 0.8L2.2 8.1l2.3 2.3L14 0.8z" fill="#54c5f8"/><path d="M9.5 7.3L5.6 11.2l2.3 2.3L14 7.3z" fill="#54c5f8"/><path d="M5.6 11.2l2.3 2.3 1.6 1.7H14l-3.9-3.9z" fill="#01579b"/></svg>
<div class="t" style="left:655px;top:5.50px;line-height:20px;font-size:14.5px;color:#bbbbbb;white-space:pre;letter-spacing:0.204px;">Flutter Performance</div>
<svg style="left:817.00px;top:5.00px" width="20" height="20" viewBox="0 0 16 16"><circle cx="8" cy="7" r="5.8" fill="none" stroke="#7a7d80" stroke-width="1.3"/><path d="M4.5 11.5L3 15l4-2" fill="none" stroke="#7a7d80" stroke-width="1.2"/></svg>
<div class="t" style="left:844px;top:5.50px;line-height:20px;font-size:14.5px;color:#bbbbbb;white-space:pre;letter-spacing:-0.367px;">Event Log</div>
<div class="t" style="left:463px;top:32.50px;line-height:20px;font-size:14.5px;color:#9da0a2;white-space:pre;letter-spacing:0.543px;">37:28</div>
<div class="t" style="left:516px;top:32.50px;line-height:20px;font-size:14.5px;color:#9da0a2;white-space:pre;letter-spacing:-0.466px;">CRLF</div>
<div class="t" style="left:574px;top:32.50px;line-height:20px;font-size:14.5px;color:#9da0a2;white-space:pre;letter-spacing:0.184px;">UTF-8</div>
<div class="t" style="left:634px;top:32.50px;line-height:20px;font-size:14.5px;color:#9da0a2;white-space:pre;letter-spacing:0.482px;">Context: &lt;no context&gt;</div>
<svg style="left:551.00px;top:36.00px" width="8" height="8" viewBox="0 0 16 16"><path d="M2.5 5h11L8 11.5z" fill="#9da0a2"/></svg>
<svg style="left:615.00px;top:36.00px" width="8" height="8" viewBox="0 0 16 16"><path d="M2.5 5h11L8 11.5z" fill="#9da0a2"/></svg>
<svg style="left:11px;top:33.5px" width="20" height="20"><rect x="1" y="1" width="16" height="13" fill="#4a4d4f" stroke="#8a8d8f" stroke-width="1.3"/><path d="M0.5 17.5h17" stroke="#8a8d8f" stroke-width="1.3"/></svg>
</div>
<div style="left:1044px;top:994px;width:883px;height:6px;background:#2f3f86;"></div>
<svg style="left:0;top:0" width="1927" height="1000" viewBox="0 0 1927 1000"><ellipse cx="1458" cy="997.3" rx="9.0" ry="2.3" fill="#222c66" opacity="0.48"/><ellipse cx="1784" cy="995.5" rx="8.3" ry="1.5" fill="#3a4c9a" opacity="0.44"/><ellipse cx="1789" cy="998.0" rx="10.2" ry="1.6" fill="#263474" opacity="0.58"/><ellipse cx="1723" cy="999.2" rx="9.9" ry="1.1" fill="#263474" opacity="0.41"/><ellipse cx="1854" cy="996.6" rx="9.4" ry="1.9" fill="#222c66" opacity="0.48"/><ellipse cx="1256" cy="998.3" rx="6.6" ry="1.7" fill="#263474" opacity="0.51"/><ellipse cx="1963" cy="998.5" rx="13.0" ry="1.5" fill="#263474" opacity="0.49"/><ellipse cx="1307" cy="997.0" rx="4.6" ry="2.3" fill="#263474" opacity="0.55"/><ellipse cx="1926" cy="996.1" rx="11.6" ry="2.4" fill="#263474" opacity="0.42"/><ellipse cx="1387" cy="995.4" rx="10.4" ry="1.9" fill="#222c66" opacity="0.71"/><ellipse cx="1290" cy="995.1" rx="4.8" ry="1.6" fill="#4a62b0" opacity="0.77"/><ellipse cx="1165" cy="995.3" rx="10.4" ry="2.2" fill="#263474" opacity="0.47"/><ellipse cx="1557" cy="999.9" rx="8.0" ry="2.2" fill="#3a4c9a" opacity="0.57"/><ellipse cx="1395" cy="995.0" rx="7.6" ry="2.3" fill="#3a4c9a" opacity="0.79"/><ellipse cx="1588" cy="996.1" rx="13.0" ry="1.6" fill="#263474" opacity="0.74"/><ellipse cx="1634" cy="996.1" rx="4.9" ry="1.4" fill="#3a4c9a" opacity="0.71"/><ellipse cx="1344" cy="995.4" rx="6.7" ry="1.3" fill="#263474" opacity="0.65"/><ellipse cx="1054" cy="995.6" rx="7.3" ry="1.9" fill="#222c66" opacity="0.73"/><ellipse cx="1166" cy="996.6" rx="7.5" ry="1.3" fill="#3a4c9a" opacity="0.64"/><ellipse cx="1711" cy="998.4" rx="5.4" ry="1.6" fill="#3a4c9a" opacity="0.59"/><ellipse cx="1113" cy="995.2" rx="4.4" ry="2.4" fill="#263474" opacity="0.50"/><ellipse cx="1692" cy="996.5" rx="6.3" ry="1.3" fill="#222c66" opacity="0.69"/><ellipse cx="1104" cy="996.4" rx="6.1" ry="2.4" fill="#263474" opacity="0.48"/><ellipse cx="1055" cy="996.2" rx="6.4" ry="1.1" fill="#222c66" opacity="0.51"/><ellipse cx="1531" cy="996.8" rx="12.8" ry="2.3" fill="#263474" opacity="0.79"/><ellipse cx="1648" cy="997.9" rx="10.2" ry="2.4" fill="#3a4c9a" opacity="0.59"/><ellipse cx="1371" cy="995.1" rx="6.8" ry="2.0" fill="#263474" opacity="0.59"/><ellipse cx="1716" cy="995.4" rx="6.9" ry="1.8" fill="#263474" opacity="0.69"/><ellipse cx="1873" cy="999.0" rx="10.6" ry="2.4" fill="#3a4c9a" opacity="0.54"/><ellipse cx="1674" cy="999.7" rx="12.1" ry="1.0" fill="#222c66" opacity="0.60"/><ellipse cx="1053" cy="997.9" rx="10.0" ry="1.9" fill="#222c66" opacity="0.43"/><ellipse cx="1631" cy="998.6" rx="12.9" ry="1.6" fill="#222c66" opacity="0.69"/><ellipse cx="1577" cy="997.6" rx="8.0" ry="1.8" fill="#263474" opacity="0.52"/><ellipse cx="1121" cy="997.5" rx="4.2" ry="1.9" fill="#263474" opacity="0.77"/><ellipse cx="1277" cy="995.7" rx="4.1" ry="1.9" fill="#4a62b0" opacity="0.61"/><ellipse cx="1737" cy="997.5" rx="7.1" ry="1.4" fill="#222c66" opacity="0.56"/><ellipse cx="1272" cy="999.4" rx="9.7" ry="1.6" fill="#3a4c9a" opacity="0.63"/><ellipse cx="1333" cy="996.8" rx="5.2" ry="2.3" fill="#222c66" opacity="0.42"/><ellipse cx="1099" cy="995.6" rx="12.8" ry="1.7" fill="#3a4c9a" opacity="0.77"/><ellipse cx="1809" cy="998.4" rx="7.4" ry="2.1" fill="#222c66" opacity="0.74"/><ellipse cx="1618" cy="996.4" rx="6.9" ry="1.9" fill="#263474" opacity="0.67"/><ellipse cx="1300" cy="998.2" rx="7.2" ry="1.6" fill="#263474" opacity="0.48"/><ellipse cx="1752" cy="999.0" rx="6.4" ry="2.5" fill="#3a4c9a" opacity="0.45"/><ellipse cx="1141" cy="999.8" rx="8.8" ry="2.0" fill="#4a62b0" opacity="0.48"/><ellipse cx="1480" cy="998.8" rx="5.6" ry="1.8" fill="#263474" opacity="0.41"/><ellipse cx="1249" cy="997.0" rx="11.0" ry="2.2" fill="#3a4c9a" opacity="0.76"/><ellipse cx="1121" cy="995.6" rx="12.4" ry="1.7" fill="#222c66" opacity="0.65"/><ellipse cx="1882" cy="997.3" rx="7.4" ry="2.0" fill="#4a62b0" opacity="0.48"/><ellipse cx="1708" cy="996.1" rx="11.4" ry="2.3" fill="#263474" opacity="0.79"/><ellipse cx="1944" cy="996.3" rx="8.8" ry="2.1" fill="#4a62b0" opacity="0.41"/><ellipse cx="1507" cy="997.8" rx="4.3" ry="2.2" fill="#4a62b0" opacity="0.59"/><ellipse cx="1066" cy="997.1" rx="11.3" ry="1.1" fill="#263474" opacity="0.61"/><ellipse cx="1675" cy="995.7" rx="12.2" ry="1.8" fill="#222c66" opacity="0.69"/><ellipse cx="1817" cy="997.9" rx="10.2" ry="2.0" fill="#222c66" opacity="0.70"/><ellipse cx="1446" cy="997.6" rx="9.0" ry="2.3" fill="#3a4c9a" opacity="0.62"/><ellipse cx="1328" cy="996.5" rx="7.4" ry="1.2" fill="#3a4c9a" opacity="0.62"/><ellipse cx="1292" cy="997.7" rx="8.5" ry="1.8" fill="#222c66" opacity="0.64"/><ellipse cx="1066" cy="997.7" rx="12.7" ry="2.5" fill="#222c66" opacity="0.45"/><ellipse cx="1126" cy="997.1" rx="5.5" ry="2.4" fill="#222c66" opacity="0.77"/><ellipse cx="1289" cy="996.7" rx="8.3" ry="2.4" fill="#3a4c9a" opacity="0.77"/><ellipse cx="1891" cy="996.0" rx="8.7" ry="1.9" fill="#263474" opacity="0.77"/><ellipse cx="1160" cy="995.2" rx="11.0" ry="1.2" fill="#263474" opacity="0.40"/><ellipse cx="1303" cy="998.1" rx="10.5" ry="1.2" fill="#3a4c9a" opacity="0.69"/><ellipse cx="1154" cy="998.6" rx="8.6" ry="2.1" fill="#4a62b0" opacity="0.75"/><ellipse cx="1062" cy="997.7" rx="9.7" ry="2.3" fill="#3a4c9a" opacity="0.61"/><ellipse cx="1242" cy="996.2" rx="5.9" ry="2.1" fill="#3a4c9a" opacity="0.72"/><ellipse cx="1875" cy="999.5" rx="6.8" ry="1.3" fill="#4a62b0" opacity="0.71"/><ellipse cx="1220" cy="995.7" rx="4.9" ry="1.1" fill="#3a4c9a" opacity="0.56"/><ellipse cx="1442" cy="996.0" rx="12.5" ry="1.9" fill="#3a4c9a" opacity="0.72"/><ellipse cx="1129" cy="999.6" rx="9.1" ry="2.5" fill="#4a62b0" opacity="0.45"/></svg>
<div style="left:0px;top:986px;width:45px;height:14px;background:#ffffff;border-top:1px solid #b4b4b4;border-right:1px solid #222;box-sizing:border-box"></div>
<div class="t" style="left:-3px;top:990px;font-size:17px;line-height:20px;color:#1a6fd0;font-weight:bold;font-family:'Liberation Sans','Noto Sans CJK SC',sans-serif">四 第</div>
<svg style="left:12px;top:35px" width="22" height="22"><circle cx="11" cy="11" r="10" fill="#c8201f"/><path d="M11 5l5.2 5.5h-2.7v4.5h-5v-4.5H5.8z" fill="#fff"/></svg>
<svg style="left:5px;top:0" width="16" height="12"><path d="M2 -2l12 12M14 -2L2 10" stroke="#555" stroke-width="1"/></svg>
<div class="t" style="left:0px;top:414.00px;line-height:20px;font-size:13px;color:#c8203a;white-space:pre;">A</div>
<svg style="left:0;top:0" width="1965" height="1000"><rect x="47.7" y="81" width="104.5" height="56" rx="6" fill="none" stroke="#f5241c" stroke-width="4.7"/><polygon points="161.05,99.9 1118.4,194.4 1112.5,190.5 1128.5,200 1110,208.5 1117.5,203.2 160.95,100.9" fill="#fb2015"/><rect x="1048.6" y="74.6" width="177.5" height="64.7" rx="6" fill="none" stroke="#1cac1c" stroke-width="4.2"/><ellipse cx="1202.1" cy="680" rx="80" ry="54.5" fill="none" stroke="#fa1e14" stroke-width="5" transform="rotate(1.5 1202 680)"/><ellipse cx="1205.3" cy="675.3" rx="58.7" ry="41.7" fill="none" stroke="#1e96fa" stroke-width="4"/></svg>
<div class="t" style="left:1401px;top:945.0px;font-size:42px;line-height:48px;color:#fff;letter-spacing:-1.041px;text-shadow:0 0 1px rgba(0,0,0,.35)">https://blog.csdn.net/ytfunnysite</div>
<div class="t" style="left:1804px;top:973px;font-size:17px;line-height:24px;color:rgba(255,255,255,.55);font-family:'Liberation Sans','Noto Sans CJK SC',sans-serif;letter-spacing:0px">@稀土掘金技术社区</div>
</body></html>
